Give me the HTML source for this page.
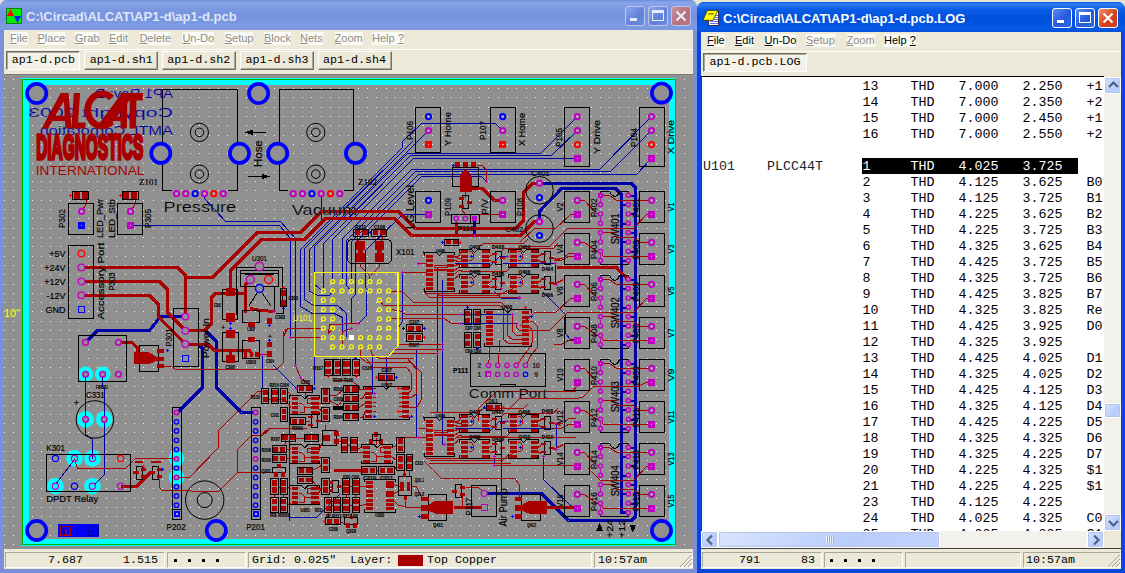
<!DOCTYPE html>
<html><head><meta charset="utf-8"><title>Circad</title><style>
*{box-sizing:border-box;margin:0;padding:0}
html,body{width:1125px;height:573px;overflow:hidden;background:#e9e3cf;font-family:"Liberation Sans",sans-serif}
.abs{position:absolute}
.win{position:absolute;overflow:hidden}
#w1{left:0;top:0;width:697px;height:573px;background:#7b8fd8;border-radius:7px 7px 0 0}
#w2{left:697px;top:2px;width:428px;height:571px;background:#0a46de;border-radius:7px 7px 0 0}
.tb{position:absolute;left:0;top:0;right:0;height:30px}
#w1 .tb{background:linear-gradient(#6f90e0 0%,#8aa6ea 10%,#7a97e0 30%,#7693de 60%,#7e9be4 85%,#7b97df 100%)}
#w2 .tb{background:linear-gradient(#0a5fe8 0%,#2f7bf2 8%,#0a5ce6 25%,#0050dc 55%,#0458e8 85%,#0651dc 100%)}
.tt{position:absolute;font-weight:bold;font-size:13px;color:#fff;white-space:nowrap}
#w1 .tt{color:#dfe6f8}
.cb{position:absolute;width:20px;height:20px;border-radius:3px;border:1px solid #fff}
#w1 .cb{border-color:#b9c6ee;background:linear-gradient(135deg,#8fa6ea,#5f7fd8 60%,#6f8ee0)}
#w1 .cb.x{background:linear-gradient(135deg,#c98f98,#b5707c 60%,#b87782)}
#w2 .cb{background:linear-gradient(135deg,#5d8ff5,#2459dc 55%,#2f66e6)}
#w2 .cb.x{background:linear-gradient(135deg,#f09070,#d6421c 55%,#c8401e)}
.menu{position:absolute;background:#ece9d8;font-size:11px;color:#000}
.menu span{position:absolute;top:2px;height:13px;line-height:13px;white-space:nowrap;background:#fbfaf5}
.menu span.d{color:#8d8d84}
.menu u{text-decoration:underline}
.tabs{position:absolute;background:#ece9d8;border-top:1px solid #fff}
.tab{position:absolute;height:19px;font-family:"Liberation Mono",monospace;font-size:11.7px;line-height:17px;text-align:center;white-space:nowrap;color:#000;background:#ece9d8;border:1px solid;border-color:#fff #716f64 #716f64 #fff;box-shadow:inset -1px -1px 0 #aca899}
.tab.sel{border-color:#716f64 #fff #fff #716f64;box-shadow:inset 1px 1px 0 #aca899;background:#f4f2e8}
.sb{position:absolute;background:#ece9d8;height:20px;font-family:"Liberation Mono",monospace;font-size:11.7px;line-height:17px;color:#000;white-space:pre}
.sb .c{position:absolute;top:3px;height:16px;border:1px solid;border-color:#aca899 #fff #fff #aca899}
.sb .t{position:absolute;top:3px}
</style></head><body>
<div class="win" id="w1">
<div class="tb"></div>
<svg class="abs" style="left:6px;top:8px" width="16" height="16"><rect width="16" height="16" fill="#0c7a10"/><rect x="1" y="1" width="14" height="14" fill="#00ee00"/><polygon points="1,8 4.5,1 8,8" fill="#ff0000"/><polygon points="8,8 11.5,15 15,8" fill="#0020ff"/></svg>
<div class="tt" style="left:26px;top:9px">C:\Circad\ALCAT\AP1-d\ap1-d.pcb</div>
<div class="cb mn" style="left:625px;top:6px"><div class="abs" style="left:4px;top:11px;width:7px;height:3px;background:#e8ecfa"></div></div>
<div class="cb mx" style="left:648px;top:6px"><div class="abs" style="left:3px;top:3px;width:12px;height:11px;border:1px solid #e8ecfa;border-top-width:3px"></div></div>
<div class="cb x" style="left:671px;top:6px"><svg class="abs" style="left:0;top:0" width="18" height="18"><path d="M4.5 4.5L13.5 13.5M13.5 4.5L4.5 13.5" stroke="#e8ecfa" stroke-width="2.2" fill="none"/></svg></div>
<div class="menu" style="left:4px;top:30px;width:689px;height:19px">
<span class="d" style="left:6px"><u>F</u>ile</span>
<span class="d" style="left:33.5px"><u>P</u>lace</span>
<span class="d" style="left:71px"><u>G</u>rab</span>
<span class="d" style="left:105px"><u>E</u>dit</span>
<span class="d" style="left:135.4px"><u>D</u>elete</span>
<span class="d" style="left:178.4px"><u>U</u>n-Do</span>
<span class="d" style="left:220.7px"><u>S</u>etup</span>
<span class="d" style="left:260px"><u>B</u>lock</span>
<span class="d" style="left:296px"><u>N</u>ets</span>
<span class="d" style="left:330.6px"><u>Z</u>oom</span>
<span class="d" style="left:368px">Help <u>?</u></span>
</div>
<div class="tabs" style="left:4px;top:49px;width:689px;height:26px">
<div class="tab sel" style="left:2.4px;top:1px;width:74px">ap1-d.pcb</div>
<div class="tab" style="left:80.3px;top:1px;width:74px">ap1-d.sh1</div>
<div class="tab" style="left:157.8px;top:1px;width:74px">ap1-d.sh2</div>
<div class="tab" style="left:236px;top:1px;width:74px">ap1-d.sh3</div>
<div class="tab" style="left:313.5px;top:1px;width:74px">ap1-d.sh4</div>
</div>
<svg class="abs" style="left:4px;top:74px" width="689" height="476" viewBox="4 74 689 476" font-family="Liberation Sans, sans-serif" shape-rendering="crispEdges">
<rect x="4" y="74" width="689" height="476" fill="#909090"/><rect x="4" y="74" width="689" height="1" fill="#7a7a7a"/>
<path d="M4 79.5m0 0h1m8 0h1m8 0h1m9 0h1m8 0h1m8 0h1m9 0h1m8 0h1m8 0h1m9 0h1m8 0h1m8 0h1m9 0h1m8 0h1m8 0h1m8 0h1m9 0h1m8 0h1m8 0h1m9 0h1m8 0h1m8 0h1m9 0h1m8 0h1m8 0h1m9 0h1m8 0h1m8 0h1m9 0h1m8 0h1m8 0h1m9 0h1m8 0h1m8 0h1m9 0h1m8 0h1m8 0h1m8 0h1m9 0h1m8 0h1m8 0h1m9 0h1m8 0h1m8 0h1m9 0h1m8 0h1m8 0h1m9 0h1m8 0h1m8 0h1m9 0h1m8 0h1m8 0h1m9 0h1m8 0h1m8 0h1m9 0h1m8 0h1m8 0h1m8 0h1m9 0h1m8 0h1m8 0h1m9 0h1m8 0h1m8 0h1m9 0h1m8 0h1m8 0h1m9 0h1m8 0h1m8 0h1m9 0h1m8 0h1M4 88.5m0 0h1m8 0h1m8 0h1m9 0h1m8 0h1m8 0h1m9 0h1m8 0h1m8 0h1m9 0h1m8 0h1m8 0h1m9 0h1m8 0h1m8 0h1m8 0h1m9 0h1m8 0h1m8 0h1m9 0h1m8 0h1m8 0h1m9 0h1m8 0h1m8 0h1m9 0h1m8 0h1m8 0h1m9 0h1m8 0h1m8 0h1m9 0h1m8 0h1m8 0h1m9 0h1m8 0h1m8 0h1m8 0h1m9 0h1m8 0h1m8 0h1m9 0h1m8 0h1m8 0h1m9 0h1m8 0h1m8 0h1m9 0h1m8 0h1m8 0h1m9 0h1m8 0h1m8 0h1m9 0h1m8 0h1m8 0h1m9 0h1m8 0h1m8 0h1m8 0h1m9 0h1m8 0h1m8 0h1m9 0h1m8 0h1m8 0h1m9 0h1m8 0h1m8 0h1m9 0h1m8 0h1m8 0h1m9 0h1m8 0h1M4 97.5m0 0h1m8 0h1m8 0h1m9 0h1m8 0h1m8 0h1m9 0h1m8 0h1m8 0h1m9 0h1m8 0h1m8 0h1m9 0h1m8 0h1m8 0h1m8 0h1m9 0h1m8 0h1m8 0h1m9 0h1m8 0h1m8 0h1m9 0h1m8 0h1m8 0h1m9 0h1m8 0h1m8 0h1m9 0h1m8 0h1m8 0h1m9 0h1m8 0h1m8 0h1m9 0h1m8 0h1m8 0h1m8 0h1m9 0h1m8 0h1m8 0h1m9 0h1m8 0h1m8 0h1m9 0h1m8 0h1m8 0h1m9 0h1m8 0h1m8 0h1m9 0h1m8 0h1m8 0h1m9 0h1m8 0h1m8 0h1m9 0h1m8 0h1m8 0h1m8 0h1m9 0h1m8 0h1m8 0h1m9 0h1m8 0h1m8 0h1m9 0h1m8 0h1m8 0h1m9 0h1m8 0h1m8 0h1m9 0h1m8 0h1M4 107.5m0 0h1m8 0h1m8 0h1m9 0h1m8 0h1m8 0h1m9 0h1m8 0h1m8 0h1m9 0h1m8 0h1m8 0h1m9 0h1m8 0h1m8 0h1m8 0h1m9 0h1m8 0h1m8 0h1m9 0h1m8 0h1m8 0h1m9 0h1m8 0h1m8 0h1m9 0h1m8 0h1m8 0h1m9 0h1m8 0h1m8 0h1m9 0h1m8 0h1m8 0h1m9 0h1m8 0h1m8 0h1m8 0h1m9 0h1m8 0h1m8 0h1m9 0h1m8 0h1m8 0h1m9 0h1m8 0h1m8 0h1m9 0h1m8 0h1m8 0h1m9 0h1m8 0h1m8 0h1m9 0h1m8 0h1m8 0h1m9 0h1m8 0h1m8 0h1m8 0h1m9 0h1m8 0h1m8 0h1m9 0h1m8 0h1m8 0h1m9 0h1m8 0h1m8 0h1m9 0h1m8 0h1m8 0h1m9 0h1m8 0h1M4 116.5m0 0h1m8 0h1m8 0h1m9 0h1m8 0h1m8 0h1m9 0h1m8 0h1m8 0h1m9 0h1m8 0h1m8 0h1m9 0h1m8 0h1m8 0h1m8 0h1m9 0h1m8 0h1m8 0h1m9 0h1m8 0h1m8 0h1m9 0h1m8 0h1m8 0h1m9 0h1m8 0h1m8 0h1m9 0h1m8 0h1m8 0h1m9 0h1m8 0h1m8 0h1m9 0h1m8 0h1m8 0h1m8 0h1m9 0h1m8 0h1m8 0h1m9 0h1m8 0h1m8 0h1m9 0h1m8 0h1m8 0h1m9 0h1m8 0h1m8 0h1m9 0h1m8 0h1m8 0h1m9 0h1m8 0h1m8 0h1m9 0h1m8 0h1m8 0h1m8 0h1m9 0h1m8 0h1m8 0h1m9 0h1m8 0h1m8 0h1m9 0h1m8 0h1m8 0h1m9 0h1m8 0h1m8 0h1m9 0h1m8 0h1M4 125.5m0 0h1m8 0h1m8 0h1m9 0h1m8 0h1m8 0h1m9 0h1m8 0h1m8 0h1m9 0h1m8 0h1m8 0h1m9 0h1m8 0h1m8 0h1m8 0h1m9 0h1m8 0h1m8 0h1m9 0h1m8 0h1m8 0h1m9 0h1m8 0h1m8 0h1m9 0h1m8 0h1m8 0h1m9 0h1m8 0h1m8 0h1m9 0h1m8 0h1m8 0h1m9 0h1m8 0h1m8 0h1m8 0h1m9 0h1m8 0h1m8 0h1m9 0h1m8 0h1m8 0h1m9 0h1m8 0h1m8 0h1m9 0h1m8 0h1m8 0h1m9 0h1m8 0h1m8 0h1m9 0h1m8 0h1m8 0h1m9 0h1m8 0h1m8 0h1m8 0h1m9 0h1m8 0h1m8 0h1m9 0h1m8 0h1m8 0h1m9 0h1m8 0h1m8 0h1m9 0h1m8 0h1m8 0h1m9 0h1m8 0h1M4 135.5m0 0h1m8 0h1m8 0h1m9 0h1m8 0h1m8 0h1m9 0h1m8 0h1m8 0h1m9 0h1m8 0h1m8 0h1m9 0h1m8 0h1m8 0h1m8 0h1m9 0h1m8 0h1m8 0h1m9 0h1m8 0h1m8 0h1m9 0h1m8 0h1m8 0h1m9 0h1m8 0h1m8 0h1m9 0h1m8 0h1m8 0h1m9 0h1m8 0h1m8 0h1m9 0h1m8 0h1m8 0h1m8 0h1m9 0h1m8 0h1m8 0h1m9 0h1m8 0h1m8 0h1m9 0h1m8 0h1m8 0h1m9 0h1m8 0h1m8 0h1m9 0h1m8 0h1m8 0h1m9 0h1m8 0h1m8 0h1m9 0h1m8 0h1m8 0h1m8 0h1m9 0h1m8 0h1m8 0h1m9 0h1m8 0h1m8 0h1m9 0h1m8 0h1m8 0h1m9 0h1m8 0h1m8 0h1m9 0h1m8 0h1M4 144.5m0 0h1m8 0h1m8 0h1m9 0h1m8 0h1m8 0h1m9 0h1m8 0h1m8 0h1m9 0h1m8 0h1m8 0h1m9 0h1m8 0h1m8 0h1m8 0h1m9 0h1m8 0h1m8 0h1m9 0h1m8 0h1m8 0h1m9 0h1m8 0h1m8 0h1m9 0h1m8 0h1m8 0h1m9 0h1m8 0h1m8 0h1m9 0h1m8 0h1m8 0h1m9 0h1m8 0h1m8 0h1m8 0h1m9 0h1m8 0h1m8 0h1m9 0h1m8 0h1m8 0h1m9 0h1m8 0h1m8 0h1m9 0h1m8 0h1m8 0h1m9 0h1m8 0h1m8 0h1m9 0h1m8 0h1m8 0h1m9 0h1m8 0h1m8 0h1m8 0h1m9 0h1m8 0h1m8 0h1m9 0h1m8 0h1m8 0h1m9 0h1m8 0h1m8 0h1m9 0h1m8 0h1m8 0h1m9 0h1m8 0h1M4 153.5m0 0h1m8 0h1m8 0h1m9 0h1m8 0h1m8 0h1m9 0h1m8 0h1m8 0h1m9 0h1m8 0h1m8 0h1m9 0h1m8 0h1m8 0h1m8 0h1m9 0h1m8 0h1m8 0h1m9 0h1m8 0h1m8 0h1m9 0h1m8 0h1m8 0h1m9 0h1m8 0h1m8 0h1m9 0h1m8 0h1m8 0h1m9 0h1m8 0h1m8 0h1m9 0h1m8 0h1m8 0h1m8 0h1m9 0h1m8 0h1m8 0h1m9 0h1m8 0h1m8 0h1m9 0h1m8 0h1m8 0h1m9 0h1m8 0h1m8 0h1m9 0h1m8 0h1m8 0h1m9 0h1m8 0h1m8 0h1m9 0h1m8 0h1m8 0h1m8 0h1m9 0h1m8 0h1m8 0h1m9 0h1m8 0h1m8 0h1m9 0h1m8 0h1m8 0h1m9 0h1m8 0h1m8 0h1m9 0h1m8 0h1M4 163.5m0 0h1m8 0h1m8 0h1m9 0h1m8 0h1m8 0h1m9 0h1m8 0h1m8 0h1m9 0h1m8 0h1m8 0h1m9 0h1m8 0h1m8 0h1m8 0h1m9 0h1m8 0h1m8 0h1m9 0h1m8 0h1m8 0h1m9 0h1m8 0h1m8 0h1m9 0h1m8 0h1m8 0h1m9 0h1m8 0h1m8 0h1m9 0h1m8 0h1m8 0h1m9 0h1m8 0h1m8 0h1m8 0h1m9 0h1m8 0h1m8 0h1m9 0h1m8 0h1m8 0h1m9 0h1m8 0h1m8 0h1m9 0h1m8 0h1m8 0h1m9 0h1m8 0h1m8 0h1m9 0h1m8 0h1m8 0h1m9 0h1m8 0h1m8 0h1m8 0h1m9 0h1m8 0h1m8 0h1m9 0h1m8 0h1m8 0h1m9 0h1m8 0h1m8 0h1m9 0h1m8 0h1m8 0h1m9 0h1m8 0h1M4 172.5m0 0h1m8 0h1m8 0h1m9 0h1m8 0h1m8 0h1m9 0h1m8 0h1m8 0h1m9 0h1m8 0h1m8 0h1m9 0h1m8 0h1m8 0h1m8 0h1m9 0h1m8 0h1m8 0h1m9 0h1m8 0h1m8 0h1m9 0h1m8 0h1m8 0h1m9 0h1m8 0h1m8 0h1m9 0h1m8 0h1m8 0h1m9 0h1m8 0h1m8 0h1m9 0h1m8 0h1m8 0h1m8 0h1m9 0h1m8 0h1m8 0h1m9 0h1m8 0h1m8 0h1m9 0h1m8 0h1m8 0h1m9 0h1m8 0h1m8 0h1m9 0h1m8 0h1m8 0h1m9 0h1m8 0h1m8 0h1m9 0h1m8 0h1m8 0h1m8 0h1m9 0h1m8 0h1m8 0h1m9 0h1m8 0h1m8 0h1m9 0h1m8 0h1m8 0h1m9 0h1m8 0h1m8 0h1m9 0h1m8 0h1M4 181.5m0 0h1m8 0h1m8 0h1m9 0h1m8 0h1m8 0h1m9 0h1m8 0h1m8 0h1m9 0h1m8 0h1m8 0h1m9 0h1m8 0h1m8 0h1m8 0h1m9 0h1m8 0h1m8 0h1m9 0h1m8 0h1m8 0h1m9 0h1m8 0h1m8 0h1m9 0h1m8 0h1m8 0h1m9 0h1m8 0h1m8 0h1m9 0h1m8 0h1m8 0h1m9 0h1m8 0h1m8 0h1m8 0h1m9 0h1m8 0h1m8 0h1m9 0h1m8 0h1m8 0h1m9 0h1m8 0h1m8 0h1m9 0h1m8 0h1m8 0h1m9 0h1m8 0h1m8 0h1m9 0h1m8 0h1m8 0h1m9 0h1m8 0h1m8 0h1m8 0h1m9 0h1m8 0h1m8 0h1m9 0h1m8 0h1m8 0h1m9 0h1m8 0h1m8 0h1m9 0h1m8 0h1m8 0h1m9 0h1m8 0h1M4 190.5m0 0h1m8 0h1m8 0h1m9 0h1m8 0h1m8 0h1m9 0h1m8 0h1m8 0h1m9 0h1m8 0h1m8 0h1m9 0h1m8 0h1m8 0h1m8 0h1m9 0h1m8 0h1m8 0h1m9 0h1m8 0h1m8 0h1m9 0h1m8 0h1m8 0h1m9 0h1m8 0h1m8 0h1m9 0h1m8 0h1m8 0h1m9 0h1m8 0h1m8 0h1m9 0h1m8 0h1m8 0h1m8 0h1m9 0h1m8 0h1m8 0h1m9 0h1m8 0h1m8 0h1m9 0h1m8 0h1m8 0h1m9 0h1m8 0h1m8 0h1m9 0h1m8 0h1m8 0h1m9 0h1m8 0h1m8 0h1m9 0h1m8 0h1m8 0h1m8 0h1m9 0h1m8 0h1m8 0h1m9 0h1m8 0h1m8 0h1m9 0h1m8 0h1m8 0h1m9 0h1m8 0h1m8 0h1m9 0h1m8 0h1M4 200.5m0 0h1m8 0h1m8 0h1m9 0h1m8 0h1m8 0h1m9 0h1m8 0h1m8 0h1m9 0h1m8 0h1m8 0h1m9 0h1m8 0h1m8 0h1m8 0h1m9 0h1m8 0h1m8 0h1m9 0h1m8 0h1m8 0h1m9 0h1m8 0h1m8 0h1m9 0h1m8 0h1m8 0h1m9 0h1m8 0h1m8 0h1m9 0h1m8 0h1m8 0h1m9 0h1m8 0h1m8 0h1m8 0h1m9 0h1m8 0h1m8 0h1m9 0h1m8 0h1m8 0h1m9 0h1m8 0h1m8 0h1m9 0h1m8 0h1m8 0h1m9 0h1m8 0h1m8 0h1m9 0h1m8 0h1m8 0h1m9 0h1m8 0h1m8 0h1m8 0h1m9 0h1m8 0h1m8 0h1m9 0h1m8 0h1m8 0h1m9 0h1m8 0h1m8 0h1m9 0h1m8 0h1m8 0h1m9 0h1m8 0h1M4 209.5m0 0h1m8 0h1m8 0h1m9 0h1m8 0h1m8 0h1m9 0h1m8 0h1m8 0h1m9 0h1m8 0h1m8 0h1m9 0h1m8 0h1m8 0h1m8 0h1m9 0h1m8 0h1m8 0h1m9 0h1m8 0h1m8 0h1m9 0h1m8 0h1m8 0h1m9 0h1m8 0h1m8 0h1m9 0h1m8 0h1m8 0h1m9 0h1m8 0h1m8 0h1m9 0h1m8 0h1m8 0h1m8 0h1m9 0h1m8 0h1m8 0h1m9 0h1m8 0h1m8 0h1m9 0h1m8 0h1m8 0h1m9 0h1m8 0h1m8 0h1m9 0h1m8 0h1m8 0h1m9 0h1m8 0h1m8 0h1m9 0h1m8 0h1m8 0h1m8 0h1m9 0h1m8 0h1m8 0h1m9 0h1m8 0h1m8 0h1m9 0h1m8 0h1m8 0h1m9 0h1m8 0h1m8 0h1m9 0h1m8 0h1M4 218.5m0 0h1m8 0h1m8 0h1m9 0h1m8 0h1m8 0h1m9 0h1m8 0h1m8 0h1m9 0h1m8 0h1m8 0h1m9 0h1m8 0h1m8 0h1m8 0h1m9 0h1m8 0h1m8 0h1m9 0h1m8 0h1m8 0h1m9 0h1m8 0h1m8 0h1m9 0h1m8 0h1m8 0h1m9 0h1m8 0h1m8 0h1m9 0h1m8 0h1m8 0h1m9 0h1m8 0h1m8 0h1m8 0h1m9 0h1m8 0h1m8 0h1m9 0h1m8 0h1m8 0h1m9 0h1m8 0h1m8 0h1m9 0h1m8 0h1m8 0h1m9 0h1m8 0h1m8 0h1m9 0h1m8 0h1m8 0h1m9 0h1m8 0h1m8 0h1m8 0h1m9 0h1m8 0h1m8 0h1m9 0h1m8 0h1m8 0h1m9 0h1m8 0h1m8 0h1m9 0h1m8 0h1m8 0h1m9 0h1m8 0h1M4 228.5m0 0h1m8 0h1m8 0h1m9 0h1m8 0h1m8 0h1m9 0h1m8 0h1m8 0h1m9 0h1m8 0h1m8 0h1m9 0h1m8 0h1m8 0h1m8 0h1m9 0h1m8 0h1m8 0h1m9 0h1m8 0h1m8 0h1m9 0h1m8 0h1m8 0h1m9 0h1m8 0h1m8 0h1m9 0h1m8 0h1m8 0h1m9 0h1m8 0h1m8 0h1m9 0h1m8 0h1m8 0h1m8 0h1m9 0h1m8 0h1m8 0h1m9 0h1m8 0h1m8 0h1m9 0h1m8 0h1m8 0h1m9 0h1m8 0h1m8 0h1m9 0h1m8 0h1m8 0h1m9 0h1m8 0h1m8 0h1m9 0h1m8 0h1m8 0h1m8 0h1m9 0h1m8 0h1m8 0h1m9 0h1m8 0h1m8 0h1m9 0h1m8 0h1m8 0h1m9 0h1m8 0h1m8 0h1m9 0h1m8 0h1M4 237.5m0 0h1m8 0h1m8 0h1m9 0h1m8 0h1m8 0h1m9 0h1m8 0h1m8 0h1m9 0h1m8 0h1m8 0h1m9 0h1m8 0h1m8 0h1m8 0h1m9 0h1m8 0h1m8 0h1m9 0h1m8 0h1m8 0h1m9 0h1m8 0h1m8 0h1m9 0h1m8 0h1m8 0h1m9 0h1m8 0h1m8 0h1m9 0h1m8 0h1m8 0h1m9 0h1m8 0h1m8 0h1m8 0h1m9 0h1m8 0h1m8 0h1m9 0h1m8 0h1m8 0h1m9 0h1m8 0h1m8 0h1m9 0h1m8 0h1m8 0h1m9 0h1m8 0h1m8 0h1m9 0h1m8 0h1m8 0h1m9 0h1m8 0h1m8 0h1m8 0h1m9 0h1m8 0h1m8 0h1m9 0h1m8 0h1m8 0h1m9 0h1m8 0h1m8 0h1m9 0h1m8 0h1m8 0h1m9 0h1m8 0h1M4 246.5m0 0h1m8 0h1m8 0h1m9 0h1m8 0h1m8 0h1m9 0h1m8 0h1m8 0h1m9 0h1m8 0h1m8 0h1m9 0h1m8 0h1m8 0h1m8 0h1m9 0h1m8 0h1m8 0h1m9 0h1m8 0h1m8 0h1m9 0h1m8 0h1m8 0h1m9 0h1m8 0h1m8 0h1m9 0h1m8 0h1m8 0h1m9 0h1m8 0h1m8 0h1m9 0h1m8 0h1m8 0h1m8 0h1m9 0h1m8 0h1m8 0h1m9 0h1m8 0h1m8 0h1m9 0h1m8 0h1m8 0h1m9 0h1m8 0h1m8 0h1m9 0h1m8 0h1m8 0h1m9 0h1m8 0h1m8 0h1m9 0h1m8 0h1m8 0h1m8 0h1m9 0h1m8 0h1m8 0h1m9 0h1m8 0h1m8 0h1m9 0h1m8 0h1m8 0h1m9 0h1m8 0h1m8 0h1m9 0h1m8 0h1M4 256.5m0 0h1m8 0h1m8 0h1m9 0h1m8 0h1m8 0h1m9 0h1m8 0h1m8 0h1m9 0h1m8 0h1m8 0h1m9 0h1m8 0h1m8 0h1m8 0h1m9 0h1m8 0h1m8 0h1m9 0h1m8 0h1m8 0h1m9 0h1m8 0h1m8 0h1m9 0h1m8 0h1m8 0h1m9 0h1m8 0h1m8 0h1m9 0h1m8 0h1m8 0h1m9 0h1m8 0h1m8 0h1m8 0h1m9 0h1m8 0h1m8 0h1m9 0h1m8 0h1m8 0h1m9 0h1m8 0h1m8 0h1m9 0h1m8 0h1m8 0h1m9 0h1m8 0h1m8 0h1m9 0h1m8 0h1m8 0h1m9 0h1m8 0h1m8 0h1m8 0h1m9 0h1m8 0h1m8 0h1m9 0h1m8 0h1m8 0h1m9 0h1m8 0h1m8 0h1m9 0h1m8 0h1m8 0h1m9 0h1m8 0h1M4 265.5m0 0h1m8 0h1m8 0h1m9 0h1m8 0h1m8 0h1m9 0h1m8 0h1m8 0h1m9 0h1m8 0h1m8 0h1m9 0h1m8 0h1m8 0h1m8 0h1m9 0h1m8 0h1m8 0h1m9 0h1m8 0h1m8 0h1m9 0h1m8 0h1m8 0h1m9 0h1m8 0h1m8 0h1m9 0h1m8 0h1m8 0h1m9 0h1m8 0h1m8 0h1m9 0h1m8 0h1m8 0h1m8 0h1m9 0h1m8 0h1m8 0h1m9 0h1m8 0h1m8 0h1m9 0h1m8 0h1m8 0h1m9 0h1m8 0h1m8 0h1m9 0h1m8 0h1m8 0h1m9 0h1m8 0h1m8 0h1m9 0h1m8 0h1m8 0h1m8 0h1m9 0h1m8 0h1m8 0h1m9 0h1m8 0h1m8 0h1m9 0h1m8 0h1m8 0h1m9 0h1m8 0h1m8 0h1m9 0h1m8 0h1M4 274.5m0 0h1m8 0h1m8 0h1m9 0h1m8 0h1m8 0h1m9 0h1m8 0h1m8 0h1m9 0h1m8 0h1m8 0h1m9 0h1m8 0h1m8 0h1m8 0h1m9 0h1m8 0h1m8 0h1m9 0h1m8 0h1m8 0h1m9 0h1m8 0h1m8 0h1m9 0h1m8 0h1m8 0h1m9 0h1m8 0h1m8 0h1m9 0h1m8 0h1m8 0h1m9 0h1m8 0h1m8 0h1m8 0h1m9 0h1m8 0h1m8 0h1m9 0h1m8 0h1m8 0h1m9 0h1m8 0h1m8 0h1m9 0h1m8 0h1m8 0h1m9 0h1m8 0h1m8 0h1m9 0h1m8 0h1m8 0h1m9 0h1m8 0h1m8 0h1m8 0h1m9 0h1m8 0h1m8 0h1m9 0h1m8 0h1m8 0h1m9 0h1m8 0h1m8 0h1m9 0h1m8 0h1m8 0h1m9 0h1m8 0h1M4 284.5m0 0h1m8 0h1m8 0h1m9 0h1m8 0h1m8 0h1m9 0h1m8 0h1m8 0h1m9 0h1m8 0h1m8 0h1m9 0h1m8 0h1m8 0h1m8 0h1m9 0h1m8 0h1m8 0h1m9 0h1m8 0h1m8 0h1m9 0h1m8 0h1m8 0h1m9 0h1m8 0h1m8 0h1m9 0h1m8 0h1m8 0h1m9 0h1m8 0h1m8 0h1m9 0h1m8 0h1m8 0h1m8 0h1m9 0h1m8 0h1m8 0h1m9 0h1m8 0h1m8 0h1m9 0h1m8 0h1m8 0h1m9 0h1m8 0h1m8 0h1m9 0h1m8 0h1m8 0h1m9 0h1m8 0h1m8 0h1m9 0h1m8 0h1m8 0h1m8 0h1m9 0h1m8 0h1m8 0h1m9 0h1m8 0h1m8 0h1m9 0h1m8 0h1m8 0h1m9 0h1m8 0h1m8 0h1m9 0h1m8 0h1M4 293.5m0 0h1m8 0h1m8 0h1m9 0h1m8 0h1m8 0h1m9 0h1m8 0h1m8 0h1m9 0h1m8 0h1m8 0h1m9 0h1m8 0h1m8 0h1m8 0h1m9 0h1m8 0h1m8 0h1m9 0h1m8 0h1m8 0h1m9 0h1m8 0h1m8 0h1m9 0h1m8 0h1m8 0h1m9 0h1m8 0h1m8 0h1m9 0h1m8 0h1m8 0h1m9 0h1m8 0h1m8 0h1m8 0h1m9 0h1m8 0h1m8 0h1m9 0h1m8 0h1m8 0h1m9 0h1m8 0h1m8 0h1m9 0h1m8 0h1m8 0h1m9 0h1m8 0h1m8 0h1m9 0h1m8 0h1m8 0h1m9 0h1m8 0h1m8 0h1m8 0h1m9 0h1m8 0h1m8 0h1m9 0h1m8 0h1m8 0h1m9 0h1m8 0h1m8 0h1m9 0h1m8 0h1m8 0h1m9 0h1m8 0h1M4 302.5m0 0h1m8 0h1m8 0h1m9 0h1m8 0h1m8 0h1m9 0h1m8 0h1m8 0h1m9 0h1m8 0h1m8 0h1m9 0h1m8 0h1m8 0h1m8 0h1m9 0h1m8 0h1m8 0h1m9 0h1m8 0h1m8 0h1m9 0h1m8 0h1m8 0h1m9 0h1m8 0h1m8 0h1m9 0h1m8 0h1m8 0h1m9 0h1m8 0h1m8 0h1m9 0h1m8 0h1m8 0h1m8 0h1m9 0h1m8 0h1m8 0h1m9 0h1m8 0h1m8 0h1m9 0h1m8 0h1m8 0h1m9 0h1m8 0h1m8 0h1m9 0h1m8 0h1m8 0h1m9 0h1m8 0h1m8 0h1m9 0h1m8 0h1m8 0h1m8 0h1m9 0h1m8 0h1m8 0h1m9 0h1m8 0h1m8 0h1m9 0h1m8 0h1m8 0h1m9 0h1m8 0h1m8 0h1m9 0h1m8 0h1M4 311.5m0 0h1m8 0h1m8 0h1m9 0h1m8 0h1m8 0h1m9 0h1m8 0h1m8 0h1m9 0h1m8 0h1m8 0h1m9 0h1m8 0h1m8 0h1m8 0h1m9 0h1m8 0h1m8 0h1m9 0h1m8 0h1m8 0h1m9 0h1m8 0h1m8 0h1m9 0h1m8 0h1m8 0h1m9 0h1m8 0h1m8 0h1m9 0h1m8 0h1m8 0h1m9 0h1m8 0h1m8 0h1m8 0h1m9 0h1m8 0h1m8 0h1m9 0h1m8 0h1m8 0h1m9 0h1m8 0h1m8 0h1m9 0h1m8 0h1m8 0h1m9 0h1m8 0h1m8 0h1m9 0h1m8 0h1m8 0h1m9 0h1m8 0h1m8 0h1m8 0h1m9 0h1m8 0h1m8 0h1m9 0h1m8 0h1m8 0h1m9 0h1m8 0h1m8 0h1m9 0h1m8 0h1m8 0h1m9 0h1m8 0h1M4 321.5m0 0h1m8 0h1m8 0h1m9 0h1m8 0h1m8 0h1m9 0h1m8 0h1m8 0h1m9 0h1m8 0h1m8 0h1m9 0h1m8 0h1m8 0h1m8 0h1m9 0h1m8 0h1m8 0h1m9 0h1m8 0h1m8 0h1m9 0h1m8 0h1m8 0h1m9 0h1m8 0h1m8 0h1m9 0h1m8 0h1m8 0h1m9 0h1m8 0h1m8 0h1m9 0h1m8 0h1m8 0h1m8 0h1m9 0h1m8 0h1m8 0h1m9 0h1m8 0h1m8 0h1m9 0h1m8 0h1m8 0h1m9 0h1m8 0h1m8 0h1m9 0h1m8 0h1m8 0h1m9 0h1m8 0h1m8 0h1m9 0h1m8 0h1m8 0h1m8 0h1m9 0h1m8 0h1m8 0h1m9 0h1m8 0h1m8 0h1m9 0h1m8 0h1m8 0h1m9 0h1m8 0h1m8 0h1m9 0h1m8 0h1M4 330.5m0 0h1m8 0h1m8 0h1m9 0h1m8 0h1m8 0h1m9 0h1m8 0h1m8 0h1m9 0h1m8 0h1m8 0h1m9 0h1m8 0h1m8 0h1m8 0h1m9 0h1m8 0h1m8 0h1m9 0h1m8 0h1m8 0h1m9 0h1m8 0h1m8 0h1m9 0h1m8 0h1m8 0h1m9 0h1m8 0h1m8 0h1m9 0h1m8 0h1m8 0h1m9 0h1m8 0h1m8 0h1m8 0h1m9 0h1m8 0h1m8 0h1m9 0h1m8 0h1m8 0h1m9 0h1m8 0h1m8 0h1m9 0h1m8 0h1m8 0h1m9 0h1m8 0h1m8 0h1m9 0h1m8 0h1m8 0h1m9 0h1m8 0h1m8 0h1m8 0h1m9 0h1m8 0h1m8 0h1m9 0h1m8 0h1m8 0h1m9 0h1m8 0h1m8 0h1m9 0h1m8 0h1m8 0h1m9 0h1m8 0h1M4 339.5m0 0h1m8 0h1m8 0h1m9 0h1m8 0h1m8 0h1m9 0h1m8 0h1m8 0h1m9 0h1m8 0h1m8 0h1m9 0h1m8 0h1m8 0h1m8 0h1m9 0h1m8 0h1m8 0h1m9 0h1m8 0h1m8 0h1m9 0h1m8 0h1m8 0h1m9 0h1m8 0h1m8 0h1m9 0h1m8 0h1m8 0h1m9 0h1m8 0h1m8 0h1m9 0h1m8 0h1m8 0h1m8 0h1m9 0h1m8 0h1m8 0h1m9 0h1m8 0h1m8 0h1m9 0h1m8 0h1m8 0h1m9 0h1m8 0h1m8 0h1m9 0h1m8 0h1m8 0h1m9 0h1m8 0h1m8 0h1m9 0h1m8 0h1m8 0h1m8 0h1m9 0h1m8 0h1m8 0h1m9 0h1m8 0h1m8 0h1m9 0h1m8 0h1m8 0h1m9 0h1m8 0h1m8 0h1m9 0h1m8 0h1M4 349.5m0 0h1m8 0h1m8 0h1m9 0h1m8 0h1m8 0h1m9 0h1m8 0h1m8 0h1m9 0h1m8 0h1m8 0h1m9 0h1m8 0h1m8 0h1m8 0h1m9 0h1m8 0h1m8 0h1m9 0h1m8 0h1m8 0h1m9 0h1m8 0h1m8 0h1m9 0h1m8 0h1m8 0h1m9 0h1m8 0h1m8 0h1m9 0h1m8 0h1m8 0h1m9 0h1m8 0h1m8 0h1m8 0h1m9 0h1m8 0h1m8 0h1m9 0h1m8 0h1m8 0h1m9 0h1m8 0h1m8 0h1m9 0h1m8 0h1m8 0h1m9 0h1m8 0h1m8 0h1m9 0h1m8 0h1m8 0h1m9 0h1m8 0h1m8 0h1m8 0h1m9 0h1m8 0h1m8 0h1m9 0h1m8 0h1m8 0h1m9 0h1m8 0h1m8 0h1m9 0h1m8 0h1m8 0h1m9 0h1m8 0h1M4 358.5m0 0h1m8 0h1m8 0h1m9 0h1m8 0h1m8 0h1m9 0h1m8 0h1m8 0h1m9 0h1m8 0h1m8 0h1m9 0h1m8 0h1m8 0h1m8 0h1m9 0h1m8 0h1m8 0h1m9 0h1m8 0h1m8 0h1m9 0h1m8 0h1m8 0h1m9 0h1m8 0h1m8 0h1m9 0h1m8 0h1m8 0h1m9 0h1m8 0h1m8 0h1m9 0h1m8 0h1m8 0h1m8 0h1m9 0h1m8 0h1m8 0h1m9 0h1m8 0h1m8 0h1m9 0h1m8 0h1m8 0h1m9 0h1m8 0h1m8 0h1m9 0h1m8 0h1m8 0h1m9 0h1m8 0h1m8 0h1m9 0h1m8 0h1m8 0h1m8 0h1m9 0h1m8 0h1m8 0h1m9 0h1m8 0h1m8 0h1m9 0h1m8 0h1m8 0h1m9 0h1m8 0h1m8 0h1m9 0h1m8 0h1M4 367.5m0 0h1m8 0h1m8 0h1m9 0h1m8 0h1m8 0h1m9 0h1m8 0h1m8 0h1m9 0h1m8 0h1m8 0h1m9 0h1m8 0h1m8 0h1m8 0h1m9 0h1m8 0h1m8 0h1m9 0h1m8 0h1m8 0h1m9 0h1m8 0h1m8 0h1m9 0h1m8 0h1m8 0h1m9 0h1m8 0h1m8 0h1m9 0h1m8 0h1m8 0h1m9 0h1m8 0h1m8 0h1m8 0h1m9 0h1m8 0h1m8 0h1m9 0h1m8 0h1m8 0h1m9 0h1m8 0h1m8 0h1m9 0h1m8 0h1m8 0h1m9 0h1m8 0h1m8 0h1m9 0h1m8 0h1m8 0h1m9 0h1m8 0h1m8 0h1m8 0h1m9 0h1m8 0h1m8 0h1m9 0h1m8 0h1m8 0h1m9 0h1m8 0h1m8 0h1m9 0h1m8 0h1m8 0h1m9 0h1m8 0h1M4 377.5m0 0h1m8 0h1m8 0h1m9 0h1m8 0h1m8 0h1m9 0h1m8 0h1m8 0h1m9 0h1m8 0h1m8 0h1m9 0h1m8 0h1m8 0h1m8 0h1m9 0h1m8 0h1m8 0h1m9 0h1m8 0h1m8 0h1m9 0h1m8 0h1m8 0h1m9 0h1m8 0h1m8 0h1m9 0h1m8 0h1m8 0h1m9 0h1m8 0h1m8 0h1m9 0h1m8 0h1m8 0h1m8 0h1m9 0h1m8 0h1m8 0h1m9 0h1m8 0h1m8 0h1m9 0h1m8 0h1m8 0h1m9 0h1m8 0h1m8 0h1m9 0h1m8 0h1m8 0h1m9 0h1m8 0h1m8 0h1m9 0h1m8 0h1m8 0h1m8 0h1m9 0h1m8 0h1m8 0h1m9 0h1m8 0h1m8 0h1m9 0h1m8 0h1m8 0h1m9 0h1m8 0h1m8 0h1m9 0h1m8 0h1M4 386.5m0 0h1m8 0h1m8 0h1m9 0h1m8 0h1m8 0h1m9 0h1m8 0h1m8 0h1m9 0h1m8 0h1m8 0h1m9 0h1m8 0h1m8 0h1m8 0h1m9 0h1m8 0h1m8 0h1m9 0h1m8 0h1m8 0h1m9 0h1m8 0h1m8 0h1m9 0h1m8 0h1m8 0h1m9 0h1m8 0h1m8 0h1m9 0h1m8 0h1m8 0h1m9 0h1m8 0h1m8 0h1m8 0h1m9 0h1m8 0h1m8 0h1m9 0h1m8 0h1m8 0h1m9 0h1m8 0h1m8 0h1m9 0h1m8 0h1m8 0h1m9 0h1m8 0h1m8 0h1m9 0h1m8 0h1m8 0h1m9 0h1m8 0h1m8 0h1m8 0h1m9 0h1m8 0h1m8 0h1m9 0h1m8 0h1m8 0h1m9 0h1m8 0h1m8 0h1m9 0h1m8 0h1m8 0h1m9 0h1m8 0h1M4 395.5m0 0h1m8 0h1m8 0h1m9 0h1m8 0h1m8 0h1m9 0h1m8 0h1m8 0h1m9 0h1m8 0h1m8 0h1m9 0h1m8 0h1m8 0h1m8 0h1m9 0h1m8 0h1m8 0h1m9 0h1m8 0h1m8 0h1m9 0h1m8 0h1m8 0h1m9 0h1m8 0h1m8 0h1m9 0h1m8 0h1m8 0h1m9 0h1m8 0h1m8 0h1m9 0h1m8 0h1m8 0h1m8 0h1m9 0h1m8 0h1m8 0h1m9 0h1m8 0h1m8 0h1m9 0h1m8 0h1m8 0h1m9 0h1m8 0h1m8 0h1m9 0h1m8 0h1m8 0h1m9 0h1m8 0h1m8 0h1m9 0h1m8 0h1m8 0h1m8 0h1m9 0h1m8 0h1m8 0h1m9 0h1m8 0h1m8 0h1m9 0h1m8 0h1m8 0h1m9 0h1m8 0h1m8 0h1m9 0h1m8 0h1M4 405.5m0 0h1m8 0h1m8 0h1m9 0h1m8 0h1m8 0h1m9 0h1m8 0h1m8 0h1m9 0h1m8 0h1m8 0h1m9 0h1m8 0h1m8 0h1m8 0h1m9 0h1m8 0h1m8 0h1m9 0h1m8 0h1m8 0h1m9 0h1m8 0h1m8 0h1m9 0h1m8 0h1m8 0h1m9 0h1m8 0h1m8 0h1m9 0h1m8 0h1m8 0h1m9 0h1m8 0h1m8 0h1m8 0h1m9 0h1m8 0h1m8 0h1m9 0h1m8 0h1m8 0h1m9 0h1m8 0h1m8 0h1m9 0h1m8 0h1m8 0h1m9 0h1m8 0h1m8 0h1m9 0h1m8 0h1m8 0h1m9 0h1m8 0h1m8 0h1m8 0h1m9 0h1m8 0h1m8 0h1m9 0h1m8 0h1m8 0h1m9 0h1m8 0h1m8 0h1m9 0h1m8 0h1m8 0h1m9 0h1m8 0h1M4 414.5m0 0h1m8 0h1m8 0h1m9 0h1m8 0h1m8 0h1m9 0h1m8 0h1m8 0h1m9 0h1m8 0h1m8 0h1m9 0h1m8 0h1m8 0h1m8 0h1m9 0h1m8 0h1m8 0h1m9 0h1m8 0h1m8 0h1m9 0h1m8 0h1m8 0h1m9 0h1m8 0h1m8 0h1m9 0h1m8 0h1m8 0h1m9 0h1m8 0h1m8 0h1m9 0h1m8 0h1m8 0h1m8 0h1m9 0h1m8 0h1m8 0h1m9 0h1m8 0h1m8 0h1m9 0h1m8 0h1m8 0h1m9 0h1m8 0h1m8 0h1m9 0h1m8 0h1m8 0h1m9 0h1m8 0h1m8 0h1m9 0h1m8 0h1m8 0h1m8 0h1m9 0h1m8 0h1m8 0h1m9 0h1m8 0h1m8 0h1m9 0h1m8 0h1m8 0h1m9 0h1m8 0h1m8 0h1m9 0h1m8 0h1M4 423.5m0 0h1m8 0h1m8 0h1m9 0h1m8 0h1m8 0h1m9 0h1m8 0h1m8 0h1m9 0h1m8 0h1m8 0h1m9 0h1m8 0h1m8 0h1m8 0h1m9 0h1m8 0h1m8 0h1m9 0h1m8 0h1m8 0h1m9 0h1m8 0h1m8 0h1m9 0h1m8 0h1m8 0h1m9 0h1m8 0h1m8 0h1m9 0h1m8 0h1m8 0h1m9 0h1m8 0h1m8 0h1m8 0h1m9 0h1m8 0h1m8 0h1m9 0h1m8 0h1m8 0h1m9 0h1m8 0h1m8 0h1m9 0h1m8 0h1m8 0h1m9 0h1m8 0h1m8 0h1m9 0h1m8 0h1m8 0h1m9 0h1m8 0h1m8 0h1m8 0h1m9 0h1m8 0h1m8 0h1m9 0h1m8 0h1m8 0h1m9 0h1m8 0h1m8 0h1m9 0h1m8 0h1m8 0h1m9 0h1m8 0h1M4 432.5m0 0h1m8 0h1m8 0h1m9 0h1m8 0h1m8 0h1m9 0h1m8 0h1m8 0h1m9 0h1m8 0h1m8 0h1m9 0h1m8 0h1m8 0h1m8 0h1m9 0h1m8 0h1m8 0h1m9 0h1m8 0h1m8 0h1m9 0h1m8 0h1m8 0h1m9 0h1m8 0h1m8 0h1m9 0h1m8 0h1m8 0h1m9 0h1m8 0h1m8 0h1m9 0h1m8 0h1m8 0h1m8 0h1m9 0h1m8 0h1m8 0h1m9 0h1m8 0h1m8 0h1m9 0h1m8 0h1m8 0h1m9 0h1m8 0h1m8 0h1m9 0h1m8 0h1m8 0h1m9 0h1m8 0h1m8 0h1m9 0h1m8 0h1m8 0h1m8 0h1m9 0h1m8 0h1m8 0h1m9 0h1m8 0h1m8 0h1m9 0h1m8 0h1m8 0h1m9 0h1m8 0h1m8 0h1m9 0h1m8 0h1M4 442.5m0 0h1m8 0h1m8 0h1m9 0h1m8 0h1m8 0h1m9 0h1m8 0h1m8 0h1m9 0h1m8 0h1m8 0h1m9 0h1m8 0h1m8 0h1m8 0h1m9 0h1m8 0h1m8 0h1m9 0h1m8 0h1m8 0h1m9 0h1m8 0h1m8 0h1m9 0h1m8 0h1m8 0h1m9 0h1m8 0h1m8 0h1m9 0h1m8 0h1m8 0h1m9 0h1m8 0h1m8 0h1m8 0h1m9 0h1m8 0h1m8 0h1m9 0h1m8 0h1m8 0h1m9 0h1m8 0h1m8 0h1m9 0h1m8 0h1m8 0h1m9 0h1m8 0h1m8 0h1m9 0h1m8 0h1m8 0h1m9 0h1m8 0h1m8 0h1m8 0h1m9 0h1m8 0h1m8 0h1m9 0h1m8 0h1m8 0h1m9 0h1m8 0h1m8 0h1m9 0h1m8 0h1m8 0h1m9 0h1m8 0h1M4 451.5m0 0h1m8 0h1m8 0h1m9 0h1m8 0h1m8 0h1m9 0h1m8 0h1m8 0h1m9 0h1m8 0h1m8 0h1m9 0h1m8 0h1m8 0h1m8 0h1m9 0h1m8 0h1m8 0h1m9 0h1m8 0h1m8 0h1m9 0h1m8 0h1m8 0h1m9 0h1m8 0h1m8 0h1m9 0h1m8 0h1m8 0h1m9 0h1m8 0h1m8 0h1m9 0h1m8 0h1m8 0h1m8 0h1m9 0h1m8 0h1m8 0h1m9 0h1m8 0h1m8 0h1m9 0h1m8 0h1m8 0h1m9 0h1m8 0h1m8 0h1m9 0h1m8 0h1m8 0h1m9 0h1m8 0h1m8 0h1m9 0h1m8 0h1m8 0h1m8 0h1m9 0h1m8 0h1m8 0h1m9 0h1m8 0h1m8 0h1m9 0h1m8 0h1m8 0h1m9 0h1m8 0h1m8 0h1m9 0h1m8 0h1M4 460.5m0 0h1m8 0h1m8 0h1m9 0h1m8 0h1m8 0h1m9 0h1m8 0h1m8 0h1m9 0h1m8 0h1m8 0h1m9 0h1m8 0h1m8 0h1m8 0h1m9 0h1m8 0h1m8 0h1m9 0h1m8 0h1m8 0h1m9 0h1m8 0h1m8 0h1m9 0h1m8 0h1m8 0h1m9 0h1m8 0h1m8 0h1m9 0h1m8 0h1m8 0h1m9 0h1m8 0h1m8 0h1m8 0h1m9 0h1m8 0h1m8 0h1m9 0h1m8 0h1m8 0h1m9 0h1m8 0h1m8 0h1m9 0h1m8 0h1m8 0h1m9 0h1m8 0h1m8 0h1m9 0h1m8 0h1m8 0h1m9 0h1m8 0h1m8 0h1m8 0h1m9 0h1m8 0h1m8 0h1m9 0h1m8 0h1m8 0h1m9 0h1m8 0h1m8 0h1m9 0h1m8 0h1m8 0h1m9 0h1m8 0h1M4 470.5m0 0h1m8 0h1m8 0h1m9 0h1m8 0h1m8 0h1m9 0h1m8 0h1m8 0h1m9 0h1m8 0h1m8 0h1m9 0h1m8 0h1m8 0h1m8 0h1m9 0h1m8 0h1m8 0h1m9 0h1m8 0h1m8 0h1m9 0h1m8 0h1m8 0h1m9 0h1m8 0h1m8 0h1m9 0h1m8 0h1m8 0h1m9 0h1m8 0h1m8 0h1m9 0h1m8 0h1m8 0h1m8 0h1m9 0h1m8 0h1m8 0h1m9 0h1m8 0h1m8 0h1m9 0h1m8 0h1m8 0h1m9 0h1m8 0h1m8 0h1m9 0h1m8 0h1m8 0h1m9 0h1m8 0h1m8 0h1m9 0h1m8 0h1m8 0h1m8 0h1m9 0h1m8 0h1m8 0h1m9 0h1m8 0h1m8 0h1m9 0h1m8 0h1m8 0h1m9 0h1m8 0h1m8 0h1m9 0h1m8 0h1M4 479.5m0 0h1m8 0h1m8 0h1m9 0h1m8 0h1m8 0h1m9 0h1m8 0h1m8 0h1m9 0h1m8 0h1m8 0h1m9 0h1m8 0h1m8 0h1m8 0h1m9 0h1m8 0h1m8 0h1m9 0h1m8 0h1m8 0h1m9 0h1m8 0h1m8 0h1m9 0h1m8 0h1m8 0h1m9 0h1m8 0h1m8 0h1m9 0h1m8 0h1m8 0h1m9 0h1m8 0h1m8 0h1m8 0h1m9 0h1m8 0h1m8 0h1m9 0h1m8 0h1m8 0h1m9 0h1m8 0h1m8 0h1m9 0h1m8 0h1m8 0h1m9 0h1m8 0h1m8 0h1m9 0h1m8 0h1m8 0h1m9 0h1m8 0h1m8 0h1m8 0h1m9 0h1m8 0h1m8 0h1m9 0h1m8 0h1m8 0h1m9 0h1m8 0h1m8 0h1m9 0h1m8 0h1m8 0h1m9 0h1m8 0h1M4 488.5m0 0h1m8 0h1m8 0h1m9 0h1m8 0h1m8 0h1m9 0h1m8 0h1m8 0h1m9 0h1m8 0h1m8 0h1m9 0h1m8 0h1m8 0h1m8 0h1m9 0h1m8 0h1m8 0h1m9 0h1m8 0h1m8 0h1m9 0h1m8 0h1m8 0h1m9 0h1m8 0h1m8 0h1m9 0h1m8 0h1m8 0h1m9 0h1m8 0h1m8 0h1m9 0h1m8 0h1m8 0h1m8 0h1m9 0h1m8 0h1m8 0h1m9 0h1m8 0h1m8 0h1m9 0h1m8 0h1m8 0h1m9 0h1m8 0h1m8 0h1m9 0h1m8 0h1m8 0h1m9 0h1m8 0h1m8 0h1m9 0h1m8 0h1m8 0h1m8 0h1m9 0h1m8 0h1m8 0h1m9 0h1m8 0h1m8 0h1m9 0h1m8 0h1m8 0h1m9 0h1m8 0h1m8 0h1m9 0h1m8 0h1M4 498.5m0 0h1m8 0h1m8 0h1m9 0h1m8 0h1m8 0h1m9 0h1m8 0h1m8 0h1m9 0h1m8 0h1m8 0h1m9 0h1m8 0h1m8 0h1m8 0h1m9 0h1m8 0h1m8 0h1m9 0h1m8 0h1m8 0h1m9 0h1m8 0h1m8 0h1m9 0h1m8 0h1m8 0h1m9 0h1m8 0h1m8 0h1m9 0h1m8 0h1m8 0h1m9 0h1m8 0h1m8 0h1m8 0h1m9 0h1m8 0h1m8 0h1m9 0h1m8 0h1m8 0h1m9 0h1m8 0h1m8 0h1m9 0h1m8 0h1m8 0h1m9 0h1m8 0h1m8 0h1m9 0h1m8 0h1m8 0h1m9 0h1m8 0h1m8 0h1m8 0h1m9 0h1m8 0h1m8 0h1m9 0h1m8 0h1m8 0h1m9 0h1m8 0h1m8 0h1m9 0h1m8 0h1m8 0h1m9 0h1m8 0h1M4 507.5m0 0h1m8 0h1m8 0h1m9 0h1m8 0h1m8 0h1m9 0h1m8 0h1m8 0h1m9 0h1m8 0h1m8 0h1m9 0h1m8 0h1m8 0h1m8 0h1m9 0h1m8 0h1m8 0h1m9 0h1m8 0h1m8 0h1m9 0h1m8 0h1m8 0h1m9 0h1m8 0h1m8 0h1m9 0h1m8 0h1m8 0h1m9 0h1m8 0h1m8 0h1m9 0h1m8 0h1m8 0h1m8 0h1m9 0h1m8 0h1m8 0h1m9 0h1m8 0h1m8 0h1m9 0h1m8 0h1m8 0h1m9 0h1m8 0h1m8 0h1m9 0h1m8 0h1m8 0h1m9 0h1m8 0h1m8 0h1m9 0h1m8 0h1m8 0h1m8 0h1m9 0h1m8 0h1m8 0h1m9 0h1m8 0h1m8 0h1m9 0h1m8 0h1m8 0h1m9 0h1m8 0h1m8 0h1m9 0h1m8 0h1M4 516.5m0 0h1m8 0h1m8 0h1m9 0h1m8 0h1m8 0h1m9 0h1m8 0h1m8 0h1m9 0h1m8 0h1m8 0h1m9 0h1m8 0h1m8 0h1m8 0h1m9 0h1m8 0h1m8 0h1m9 0h1m8 0h1m8 0h1m9 0h1m8 0h1m8 0h1m9 0h1m8 0h1m8 0h1m9 0h1m8 0h1m8 0h1m9 0h1m8 0h1m8 0h1m9 0h1m8 0h1m8 0h1m8 0h1m9 0h1m8 0h1m8 0h1m9 0h1m8 0h1m8 0h1m9 0h1m8 0h1m8 0h1m9 0h1m8 0h1m8 0h1m9 0h1m8 0h1m8 0h1m9 0h1m8 0h1m8 0h1m9 0h1m8 0h1m8 0h1m8 0h1m9 0h1m8 0h1m8 0h1m9 0h1m8 0h1m8 0h1m9 0h1m8 0h1m8 0h1m9 0h1m8 0h1m8 0h1m9 0h1m8 0h1M4 525.5m0 0h1m8 0h1m8 0h1m9 0h1m8 0h1m8 0h1m9 0h1m8 0h1m8 0h1m9 0h1m8 0h1m8 0h1m9 0h1m8 0h1m8 0h1m8 0h1m9 0h1m8 0h1m8 0h1m9 0h1m8 0h1m8 0h1m9 0h1m8 0h1m8 0h1m9 0h1m8 0h1m8 0h1m9 0h1m8 0h1m8 0h1m9 0h1m8 0h1m8 0h1m9 0h1m8 0h1m8 0h1m8 0h1m9 0h1m8 0h1m8 0h1m9 0h1m8 0h1m8 0h1m9 0h1m8 0h1m8 0h1m9 0h1m8 0h1m8 0h1m9 0h1m8 0h1m8 0h1m9 0h1m8 0h1m8 0h1m9 0h1m8 0h1m8 0h1m8 0h1m9 0h1m8 0h1m8 0h1m9 0h1m8 0h1m8 0h1m9 0h1m8 0h1m8 0h1m9 0h1m8 0h1m8 0h1m9 0h1m8 0h1M4 535.5m0 0h1m8 0h1m8 0h1m9 0h1m8 0h1m8 0h1m9 0h1m8 0h1m8 0h1m9 0h1m8 0h1m8 0h1m9 0h1m8 0h1m8 0h1m8 0h1m9 0h1m8 0h1m8 0h1m9 0h1m8 0h1m8 0h1m9 0h1m8 0h1m8 0h1m9 0h1m8 0h1m8 0h1m9 0h1m8 0h1m8 0h1m9 0h1m8 0h1m8 0h1m9 0h1m8 0h1m8 0h1m8 0h1m9 0h1m8 0h1m8 0h1m9 0h1m8 0h1m8 0h1m9 0h1m8 0h1m8 0h1m9 0h1m8 0h1m8 0h1m9 0h1m8 0h1m8 0h1m9 0h1m8 0h1m8 0h1m9 0h1m8 0h1m8 0h1m8 0h1m9 0h1m8 0h1m8 0h1m9 0h1m8 0h1m8 0h1m9 0h1m8 0h1m8 0h1m9 0h1m8 0h1m8 0h1m9 0h1m8 0h1M4 544.5m0 0h1m8 0h1m8 0h1m9 0h1m8 0h1m8 0h1m9 0h1m8 0h1m8 0h1m9 0h1m8 0h1m8 0h1m9 0h1m8 0h1m8 0h1m8 0h1m9 0h1m8 0h1m8 0h1m9 0h1m8 0h1m8 0h1m9 0h1m8 0h1m8 0h1m9 0h1m8 0h1m8 0h1m9 0h1m8 0h1m8 0h1m9 0h1m8 0h1m8 0h1m9 0h1m8 0h1m8 0h1m8 0h1m9 0h1m8 0h1m8 0h1m9 0h1m8 0h1m8 0h1m9 0h1m8 0h1m8 0h1m9 0h1m8 0h1m8 0h1m9 0h1m8 0h1m8 0h1m9 0h1m8 0h1m8 0h1m9 0h1m8 0h1m8 0h1m8 0h1m9 0h1m8 0h1m8 0h1m9 0h1m8 0h1m8 0h1m9 0h1m8 0h1m8 0h1m9 0h1m8 0h1m8 0h1m9 0h1m8 0h1" stroke="#f6f6f6" stroke-width="1" fill="none"/>
<rect x="25.6" y="81.6" width="647" height="460.8" fill="none" stroke="#00ffff" stroke-width="6.8"/>
<rect x="22.5" y="79.5" width="653" height="465" fill="none" stroke="#00b000" stroke-width="1"/>
<circle cx="85.6" cy="374.2" r="7.8" fill="#00ffff" stroke="none" stroke-width="0" shape-rendering="geometricPrecision"/>
<circle cx="102.7" cy="374.2" r="7.8" fill="#00ffff" stroke="none" stroke-width="0" shape-rendering="geometricPrecision"/>
<circle cx="85.6" cy="419.4" r="8.3" fill="#00ffff" stroke="none" stroke-width="0" shape-rendering="geometricPrecision"/>
<circle cx="104.3" cy="419.4" r="8.3" fill="#00ffff" stroke="none" stroke-width="0" shape-rendering="geometricPrecision"/>
<circle cx="74.5" cy="458.4" r="8.3" fill="#00ffff" stroke="none" stroke-width="0" shape-rendering="geometricPrecision"/>
<circle cx="92.4" cy="458.4" r="8.3" fill="#00ffff" stroke="none" stroke-width="0" shape-rendering="geometricPrecision"/>
<circle cx="55.4" cy="486.2" r="8.3" fill="#00ffff" stroke="none" stroke-width="0" shape-rendering="geometricPrecision"/>
<circle cx="92.4" cy="486.2" r="8.3" fill="#00ffff" stroke="none" stroke-width="0" shape-rendering="geometricPrecision"/>
<circle cx="176.5" cy="458.4" r="7.8" fill="#00ffff" stroke="none" stroke-width="0" shape-rendering="geometricPrecision"/>
<circle cx="176.5" cy="477.5" r="7.8" fill="#00ffff" stroke="none" stroke-width="0" shape-rendering="geometricPrecision"/>
<text x="0" y="0" font-size="13" fill="#0000a8" stroke="#909090" stroke-width="0.15" textLength="78.5" lengthAdjust="spacingAndGlyphs" transform="translate(173 98) scale(-1 1)" shape-rendering="geometricPrecision">AP1 Rev: D</text>
<text x="0" y="0" font-size="13" fill="#0000a8" stroke="#909090" stroke-width="0.15" textLength="145" lengthAdjust="spacingAndGlyphs" transform="translate(173 116.8) scale(-1 1)" shape-rendering="geometricPrecision">Copyright 2003</text>
<text x="0" y="0" font-size="13" fill="#0000a8" stroke="#909090" stroke-width="0.15" textLength="133.4" lengthAdjust="spacingAndGlyphs" transform="translate(173 134.6) scale(-1 1)" shape-rendering="geometricPrecision">AMTL Corporation</text>
<polyline points="539.5,183.5 631.5,183.5 635.5,187.5 635.5,516.5 631.5,520.5 568.5,520.5 541.5,493.5 486.5,493.5" fill="none" stroke="#0000a8" stroke-width="3" stroke-linecap="butt" stroke-linejoin="round" />
<polyline points="539.5,221.5 539.5,211.5 561.5,188.5 615.5,188.5 621.5,194.5 621.5,512.5 628.5,512.5" fill="none" stroke="#0000a8" stroke-width="3" stroke-linecap="butt" stroke-linejoin="round" />
<polyline points="628.3,195.5 636,195.5" fill="none" stroke="#0000a8" stroke-width="2" stroke-linecap="butt" stroke-linejoin="miter" />
<polyline points="621,204.5 628.3,204.5" fill="none" stroke="#0000a8" stroke-width="2" stroke-linecap="butt" stroke-linejoin="miter" />
<polyline points="628.3,213.5 636,213.5" fill="none" stroke="#0000a8" stroke-width="2" stroke-linecap="butt" stroke-linejoin="miter" />
<polyline points="621,223.5 628.3,223.5" fill="none" stroke="#0000a8" stroke-width="2" stroke-linecap="butt" stroke-linejoin="miter" />
<polyline points="628.3,232.5 636,232.5" fill="none" stroke="#0000a8" stroke-width="2" stroke-linecap="butt" stroke-linejoin="miter" />
<polyline points="621,241.5 628.3,241.5" fill="none" stroke="#0000a8" stroke-width="2" stroke-linecap="butt" stroke-linejoin="miter" />
<polyline points="628.3,251.5 636,251.5" fill="none" stroke="#0000a8" stroke-width="2" stroke-linecap="butt" stroke-linejoin="miter" />
<polyline points="621,260.5 628.3,260.5" fill="none" stroke="#0000a8" stroke-width="2" stroke-linecap="butt" stroke-linejoin="miter" />
<polyline points="628.3,279.5 636,279.5" fill="none" stroke="#0000a8" stroke-width="2" stroke-linecap="butt" stroke-linejoin="miter" />
<polyline points="621,288.5 628.3,288.5" fill="none" stroke="#0000a8" stroke-width="2" stroke-linecap="butt" stroke-linejoin="miter" />
<polyline points="628.3,297.5 636,297.5" fill="none" stroke="#0000a8" stroke-width="2" stroke-linecap="butt" stroke-linejoin="miter" />
<polyline points="621,307.5 628.3,307.5" fill="none" stroke="#0000a8" stroke-width="2" stroke-linecap="butt" stroke-linejoin="miter" />
<polyline points="628.3,316.5 636,316.5" fill="none" stroke="#0000a8" stroke-width="2" stroke-linecap="butt" stroke-linejoin="miter" />
<polyline points="621,325.5 628.3,325.5" fill="none" stroke="#0000a8" stroke-width="2" stroke-linecap="butt" stroke-linejoin="miter" />
<polyline points="628.3,335.5 636,335.5" fill="none" stroke="#0000a8" stroke-width="2" stroke-linecap="butt" stroke-linejoin="miter" />
<polyline points="621,344.5 628.3,344.5" fill="none" stroke="#0000a8" stroke-width="2" stroke-linecap="butt" stroke-linejoin="miter" />
<polyline points="628.3,363.5 636,363.5" fill="none" stroke="#0000a8" stroke-width="2" stroke-linecap="butt" stroke-linejoin="miter" />
<polyline points="621,372.5 628.3,372.5" fill="none" stroke="#0000a8" stroke-width="2" stroke-linecap="butt" stroke-linejoin="miter" />
<polyline points="628.3,381.5 636,381.5" fill="none" stroke="#0000a8" stroke-width="2" stroke-linecap="butt" stroke-linejoin="miter" />
<polyline points="621,391.5 628.3,391.5" fill="none" stroke="#0000a8" stroke-width="2" stroke-linecap="butt" stroke-linejoin="miter" />
<polyline points="628.3,400.5 636,400.5" fill="none" stroke="#0000a8" stroke-width="2" stroke-linecap="butt" stroke-linejoin="miter" />
<polyline points="621,409.5 628.3,409.5" fill="none" stroke="#0000a8" stroke-width="2" stroke-linecap="butt" stroke-linejoin="miter" />
<polyline points="628.3,419.5 636,419.5" fill="none" stroke="#0000a8" stroke-width="2" stroke-linecap="butt" stroke-linejoin="miter" />
<polyline points="621,428.5 628.3,428.5" fill="none" stroke="#0000a8" stroke-width="2" stroke-linecap="butt" stroke-linejoin="miter" />
<polyline points="628.3,447.5 636,447.5" fill="none" stroke="#0000a8" stroke-width="2" stroke-linecap="butt" stroke-linejoin="miter" />
<polyline points="621,456.5 628.3,456.5" fill="none" stroke="#0000a8" stroke-width="2" stroke-linecap="butt" stroke-linejoin="miter" />
<polyline points="628.3,465.5 636,465.5" fill="none" stroke="#0000a8" stroke-width="2" stroke-linecap="butt" stroke-linejoin="miter" />
<polyline points="621,475.5 628.3,475.5" fill="none" stroke="#0000a8" stroke-width="2" stroke-linecap="butt" stroke-linejoin="miter" />
<polyline points="628.3,484.5 636,484.5" fill="none" stroke="#0000a8" stroke-width="2" stroke-linecap="butt" stroke-linejoin="miter" />
<polyline points="621,493.5 628.3,493.5" fill="none" stroke="#0000a8" stroke-width="2" stroke-linecap="butt" stroke-linejoin="miter" />
<polyline points="628.3,503.5 636,503.5" fill="none" stroke="#0000a8" stroke-width="2" stroke-linecap="butt" stroke-linejoin="miter" />
<polyline points="621,512.5 628.3,512.5" fill="none" stroke="#0000a8" stroke-width="2" stroke-linecap="butt" stroke-linejoin="miter" />
<polyline points="85.5,342.5 97.5,330.5 149.5,330.5 160.5,316.5 182.5,316.5" fill="none" stroke="#0000a8" stroke-width="3" stroke-linecap="butt" stroke-linejoin="round" />
<polyline points="205.5,330.5 216.5,341.5 216.5,387.5 241.5,412.5 255.5,412.5" fill="none" stroke="#0000a8" stroke-width="3" stroke-linecap="butt" stroke-linejoin="round" />
<polyline points="199.5,345.5 202.5,348.5 202.5,387.5 177.5,412.5" fill="none" stroke="#0000a8" stroke-width="3" stroke-linecap="butt" stroke-linejoin="round" />
<polyline points="474.5,221 474.5,234" fill="none" stroke="#0000a8" stroke-width="3" stroke-linecap="butt" stroke-linejoin="miter" />
<polyline points="130.5,225.5 279.5,225.5 290.5,238.5 290.5,337.5" fill="none" stroke="#0000a8" stroke-width="1" stroke-linecap="butt" stroke-linejoin="miter" />
<polyline points="204.5,193.5 204.5,198.5 225.5,221.5 280.5,221.5 295.5,238.5 295.5,365.5" fill="none" stroke="#0000a8" stroke-width="1" stroke-linecap="butt" stroke-linejoin="miter" />
<polyline points="321.5,193.5 321.5,220.5" fill="none" stroke="#0000a8" stroke-width="1" stroke-linecap="butt" stroke-linejoin="miter" />
<polyline points="130.5,240.5 130.5,240.5" fill="none" stroke="#0000a8" stroke-width="1" stroke-linecap="butt" stroke-linejoin="miter" />
<polyline points="502.5,130.5 495.5,123.5 421.5,123.5 402.5,141.5 402.5,147.5 300.5,249.5 300.5,306.5 312.5,313.5 334.5,313.5 342.5,317.5 342.5,337.5" fill="none" stroke="#0000a8" stroke-width="1" stroke-linecap="butt" stroke-linejoin="miter" />
<polyline points="412.5,141.5 304.5,248.5 304.5,299.5 313.5,305.5 337.5,305.5 346.5,313.5 346.5,336.5" fill="none" stroke="#0000a8" stroke-width="1" stroke-linecap="butt" stroke-linejoin="miter" />
<polyline points="428.5,130.5 309.5,249.5 309.5,291.5 318.5,295.5 329.5,295.5 332.5,291.5" fill="none" stroke="#0000a8" stroke-width="1" stroke-linecap="butt" stroke-linejoin="miter" />
<polyline points="577.5,116.5 540.5,153.5 407.5,153.5 314.5,246.5 314.5,284.5 323.5,291.5" fill="none" stroke="#0000a8" stroke-width="1" stroke-linecap="butt" stroke-linejoin="miter" />
<polyline points="577.5,130.5 551.5,155.5 410.5,155.5 323.5,243.5 323.5,291.5" fill="none" stroke="#0000a8" stroke-width="1" stroke-linecap="butt" stroke-linejoin="miter" />
<polyline points="577.5,158.5 413.5,158.5 332.5,239.5 332.5,281.5" fill="none" stroke="#0000a8" stroke-width="1" stroke-linecap="butt" stroke-linejoin="miter" />
<polyline points="651.5,116.5 599.5,169.5 411.5,169.5 342.5,238.5 342.5,281.5" fill="none" stroke="#0000a8" stroke-width="1" stroke-linecap="butt" stroke-linejoin="miter" />
<polyline points="651.5,130.5 610.5,171.5 415.5,171.5 346.5,240.5 346.5,285.5 351.5,291.5" fill="none" stroke="#0000a8" stroke-width="1" stroke-linecap="butt" stroke-linejoin="miter" />
<polyline points="651.5,158.5 636.5,174.5 418.5,174.5 351.5,241.5 351.5,281.5" fill="none" stroke="#0000a8" stroke-width="1" stroke-linecap="butt" stroke-linejoin="miter" />
<polyline points="486.5,181.5 481.5,176.5 421.5,176.5 355.5,242.5 355.5,294.5 351.5,298.5 351.5,323.5" fill="none" stroke="#0000a8" stroke-width="1" stroke-linecap="butt" stroke-linejoin="miter" />
<polyline points="428.5,214.5 402.5,214.5 365.5,250.5 365.5,287.5 369.5,291.5" fill="none" stroke="#0000a8" stroke-width="1" stroke-linecap="butt" stroke-linejoin="miter" />
<polyline points="366.5,291.5 366.5,315.5 358.5,323.5" fill="none" stroke="#0000a8" stroke-width="1" stroke-linecap="butt" stroke-linejoin="miter" />
<polyline points="454.5,263.5 489.5,263.5" fill="none" stroke="#0000a8" stroke-width="1" stroke-linecap="butt" stroke-linejoin="miter" />
<polyline points="489.5,266.5 499.5,256.5 507.5,256.5" fill="none" stroke="#0000a8" stroke-width="1" stroke-linecap="butt" stroke-linejoin="miter" />
<polyline points="502.5,263.5 555.5,263.5 555.5,284.5" fill="none" stroke="#0000a8" stroke-width="1" stroke-linecap="butt" stroke-linejoin="miter" />
<polyline points="501.5,263.5 501.5,288.5" fill="none" stroke="#0000a8" stroke-width="1" stroke-linecap="butt" stroke-linejoin="miter" />
<polyline points="494.5,291.5 501.5,298.5 519.5,298.5" fill="none" stroke="#0000a8" stroke-width="1" stroke-linecap="butt" stroke-linejoin="miter" />
<polyline points="543.5,292.5 565.5,314.5 565.5,333.5 570.5,339.5 577.5,339.5" fill="none" stroke="#0000a8" stroke-width="1" stroke-linecap="butt" stroke-linejoin="miter" />
<polyline points="437.5,266.5 437.5,412.5" fill="none" stroke="#0000a8" stroke-width="1" stroke-linecap="butt" stroke-linejoin="miter" />
<polyline points="442.5,279.5 442.5,444.5" fill="none" stroke="#0000a8" stroke-width="1" stroke-linecap="butt" stroke-linejoin="miter" />
<polyline points="402.5,272.5 402.5,321.5 398.5,327.5" fill="none" stroke="#0000a8" stroke-width="1" stroke-linecap="butt" stroke-linejoin="miter" />
<polyline points="416.5,349.5 416.5,437.5" fill="none" stroke="#0000a8" stroke-width="1" stroke-linecap="butt" stroke-linejoin="miter" />
<polyline points="460.5,314.5 512.5,314.5" fill="none" stroke="#0000a8" stroke-width="1" stroke-linecap="butt" stroke-linejoin="miter" />
<polyline points="460.5,323.5 516.5,323.5" fill="none" stroke="#0000a8" stroke-width="1" stroke-linecap="butt" stroke-linejoin="miter" />
<polyline points="510.5,297.5 519.5,297.5" fill="none" stroke="#0000a8" stroke-width="1" stroke-linecap="butt" stroke-linejoin="miter" />
<polyline points="454.5,428.5 489.5,428.5" fill="none" stroke="#0000a8" stroke-width="1" stroke-linecap="butt" stroke-linejoin="miter" />
<polyline points="489.5,431.5 499.5,421.5 507.5,421.5" fill="none" stroke="#0000a8" stroke-width="1" stroke-linecap="butt" stroke-linejoin="miter" />
<polyline points="502.5,428.5 555.5,428.5" fill="none" stroke="#0000a8" stroke-width="1" stroke-linecap="butt" stroke-linejoin="miter" />
<polyline points="556.5,423.5 556.5,449.5" fill="none" stroke="#0000a8" stroke-width="1" stroke-linecap="butt" stroke-linejoin="miter" />
<polyline points="501.5,428.5 501.5,490.5" fill="none" stroke="#0000a8" stroke-width="1" stroke-linecap="butt" stroke-linejoin="miter" />
<polyline points="494.5,456.5 494.5,465.5" fill="none" stroke="#0000a8" stroke-width="1" stroke-linecap="butt" stroke-linejoin="miter" />
<polyline points="543.5,456.5 543.5,479.5 570.5,505.5 577.5,507.5" fill="none" stroke="#0000a8" stroke-width="1" stroke-linecap="butt" stroke-linejoin="miter" />
<polyline points="85.5,374.5 85.5,434.5 92.5,439.5 92.5,458.5" fill="none" stroke="#0000a8" stroke-width="1" stroke-linecap="butt" stroke-linejoin="miter" />
<polyline points="102.5,374.5 102.5,386.5 104.5,388.5 104.5,474.5 93.5,485.5" fill="none" stroke="#0000a8" stroke-width="1" stroke-linecap="butt" stroke-linejoin="miter" />
<polyline points="74.5,459.5 55.5,484.5" fill="none" stroke="#0000a8" stroke-width="1" stroke-linecap="butt" stroke-linejoin="miter" />
<polyline points="262.5,354.5 262.5,388.5" fill="none" stroke="#0000a8" stroke-width="1" stroke-linecap="butt" stroke-linejoin="miter" />
<polyline points="273.5,365.5 296.5,388.5" fill="none" stroke="#0000a8" stroke-width="1" stroke-linecap="butt" stroke-linejoin="miter" />
<polyline points="314.5,356.5 314.5,384.5" fill="none" stroke="#0000a8" stroke-width="1" stroke-linecap="butt" stroke-linejoin="miter" />
<polyline points="372.5,356.5 372.5,393.5" fill="none" stroke="#0000a8" stroke-width="1" stroke-linecap="butt" stroke-linejoin="miter" />
<polyline points="386.5,356.5 386.5,386.5" fill="none" stroke="#0000a8" stroke-width="1" stroke-linecap="butt" stroke-linejoin="miter" />
<polyline points="289.5,517.5 316.5,517.5 339.5,494.5" fill="none" stroke="#0000a8" stroke-width="1" stroke-linecap="butt" stroke-linejoin="miter" />
<polyline points="289.5,400.5 289.5,520.5" fill="none" stroke="#0000a8" stroke-width="1" stroke-linecap="butt" stroke-linejoin="miter" />
<polyline points="81.5,267.5 177.5,267.5 185.5,275.5 185.5,316.5" fill="none" stroke="#a80000" stroke-width="3" stroke-linecap="butt" stroke-linejoin="round" />
<polyline points="185.5,277.5 212.5,277.5 257.5,232.5 300.5,232.5 321.5,211.5 398.5,211.5 415.5,228.5 515.5,228.5 523.5,220.5 523.5,192.5 532.5,183.5 539.5,183.5" fill="none" stroke="#a80000" stroke-width="3" stroke-linecap="butt" stroke-linejoin="round" />
<polyline points="230.5,292.5 230.5,270.5 261.5,239.5 304.5,239.5 325.5,218.5 394.5,218.5 411.5,235.5 520.5,235.5 534.5,221.5 539.5,221.5" fill="none" stroke="#a80000" stroke-width="3" stroke-linecap="butt" stroke-linejoin="round" />
<polyline points="456.5,221.5 456.5,235.5" fill="none" stroke="#a80000" stroke-width="3" stroke-linecap="butt" stroke-linejoin="round" />
<polyline points="81.5,281.5 159.5,281.5 167.5,289.5 167.5,312.5 185.5,330.5 204.5,330.5 211.5,323.5 211.5,297.5 215.5,293.5 245.5,293.5 245.5,311.5 245.5,284.5 250.5,279.5" fill="none" stroke="#a80000" stroke-width="3" stroke-linecap="butt" stroke-linejoin="round" />
<polyline points="81.5,295.5 149.5,295.5 158.5,304.5 158.5,316.5 185.5,344.5 208.5,344.5 214.5,350.5 249.5,350.5 252.5,355.5" fill="none" stroke="#a80000" stroke-width="3" stroke-linecap="butt" stroke-linejoin="round" />
<polyline points="230.5,350.5 230.5,358.5" fill="none" stroke="#a80000" stroke-width="3" stroke-linecap="butt" stroke-linejoin="round" />
<polyline points="470.5,188.5 482.5,188.5 494.5,200.5 502.5,200.5" fill="none" stroke="#a80000" stroke-width="3" stroke-linecap="butt" stroke-linejoin="round" />
<polyline points="556.5,267.5 616.5,267.5 627.5,279.5" fill="none" stroke="#a80000" stroke-width="3" stroke-linecap="butt" stroke-linejoin="round" />
<polyline points="118.5,342.5 131.5,342.5 137.5,347.5 137.5,353.5" fill="none" stroke="#a80000" stroke-width="3" stroke-linecap="butt" stroke-linejoin="round" />
<polyline points="120.5,486.5 136.5,486.5 150.5,472.5 154.5,472.5" fill="none" stroke="#a80000" stroke-width="3" stroke-linecap="butt" stroke-linejoin="round" />
<polyline points="333.5,470.5 366.5,470.5" fill="none" stroke="#a80000" stroke-width="3" stroke-linecap="butt" stroke-linejoin="round" />
<polyline points="453.5,507.5 484.5,507.5" fill="none" stroke="#a80000" stroke-width="3" stroke-linecap="butt" stroke-linejoin="round" />
<polyline points="546.5,507.5 577.5,507.5" fill="none" stroke="#a80000" stroke-width="3" stroke-linecap="butt" stroke-linejoin="round" />
<polyline points="252.5,309.5 262.5,310.5 273.5,311.5" fill="none" stroke="#a80000" stroke-width="3" stroke-linecap="butt" stroke-linejoin="round" />
<polyline points="86.5,198.5 86.5,203.5 81.5,211.5" fill="none" stroke="#a80000" stroke-width="1" stroke-linecap="butt" stroke-linejoin="miter" />
<polyline points="135.5,198.5 135.5,203.5 130.5,211.5" fill="none" stroke="#a80000" stroke-width="1" stroke-linecap="butt" stroke-linejoin="miter" />
<polyline points="476.5,165.5 482.5,165.5 486.5,170.5 486.5,181.5" fill="none" stroke="#a80000" stroke-width="1" stroke-linecap="butt" stroke-linejoin="miter" />
<polyline points="465.5,191.5 465.5,197.5" fill="none" stroke="#a80000" stroke-width="1" stroke-linecap="butt" stroke-linejoin="miter" />
<polyline points="461.5,209.5 465.5,214.5 502.5,214.5" fill="none" stroke="#a80000" stroke-width="1" stroke-linecap="butt" stroke-linejoin="miter" />
<polyline points="600.5,195.5 609.5,195.5 616.5,200.5 651.5,200.5" fill="none" stroke="#a80000" stroke-width="1" stroke-linecap="butt" stroke-linejoin="miter" />
<polyline points="577.5,200.5 584.5,200.5 596.5,213.5 600.5,213.5" fill="none" stroke="#a80000" stroke-width="1" stroke-linecap="butt" stroke-linejoin="miter" />
<polyline points="651.5,214.5 646.5,214.5 633.5,228.5 567.5,228.5 549.5,246.5 520.5,246.5" fill="none" stroke="#a80000" stroke-width="1" stroke-linecap="butt" stroke-linejoin="miter" />
<polyline points="577.5,214.5 570.5,214.5 555.5,228.5 534.5,228.5 520.5,241.5" fill="none" stroke="#a80000" stroke-width="1" stroke-linecap="butt" stroke-linejoin="miter" />
<polyline points="600.5,232.5 613.5,232.5 616.5,237.5 633.5,237.5 640.5,242.5 651.5,242.5" fill="none" stroke="#a80000" stroke-width="1" stroke-linecap="butt" stroke-linejoin="miter" />
<polyline points="577.5,242.5 584.5,242.5 596.5,251.5 600.5,251.5" fill="none" stroke="#a80000" stroke-width="1" stroke-linecap="butt" stroke-linejoin="miter" />
<polyline points="600.5,251.5 603.5,256.5 651.5,256.5" fill="none" stroke="#a80000" stroke-width="1" stroke-linecap="butt" stroke-linejoin="miter" />
<polyline points="577.5,256.5 568.5,256.5 561.5,260.5 553.5,260.5" fill="none" stroke="#a80000" stroke-width="1" stroke-linecap="butt" stroke-linejoin="miter" />
<polyline points="600.5,197.5 600.5,202.5" fill="none" stroke="#c000c0" stroke-width="1" stroke-linecap="butt" stroke-linejoin="miter" />
<polyline points="600.5,216.5 600.5,220.5" fill="none" stroke="#c000c0" stroke-width="1" stroke-linecap="butt" stroke-linejoin="miter" />
<polyline points="600.5,235.5 600.5,239.5" fill="none" stroke="#c000c0" stroke-width="1" stroke-linecap="butt" stroke-linejoin="miter" />
<polyline points="600.5,253.5 600.5,258.5" fill="none" stroke="#c000c0" stroke-width="1" stroke-linecap="butt" stroke-linejoin="miter" />
<polyline points="600.5,279.5 609.5,279.5 616.5,284.5 651.5,284.5" fill="none" stroke="#a80000" stroke-width="1" stroke-linecap="butt" stroke-linejoin="miter" />
<polyline points="577.5,284.5 584.5,284.5 596.5,297.5 600.5,297.5" fill="none" stroke="#a80000" stroke-width="1" stroke-linecap="butt" stroke-linejoin="miter" />
<polyline points="651.5,298.5 646.5,298.5 633.5,312.5 567.5,312.5 549.5,330.5 520.5,330.5" fill="none" stroke="#a80000" stroke-width="1" stroke-linecap="butt" stroke-linejoin="miter" />
<polyline points="577.5,298.5 570.5,298.5 555.5,312.5 534.5,312.5 520.5,325.5" fill="none" stroke="#a80000" stroke-width="1" stroke-linecap="butt" stroke-linejoin="miter" />
<polyline points="600.5,316.5 613.5,316.5 616.5,321.5 633.5,321.5 640.5,326.5 651.5,326.5" fill="none" stroke="#a80000" stroke-width="1" stroke-linecap="butt" stroke-linejoin="miter" />
<polyline points="577.5,326.5 584.5,326.5 596.5,335.5 600.5,335.5" fill="none" stroke="#a80000" stroke-width="1" stroke-linecap="butt" stroke-linejoin="miter" />
<polyline points="600.5,335.5 603.5,340.5 651.5,340.5" fill="none" stroke="#a80000" stroke-width="1" stroke-linecap="butt" stroke-linejoin="miter" />
<polyline points="577.5,340.5 568.5,340.5 561.5,344.5 553.5,344.5" fill="none" stroke="#a80000" stroke-width="1" stroke-linecap="butt" stroke-linejoin="miter" />
<polyline points="600.5,281.5 600.5,286.5" fill="none" stroke="#c000c0" stroke-width="1" stroke-linecap="butt" stroke-linejoin="miter" />
<polyline points="600.5,300.5 600.5,304.5" fill="none" stroke="#c000c0" stroke-width="1" stroke-linecap="butt" stroke-linejoin="miter" />
<polyline points="600.5,319.5 600.5,323.5" fill="none" stroke="#c000c0" stroke-width="1" stroke-linecap="butt" stroke-linejoin="miter" />
<polyline points="600.5,337.5 600.5,342.5" fill="none" stroke="#c000c0" stroke-width="1" stroke-linecap="butt" stroke-linejoin="miter" />
<polyline points="600.5,363.5 609.5,363.5 616.5,368.5 651.5,368.5" fill="none" stroke="#a80000" stroke-width="1" stroke-linecap="butt" stroke-linejoin="miter" />
<polyline points="577.5,368.5 584.5,368.5 596.5,381.5 600.5,381.5" fill="none" stroke="#a80000" stroke-width="1" stroke-linecap="butt" stroke-linejoin="miter" />
<polyline points="651.5,382.5 646.5,382.5 637.5,386.5 593.5,386.5 582.5,397.5 575.5,398.5" fill="none" stroke="#a80000" stroke-width="1" stroke-linecap="butt" stroke-linejoin="miter" />
<polyline points="577.5,382.5 577.5,385.5 572.5,391.5 575.5,391.5" fill="none" stroke="#a80000" stroke-width="1" stroke-linecap="butt" stroke-linejoin="miter" />
<polyline points="600.5,400.5 613.5,400.5 616.5,405.5 633.5,405.5 640.5,410.5 651.5,410.5" fill="none" stroke="#a80000" stroke-width="1" stroke-linecap="butt" stroke-linejoin="miter" />
<polyline points="577.5,410.5 584.5,410.5 596.5,419.5 600.5,419.5" fill="none" stroke="#a80000" stroke-width="1" stroke-linecap="butt" stroke-linejoin="miter" />
<polyline points="600.5,419.5 603.5,424.5 651.5,424.5" fill="none" stroke="#a80000" stroke-width="1" stroke-linecap="butt" stroke-linejoin="miter" />
<polyline points="577.5,424.5 568.5,424.5 561.5,428.5 553.5,428.5" fill="none" stroke="#a80000" stroke-width="1" stroke-linecap="butt" stroke-linejoin="miter" />
<polyline points="600.5,365.5 600.5,370.5" fill="none" stroke="#c000c0" stroke-width="1" stroke-linecap="butt" stroke-linejoin="miter" />
<polyline points="600.5,384.5 600.5,388.5" fill="none" stroke="#c000c0" stroke-width="1" stroke-linecap="butt" stroke-linejoin="miter" />
<polyline points="600.5,403.5 600.5,407.5" fill="none" stroke="#c000c0" stroke-width="1" stroke-linecap="butt" stroke-linejoin="miter" />
<polyline points="600.5,421.5 600.5,426.5" fill="none" stroke="#c000c0" stroke-width="1" stroke-linecap="butt" stroke-linejoin="miter" />
<polyline points="600.5,447.5 609.5,447.5 616.5,452.5 651.5,452.5" fill="none" stroke="#a80000" stroke-width="1" stroke-linecap="butt" stroke-linejoin="miter" />
<polyline points="577.5,452.5 584.5,452.5 596.5,465.5 600.5,465.5" fill="none" stroke="#a80000" stroke-width="1" stroke-linecap="butt" stroke-linejoin="miter" />
<polyline points="651.5,466.5 646.5,466.5 633.5,480.5 600.5,480.5 592.5,472.5 588.5,468.5" fill="none" stroke="#a80000" stroke-width="1" stroke-linecap="butt" stroke-linejoin="miter" />
<polyline points="600.5,484.5 613.5,484.5 616.5,489.5 633.5,489.5 640.5,494.5 651.5,494.5" fill="none" stroke="#a80000" stroke-width="1" stroke-linecap="butt" stroke-linejoin="miter" />
<polyline points="577.5,494.5 584.5,494.5 596.5,503.5 600.5,503.5" fill="none" stroke="#a80000" stroke-width="1" stroke-linecap="butt" stroke-linejoin="miter" />
<polyline points="600.5,503.5 603.5,508.5 651.5,508.5" fill="none" stroke="#a80000" stroke-width="1" stroke-linecap="butt" stroke-linejoin="miter" />
<polyline points="600.5,449.5 600.5,454.5" fill="none" stroke="#c000c0" stroke-width="1" stroke-linecap="butt" stroke-linejoin="miter" />
<polyline points="600.5,468.5 600.5,472.5" fill="none" stroke="#c000c0" stroke-width="1" stroke-linecap="butt" stroke-linejoin="miter" />
<polyline points="600.5,487.5 600.5,491.5" fill="none" stroke="#c000c0" stroke-width="1" stroke-linecap="butt" stroke-linejoin="miter" />
<polyline points="600.5,505.5 600.5,510.5" fill="none" stroke="#c000c0" stroke-width="1" stroke-linecap="butt" stroke-linejoin="miter" />
<polyline points="388.5,291.5 402.5,291.5 413.5,302.5 501.5,302.5 507.5,308.5 507.5,335.5 512.5,339.5 522.5,339.5" fill="none" stroke="#a80000" stroke-width="1" stroke-linecap="butt" stroke-linejoin="miter" />
<polyline points="379.5,300.5 383.5,305.5 499.5,305.5 503.5,308.5 503.5,339.5 508.5,343.5 522.5,343.5" fill="none" stroke="#a80000" stroke-width="1" stroke-linecap="butt" stroke-linejoin="miter" />
<polyline points="388.5,309.5 399.5,310.5 405.5,314.5 460.5,314.5" fill="none" stroke="#a80000" stroke-width="1" stroke-linecap="butt" stroke-linejoin="miter" />
<polyline points="388.5,318.5 444.5,318.5 451.5,323.5 460.5,323.5" fill="none" stroke="#a80000" stroke-width="1" stroke-linecap="butt" stroke-linejoin="miter" />
<polyline points="516.5,323.5 516.5,327.5 519.5,330.5 522.5,330.5" fill="none" stroke="#a80000" stroke-width="1" stroke-linecap="butt" stroke-linejoin="miter" />
<polyline points="512.5,314.5 512.5,331.5 516.5,335.5 522.5,335.5" fill="none" stroke="#a80000" stroke-width="1" stroke-linecap="butt" stroke-linejoin="miter" />
<polyline points="424.5,292.5 429.5,297.5 519.5,297.5" fill="none" stroke="#a80000" stroke-width="1" stroke-linecap="butt" stroke-linejoin="miter" />
<polyline points="436.5,291.5 439.5,295.5 498.5,295.5 507.5,290.5" fill="none" stroke="#a80000" stroke-width="1" stroke-linecap="butt" stroke-linejoin="miter" />
<polyline points="529.5,321.5 532.5,321.5 537.5,326.5 537.5,347.5 531.5,354.5 525.5,365.5" fill="none" stroke="#a80000" stroke-width="1" stroke-linecap="butt" stroke-linejoin="miter" />
<polyline points="529.5,326.5 532.5,330.5 532.5,342.5 527.5,350.5 516.5,365.5" fill="none" stroke="#a80000" stroke-width="1" stroke-linecap="butt" stroke-linejoin="miter" />
<polyline points="395.5,358.5 413.5,358.5" fill="none" stroke="#a80000" stroke-width="1" stroke-linecap="butt" stroke-linejoin="miter" />
<polyline points="402.5,272.5 426.5,272.5" fill="none" stroke="#a80000" stroke-width="1" stroke-linecap="butt" stroke-linejoin="miter" />
<polyline points="418.5,263.5 426.5,263.5" fill="none" stroke="#a80000" stroke-width="1" stroke-linecap="butt" stroke-linejoin="miter" />
<polyline points="396.5,344.5 442.5,344.5" fill="none" stroke="#a80000" stroke-width="1" stroke-linecap="butt" stroke-linejoin="miter" />
<polyline points="394.5,349.5 442.5,349.5" fill="none" stroke="#a80000" stroke-width="1" stroke-linecap="butt" stroke-linejoin="miter" />
<polyline points="388.5,353.5 437.5,353.5" fill="none" stroke="#a80000" stroke-width="1" stroke-linecap="butt" stroke-linejoin="miter" />
<polyline points="360.5,262.5 360.5,266.5 369.5,275.5 369.5,281.5" fill="none" stroke="#a80000" stroke-width="1" stroke-linecap="butt" stroke-linejoin="miter" />
<polyline points="379.5,262.5 379.5,266.5 370.5,275.5" fill="none" stroke="#a80000" stroke-width="1" stroke-linecap="butt" stroke-linejoin="miter" />
<polyline points="357.5,236.5 358.5,241.5" fill="none" stroke="#a80000" stroke-width="1" stroke-linecap="butt" stroke-linejoin="miter" />
<polyline points="382.5,236.5 381.5,241.5" fill="none" stroke="#a80000" stroke-width="1" stroke-linecap="butt" stroke-linejoin="miter" />
<polyline points="360.5,346.5 360.5,357.5 366.5,362.5 411.5,362.5 421.5,372.5 421.5,399.5 416.5,407.5 408.5,407.5" fill="none" stroke="#a80000" stroke-width="1" stroke-linecap="butt" stroke-linejoin="miter" />
<polyline points="369.5,346.5 372.5,355.5 380.5,358.5 407.5,358.5 416.5,369.5 416.5,393.5 411.5,397.5 408.5,397.5" fill="none" stroke="#a80000" stroke-width="1" stroke-linecap="butt" stroke-linejoin="miter" />
<polyline points="366.5,358.5 372.5,367.5 406.5,367.5 411.5,373.5 411.5,389.5 408.5,393.5" fill="none" stroke="#a80000" stroke-width="1" stroke-linecap="butt" stroke-linejoin="miter" />
<polyline points="283.5,336.5 287.5,328.5 320.5,328.5" fill="none" stroke="#a80000" stroke-width="1" stroke-linecap="butt" stroke-linejoin="miter" />
<polyline points="290.5,337.5 323.5,337.5" fill="none" stroke="#a80000" stroke-width="1" stroke-linecap="butt" stroke-linejoin="miter" />
<polyline points="163.5,366.5 171.5,366.5 175.5,369.5 276.5,369.5 283.5,362.5 283.5,331.5 287.5,328.5" fill="none" stroke="#a80000" stroke-width="1" stroke-linecap="butt" stroke-linejoin="miter" />
<polyline points="295.5,365.5 300.5,377.5 313.5,388.5" fill="none" stroke="#a80000" stroke-width="1" stroke-linecap="butt" stroke-linejoin="miter" />
<polyline points="332.5,328.5 328.5,333.5 329.5,324.5 358.5,323.5" fill="none" stroke="#a80000" stroke-width="1" stroke-linecap="butt" stroke-linejoin="miter" />
<polyline points="351.5,328.5 342.5,331.5 342.5,346.5" fill="none" stroke="#a80000" stroke-width="1" stroke-linecap="butt" stroke-linejoin="miter" />
<polyline points="418.5,263.5 426.5,263.5" fill="none" stroke="#a80000" stroke-width="1" stroke-linecap="butt" stroke-linejoin="miter" />
<polyline points="402.5,272.5 426.5,272.5" fill="none" stroke="#a80000" stroke-width="1" stroke-linecap="butt" stroke-linejoin="miter" />
<polyline points="433.5,265.5 447.5,265.5" fill="none" stroke="#a80000" stroke-width="1" stroke-linecap="butt" stroke-linejoin="miter" />
<polyline points="433.5,267.5 447.5,267.5" fill="none" stroke="#a80000" stroke-width="1" stroke-linecap="butt" stroke-linejoin="miter" />
<polyline points="433.5,269.5 447.5,269.5" fill="none" stroke="#a80000" stroke-width="1" stroke-linecap="butt" stroke-linejoin="miter" />
<polyline points="433.5,270.5 447.5,270.5" fill="none" stroke="#a80000" stroke-width="1" stroke-linecap="butt" stroke-linejoin="miter" />
<polyline points="468.5,251.5 471.5,251.5 473.5,254.5 473.5,258.5 471.5,260.5 468.5,260.5" fill="none" stroke="#a80000" stroke-width="1" stroke-linecap="butt" stroke-linejoin="miter" />
<polyline points="468.5,277.5 471.5,277.5 473.5,280.5 473.5,284.5 471.5,286.5 468.5,286.5" fill="none" stroke="#a80000" stroke-width="1" stroke-linecap="butt" stroke-linejoin="miter" />
<polyline points="517.5,251.5 520.5,251.5 522.5,254.5 522.5,258.5 520.5,260.5 517.5,260.5" fill="none" stroke="#a80000" stroke-width="1" stroke-linecap="butt" stroke-linejoin="miter" />
<polyline points="517.5,277.5 520.5,277.5 522.5,280.5 522.5,284.5 520.5,286.5 517.5,286.5" fill="none" stroke="#a80000" stroke-width="1" stroke-linecap="butt" stroke-linejoin="miter" />
<polyline points="479.5,249.5 479.5,246.5 483.5,243.5 523.5,243.5 527.5,239.5" fill="none" stroke="#a80000" stroke-width="1" stroke-linecap="butt" stroke-linejoin="miter" />
<polyline points="500.5,252.5 504.5,248.5 553.5,248.5 557.5,243.5" fill="none" stroke="#a80000" stroke-width="1" stroke-linecap="butt" stroke-linejoin="miter" />
<polyline points="556.5,258.5 562.5,258.5 568.5,253.5 575.5,253.5" fill="none" stroke="#a80000" stroke-width="1" stroke-linecap="butt" stroke-linejoin="miter" />
<polyline points="460.5,271.5 506.5,271.5 509.5,268.5" fill="none" stroke="#a80000" stroke-width="1" stroke-linecap="butt" stroke-linejoin="miter" />
<polyline points="423.5,289.5 426.5,293.5 506.5,293.5 513.5,287.5" fill="none" stroke="#a80000" stroke-width="1" stroke-linecap="butt" stroke-linejoin="miter" />
<polyline points="436.5,295.5 499.5,295.5" fill="none" stroke="#a80000" stroke-width="1" stroke-linecap="butt" stroke-linejoin="miter" />
<polyline points="423.5,251.5 424.5,256.5" fill="none" stroke="#a80000" stroke-width="1" stroke-linecap="butt" stroke-linejoin="miter" />
<polyline points="454.5,256.5 458.5,256.5 461.5,251.5" fill="none" stroke="#a80000" stroke-width="1" stroke-linecap="butt" stroke-linejoin="miter" />
<polyline points="454.5,256.5 458.5,258.5 461.5,258.5" fill="none" stroke="#a80000" stroke-width="1" stroke-linecap="butt" stroke-linejoin="miter" />
<polyline points="454.5,260.5 458.5,261.5 461.5,261.5" fill="none" stroke="#a80000" stroke-width="1" stroke-linecap="butt" stroke-linejoin="miter" />
<polyline points="454.5,265.5 458.5,264.5 461.5,264.5" fill="none" stroke="#a80000" stroke-width="1" stroke-linecap="butt" stroke-linejoin="miter" />
<polyline points="454.5,270.5 458.5,267.5 461.5,267.5" fill="none" stroke="#a80000" stroke-width="1" stroke-linecap="butt" stroke-linejoin="miter" />
<polyline points="454.5,274.5 458.5,270.5 461.5,270.5" fill="none" stroke="#a80000" stroke-width="1" stroke-linecap="butt" stroke-linejoin="miter" />
<polyline points="454.5,279.5 458.5,274.5 461.5,274.5" fill="none" stroke="#a80000" stroke-width="1" stroke-linecap="butt" stroke-linejoin="miter" />
<polyline points="489.5,256.5 492.5,254.5" fill="none" stroke="#a80000" stroke-width="1" stroke-linecap="butt" stroke-linejoin="miter" />
<polyline points="489.5,260.5 492.5,261.5" fill="none" stroke="#a80000" stroke-width="1" stroke-linecap="butt" stroke-linejoin="miter" />
<polyline points="537.5,256.5 541.5,254.5" fill="none" stroke="#a80000" stroke-width="1" stroke-linecap="butt" stroke-linejoin="miter" />
<polyline points="537.5,260.5 541.5,261.5" fill="none" stroke="#a80000" stroke-width="1" stroke-linecap="butt" stroke-linejoin="miter" />
<polyline points="489.5,282.5 492.5,280.5" fill="none" stroke="#a80000" stroke-width="1" stroke-linecap="butt" stroke-linejoin="miter" />
<polyline points="489.5,286.5 492.5,288.5" fill="none" stroke="#a80000" stroke-width="1" stroke-linecap="butt" stroke-linejoin="miter" />
<polyline points="537.5,282.5 541.5,280.5" fill="none" stroke="#a80000" stroke-width="1" stroke-linecap="butt" stroke-linejoin="miter" />
<polyline points="537.5,286.5 541.5,288.5" fill="none" stroke="#a80000" stroke-width="1" stroke-linecap="butt" stroke-linejoin="miter" />
<polyline points="553.5,258.5 561.5,260.5" fill="none" stroke="#a80000" stroke-width="1" stroke-linecap="butt" stroke-linejoin="miter" />
<polyline points="553.5,284.5 563.5,279.5" fill="none" stroke="#a80000" stroke-width="1" stroke-linecap="butt" stroke-linejoin="miter" />
<polyline points="418.5,428.5 426.5,428.5" fill="none" stroke="#a80000" stroke-width="1" stroke-linecap="butt" stroke-linejoin="miter" />
<polyline points="402.5,437.5 426.5,437.5" fill="none" stroke="#a80000" stroke-width="1" stroke-linecap="butt" stroke-linejoin="miter" />
<polyline points="433.5,430.5 447.5,430.5" fill="none" stroke="#a80000" stroke-width="1" stroke-linecap="butt" stroke-linejoin="miter" />
<polyline points="433.5,432.5 447.5,432.5" fill="none" stroke="#a80000" stroke-width="1" stroke-linecap="butt" stroke-linejoin="miter" />
<polyline points="433.5,434.5 447.5,434.5" fill="none" stroke="#a80000" stroke-width="1" stroke-linecap="butt" stroke-linejoin="miter" />
<polyline points="433.5,435.5 447.5,435.5" fill="none" stroke="#a80000" stroke-width="1" stroke-linecap="butt" stroke-linejoin="miter" />
<polyline points="468.5,416.5 471.5,416.5 473.5,419.5 473.5,423.5 471.5,425.5 468.5,425.5" fill="none" stroke="#a80000" stroke-width="1" stroke-linecap="butt" stroke-linejoin="miter" />
<polyline points="468.5,442.5 471.5,442.5 473.5,445.5 473.5,449.5 471.5,451.5 468.5,451.5" fill="none" stroke="#a80000" stroke-width="1" stroke-linecap="butt" stroke-linejoin="miter" />
<polyline points="517.5,416.5 520.5,416.5 522.5,419.5 522.5,423.5 520.5,425.5 517.5,425.5" fill="none" stroke="#a80000" stroke-width="1" stroke-linecap="butt" stroke-linejoin="miter" />
<polyline points="517.5,442.5 520.5,442.5 522.5,445.5 522.5,449.5 520.5,451.5 517.5,451.5" fill="none" stroke="#a80000" stroke-width="1" stroke-linecap="butt" stroke-linejoin="miter" />
<polyline points="479.5,414.5 479.5,411.5 483.5,408.5 523.5,408.5 527.5,404.5" fill="none" stroke="#a80000" stroke-width="1" stroke-linecap="butt" stroke-linejoin="miter" />
<polyline points="500.5,417.5 504.5,413.5 553.5,413.5 557.5,408.5" fill="none" stroke="#a80000" stroke-width="1" stroke-linecap="butt" stroke-linejoin="miter" />
<polyline points="556.5,423.5 562.5,423.5 568.5,418.5 575.5,418.5" fill="none" stroke="#a80000" stroke-width="1" stroke-linecap="butt" stroke-linejoin="miter" />
<polyline points="460.5,436.5 506.5,436.5 509.5,433.5" fill="none" stroke="#a80000" stroke-width="1" stroke-linecap="butt" stroke-linejoin="miter" />
<polyline points="423.5,454.5 426.5,458.5 506.5,458.5 513.5,452.5" fill="none" stroke="#a80000" stroke-width="1" stroke-linecap="butt" stroke-linejoin="miter" />
<polyline points="436.5,460.5 499.5,460.5" fill="none" stroke="#a80000" stroke-width="1" stroke-linecap="butt" stroke-linejoin="miter" />
<polyline points="423.5,416.5 424.5,421.5" fill="none" stroke="#a80000" stroke-width="1" stroke-linecap="butt" stroke-linejoin="miter" />
<polyline points="454.5,421.5 458.5,421.5 461.5,416.5" fill="none" stroke="#a80000" stroke-width="1" stroke-linecap="butt" stroke-linejoin="miter" />
<polyline points="454.5,421.5 458.5,423.5 461.5,423.5" fill="none" stroke="#a80000" stroke-width="1" stroke-linecap="butt" stroke-linejoin="miter" />
<polyline points="454.5,425.5 458.5,426.5 461.5,426.5" fill="none" stroke="#a80000" stroke-width="1" stroke-linecap="butt" stroke-linejoin="miter" />
<polyline points="454.5,430.5 458.5,429.5 461.5,429.5" fill="none" stroke="#a80000" stroke-width="1" stroke-linecap="butt" stroke-linejoin="miter" />
<polyline points="454.5,435.5 458.5,432.5 461.5,432.5" fill="none" stroke="#a80000" stroke-width="1" stroke-linecap="butt" stroke-linejoin="miter" />
<polyline points="454.5,439.5 458.5,435.5 461.5,435.5" fill="none" stroke="#a80000" stroke-width="1" stroke-linecap="butt" stroke-linejoin="miter" />
<polyline points="454.5,444.5 458.5,439.5 461.5,439.5" fill="none" stroke="#a80000" stroke-width="1" stroke-linecap="butt" stroke-linejoin="miter" />
<polyline points="489.5,421.5 492.5,419.5" fill="none" stroke="#a80000" stroke-width="1" stroke-linecap="butt" stroke-linejoin="miter" />
<polyline points="489.5,425.5 492.5,426.5" fill="none" stroke="#a80000" stroke-width="1" stroke-linecap="butt" stroke-linejoin="miter" />
<polyline points="537.5,421.5 541.5,419.5" fill="none" stroke="#a80000" stroke-width="1" stroke-linecap="butt" stroke-linejoin="miter" />
<polyline points="537.5,425.5 541.5,426.5" fill="none" stroke="#a80000" stroke-width="1" stroke-linecap="butt" stroke-linejoin="miter" />
<polyline points="489.5,447.5 492.5,445.5" fill="none" stroke="#a80000" stroke-width="1" stroke-linecap="butt" stroke-linejoin="miter" />
<polyline points="489.5,451.5 492.5,453.5" fill="none" stroke="#a80000" stroke-width="1" stroke-linecap="butt" stroke-linejoin="miter" />
<polyline points="537.5,447.5 541.5,445.5" fill="none" stroke="#a80000" stroke-width="1" stroke-linecap="butt" stroke-linejoin="miter" />
<polyline points="537.5,451.5 541.5,453.5" fill="none" stroke="#a80000" stroke-width="1" stroke-linecap="butt" stroke-linejoin="miter" />
<polyline points="553.5,423.5 561.5,425.5" fill="none" stroke="#a80000" stroke-width="1" stroke-linecap="butt" stroke-linejoin="miter" />
<polyline points="553.5,449.5 563.5,444.5" fill="none" stroke="#a80000" stroke-width="1" stroke-linecap="butt" stroke-linejoin="miter" />
<polyline points="429.5,460.5 502.5,460.5 508.5,454.5" fill="none" stroke="#a80000" stroke-width="1" stroke-linecap="butt" stroke-linejoin="miter" />
<polyline points="428.5,463.5 510.5,463.5" fill="none" stroke="#a80000" stroke-width="1" stroke-linecap="butt" stroke-linejoin="miter" />
<polyline points="489.5,346.5 489.5,355.5 488.5,365.5" fill="none" stroke="#a80000" stroke-width="1" stroke-linecap="butt" stroke-linejoin="miter" />
<polyline points="499.5,340.5 498.5,365.5" fill="none" stroke="#a80000" stroke-width="1" stroke-linecap="butt" stroke-linejoin="miter" />
<polyline points="575.5,391.5 496.5,391.5 478.5,408.5 478.5,420.5" fill="none" stroke="#a80000" stroke-width="1" stroke-linecap="butt" stroke-linejoin="miter" />
<polyline points="575.5,398.5 519.5,398.5 507.5,410.5" fill="none" stroke="#a80000" stroke-width="1" stroke-linecap="butt" stroke-linejoin="miter" />
<polyline points="494.5,465.5 575.5,465.5" fill="none" stroke="#a80000" stroke-width="1" stroke-linecap="butt" stroke-linejoin="miter" />
<polyline points="575.5,437.5 455.5,437.5" fill="none" stroke="#a80000" stroke-width="1" stroke-linecap="butt" stroke-linejoin="miter" />
<polyline points="424.5,461.5 441.5,478.5 514.5,478.5 519.5,484.5 519.5,497.5" fill="none" stroke="#a80000" stroke-width="1" stroke-linecap="butt" stroke-linejoin="miter" />
<polyline points="465.5,487.5 478.5,487.5 484.5,493.5" fill="none" stroke="#a80000" stroke-width="1" stroke-linecap="butt" stroke-linejoin="miter" />
<polyline points="462.5,494.5 462.5,507.5" fill="none" stroke="#a80000" stroke-width="1" stroke-linecap="butt" stroke-linejoin="miter" />
<polyline points="429.5,412.5 479.5,412.5" fill="none" stroke="#a80000" stroke-width="1" stroke-linecap="butt" stroke-linejoin="miter" />
<polyline points="74.5,458.5 77.5,468.5 125.5,468.5 135.5,458.5 176.5,458.5" fill="none" stroke="#a80000" stroke-width="1" stroke-linecap="butt" stroke-linejoin="miter" />
<polyline points="159.5,478.5 159.5,487.5 162.5,490.5 218.5,491.5 237.5,472.5 237.5,449.5 251.5,435.5 262.5,435.5 270.5,428.5 294.5,428.5" fill="none" stroke="#a80000" stroke-width="1" stroke-linecap="butt" stroke-linejoin="miter" />
<polyline points="176.5,477.5 189.5,477.5 218.5,447.5 218.5,430.5 257.5,391.5 262.5,391.5" fill="none" stroke="#a80000" stroke-width="1" stroke-linecap="butt" stroke-linejoin="miter" />
<polyline points="237.5,472.5 273.5,472.5" fill="none" stroke="#a80000" stroke-width="1" stroke-linecap="butt" stroke-linejoin="miter" />
<polyline points="298.5,403.5 301.5,403.5 304.5,406.5 304.5,412.5 298.5,412.5" fill="none" stroke="#a80000" stroke-width="1" stroke-linecap="butt" stroke-linejoin="miter" />
<polyline points="311.5,407.5 304.5,407.5" fill="none" stroke="#a80000" stroke-width="1" stroke-linecap="butt" stroke-linejoin="miter" />
<polyline points="311.5,398.5 307.5,398.5 307.5,403.5 311.5,403.5" fill="none" stroke="#a80000" stroke-width="1" stroke-linecap="butt" stroke-linejoin="miter" />
<polyline points="298.5,452.5 301.5,452.5 304.5,455.5 304.5,461.5 298.5,461.5" fill="none" stroke="#a80000" stroke-width="1" stroke-linecap="butt" stroke-linejoin="miter" />
<polyline points="311.5,457.5 304.5,457.5" fill="none" stroke="#a80000" stroke-width="1" stroke-linecap="butt" stroke-linejoin="miter" />
<polyline points="311.5,448.5 307.5,448.5 307.5,452.5 311.5,452.5" fill="none" stroke="#a80000" stroke-width="1" stroke-linecap="butt" stroke-linejoin="miter" />
<polyline points="298.5,493.5 301.5,493.5 304.5,496.5 304.5,502.5 298.5,502.5" fill="none" stroke="#a80000" stroke-width="1" stroke-linecap="butt" stroke-linejoin="miter" />
<polyline points="311.5,497.5 304.5,497.5" fill="none" stroke="#a80000" stroke-width="1" stroke-linecap="butt" stroke-linejoin="miter" />
<polyline points="311.5,488.5 307.5,488.5 307.5,493.5 311.5,493.5" fill="none" stroke="#a80000" stroke-width="1" stroke-linecap="butt" stroke-linejoin="miter" />
<polyline points="370.5,452.5 373.5,452.5 376.5,455.5 376.5,461.5 370.5,461.5" fill="none" stroke="#a80000" stroke-width="1" stroke-linecap="butt" stroke-linejoin="miter" />
<polyline points="384.5,456.5 376.5,456.5" fill="none" stroke="#a80000" stroke-width="1" stroke-linecap="butt" stroke-linejoin="miter" />
<polyline points="384.5,447.5 380.5,447.5 380.5,452.5 384.5,452.5" fill="none" stroke="#a80000" stroke-width="1" stroke-linecap="butt" stroke-linejoin="miter" />
<polyline points="258.5,393.5 265.5,393.5" fill="none" stroke="#a80000" stroke-width="1" stroke-linecap="butt" stroke-linejoin="miter" />
<polyline points="265.5,399.5 284.5,399.5" fill="none" stroke="#a80000" stroke-width="1" stroke-linecap="butt" stroke-linejoin="miter" />
<polyline points="284.5,399.5 291.5,408.5" fill="none" stroke="#a80000" stroke-width="1" stroke-linecap="butt" stroke-linejoin="miter" />
<polyline points="260.5,435.5 268.5,428.5 306.5,428.5" fill="none" stroke="#a80000" stroke-width="1" stroke-linecap="butt" stroke-linejoin="miter" />
<polyline points="287.5,391.5 291.5,395.5 298.5,395.5" fill="none" stroke="#a80000" stroke-width="1" stroke-linecap="butt" stroke-linejoin="miter" />
<polyline points="305.5,392.5 305.5,396.5" fill="none" stroke="#a80000" stroke-width="1" stroke-linecap="butt" stroke-linejoin="miter" />
<polyline points="318.5,403.5 325.5,403.5 325.5,398.5" fill="none" stroke="#a80000" stroke-width="1" stroke-linecap="butt" stroke-linejoin="miter" />
<polyline points="318.5,408.5 322.5,411.5 325.5,411.5" fill="none" stroke="#a80000" stroke-width="1" stroke-linecap="butt" stroke-linejoin="miter" />
<polyline points="329.5,395.5 336.5,395.5 343.5,389.5" fill="none" stroke="#a80000" stroke-width="1" stroke-linecap="butt" stroke-linejoin="miter" />
<polyline points="329.5,400.5 338.5,405.5 343.5,398.5" fill="none" stroke="#a80000" stroke-width="1" stroke-linecap="butt" stroke-linejoin="miter" />
<polyline points="359.5,389.5 365.5,389.5" fill="none" stroke="#a80000" stroke-width="1" stroke-linecap="butt" stroke-linejoin="miter" />
<polyline points="359.5,398.5 362.5,398.5 365.5,393.5" fill="none" stroke="#a80000" stroke-width="1" stroke-linecap="butt" stroke-linejoin="miter" />
<polyline points="359.5,407.5 365.5,402.5" fill="none" stroke="#a80000" stroke-width="1" stroke-linecap="butt" stroke-linejoin="miter" />
<polyline points="359.5,417.5 362.5,417.5 365.5,411.5" fill="none" stroke="#a80000" stroke-width="1" stroke-linecap="butt" stroke-linejoin="miter" />
<polyline points="333.5,380.5 350.5,380.5 359.5,386.5 359.5,389.5" fill="none" stroke="#a80000" stroke-width="1" stroke-linecap="butt" stroke-linejoin="miter" />
<polyline points="325.5,424.5 325.5,430.5" fill="none" stroke="#a80000" stroke-width="1" stroke-linecap="butt" stroke-linejoin="miter" />
<polyline points="305.5,421.5 309.5,421.5" fill="none" stroke="#a80000" stroke-width="1" stroke-linecap="butt" stroke-linejoin="miter" />
<polyline points="295.5,438.5 304.5,438.5" fill="none" stroke="#a80000" stroke-width="1" stroke-linecap="butt" stroke-linejoin="miter" />
<polyline points="286.5,449.5 291.5,448.5" fill="none" stroke="#a80000" stroke-width="1" stroke-linecap="butt" stroke-linejoin="miter" />
<polyline points="286.5,458.5 291.5,457.5" fill="none" stroke="#a80000" stroke-width="1" stroke-linecap="butt" stroke-linejoin="miter" />
<polyline points="286.5,438.5 284.5,445.5" fill="none" stroke="#a80000" stroke-width="1" stroke-linecap="butt" stroke-linejoin="miter" />
<polyline points="318.5,452.5 322.5,441.5" fill="none" stroke="#a80000" stroke-width="1" stroke-linecap="butt" stroke-linejoin="miter" />
<polyline points="318.5,457.5 325.5,457.5" fill="none" stroke="#a80000" stroke-width="1" stroke-linecap="butt" stroke-linejoin="miter" />
<polyline points="338.5,441.5 341.5,441.5" fill="none" stroke="#a80000" stroke-width="1" stroke-linecap="butt" stroke-linejoin="miter" />
<polyline points="347.5,445.5 350.5,445.5" fill="none" stroke="#a80000" stroke-width="1" stroke-linecap="butt" stroke-linejoin="miter" />
<polyline points="357.5,448.5 363.5,447.5" fill="none" stroke="#a80000" stroke-width="1" stroke-linecap="butt" stroke-linejoin="miter" />
<polyline points="357.5,452.5 363.5,452.5" fill="none" stroke="#a80000" stroke-width="1" stroke-linecap="butt" stroke-linejoin="miter" />
<polyline points="391.5,447.5 396.5,445.5" fill="none" stroke="#a80000" stroke-width="1" stroke-linecap="butt" stroke-linejoin="miter" />
<polyline points="391.5,456.5 396.5,460.5" fill="none" stroke="#a80000" stroke-width="1" stroke-linecap="butt" stroke-linejoin="miter" />
<polyline points="404.5,462.5 406.5,462.5" fill="none" stroke="#a80000" stroke-width="1" stroke-linecap="butt" stroke-linejoin="miter" />
<polyline points="376.5,437.5 376.5,444.5" fill="none" stroke="#a80000" stroke-width="1" stroke-linecap="butt" stroke-linejoin="miter" />
<polyline points="381.5,444.5 384.5,447.5" fill="none" stroke="#a80000" stroke-width="1" stroke-linecap="butt" stroke-linejoin="miter" />
<polyline points="278.5,487.5 280.5,487.5" fill="none" stroke="#a80000" stroke-width="1" stroke-linecap="butt" stroke-linejoin="miter" />
<polyline points="287.5,487.5 291.5,488.5" fill="none" stroke="#a80000" stroke-width="1" stroke-linecap="butt" stroke-linejoin="miter" />
<polyline points="287.5,505.5 291.5,502.5" fill="none" stroke="#a80000" stroke-width="1" stroke-linecap="butt" stroke-linejoin="miter" />
<polyline points="274.5,494.5 274.5,497.5" fill="none" stroke="#a80000" stroke-width="1" stroke-linecap="butt" stroke-linejoin="miter" />
<polyline points="283.5,494.5 283.5,497.5" fill="none" stroke="#a80000" stroke-width="1" stroke-linecap="butt" stroke-linejoin="miter" />
<polyline points="312.5,470.5 321.5,465.5" fill="none" stroke="#a80000" stroke-width="1" stroke-linecap="butt" stroke-linejoin="miter" />
<polyline points="312.5,480.5 318.5,488.5" fill="none" stroke="#a80000" stroke-width="1" stroke-linecap="butt" stroke-linejoin="miter" />
<polyline points="318.5,493.5 321.5,487.5" fill="none" stroke="#a80000" stroke-width="1" stroke-linecap="butt" stroke-linejoin="miter" />
<polyline points="329.5,487.5 333.5,486.5" fill="none" stroke="#a80000" stroke-width="1" stroke-linecap="butt" stroke-linejoin="miter" />
<polyline points="340.5,486.5 342.5,486.5" fill="none" stroke="#a80000" stroke-width="1" stroke-linecap="butt" stroke-linejoin="miter" />
<polyline points="349.5,486.5 352.5,486.5" fill="none" stroke="#a80000" stroke-width="1" stroke-linecap="butt" stroke-linejoin="miter" />
<polyline points="359.5,486.5 366.5,486.5" fill="none" stroke="#a80000" stroke-width="1" stroke-linecap="butt" stroke-linejoin="miter" />
<polyline points="331.5,505.5 333.5,505.5" fill="none" stroke="#a80000" stroke-width="1" stroke-linecap="butt" stroke-linejoin="miter" />
<polyline points="340.5,505.5 342.5,505.5" fill="none" stroke="#a80000" stroke-width="1" stroke-linecap="butt" stroke-linejoin="miter" />
<polyline points="349.5,505.5 352.5,505.5" fill="none" stroke="#a80000" stroke-width="1" stroke-linecap="butt" stroke-linejoin="miter" />
<polyline points="359.5,505.5 366.5,504.5" fill="none" stroke="#a80000" stroke-width="1" stroke-linecap="butt" stroke-linejoin="miter" />
<polyline points="346.5,494.5 346.5,497.5" fill="none" stroke="#a80000" stroke-width="1" stroke-linecap="butt" stroke-linejoin="miter" />
<polyline points="355.5,494.5 355.5,497.5" fill="none" stroke="#a80000" stroke-width="1" stroke-linecap="butt" stroke-linejoin="miter" />
<polyline points="328.5,512.5 328.5,517.5" fill="none" stroke="#a80000" stroke-width="1" stroke-linecap="butt" stroke-linejoin="miter" />
<polyline points="340.5,521.5 346.5,525.5" fill="none" stroke="#a80000" stroke-width="1" stroke-linecap="butt" stroke-linejoin="miter" />
<polyline points="351.5,512.5 351.5,515.5" fill="none" stroke="#a80000" stroke-width="1" stroke-linecap="butt" stroke-linejoin="miter" />
<polyline points="393.5,484.5 400.5,486.5" fill="none" stroke="#a80000" stroke-width="1" stroke-linecap="butt" stroke-linejoin="miter" />
<polyline points="393.5,493.5 400.5,490.5" fill="none" stroke="#a80000" stroke-width="1" stroke-linecap="butt" stroke-linejoin="miter" />
<polyline points="376.5,470.5 378.5,470.5" fill="none" stroke="#a80000" stroke-width="1" stroke-linecap="butt" stroke-linejoin="miter" />
<polyline points="394.5,470.5 396.5,465.5" fill="none" stroke="#a80000" stroke-width="1" stroke-linecap="butt" stroke-linejoin="miter" />
<polyline points="410.5,486.5 416.5,486.5 422.5,499.5" fill="none" stroke="#a80000" stroke-width="1" stroke-linecap="butt" stroke-linejoin="miter" />
<polyline points="405.5,500.5 405.5,507.5 421.5,507.5" fill="none" stroke="#a80000" stroke-width="1" stroke-linecap="butt" stroke-linejoin="miter" />
<polyline points="393.5,500.5 398.5,505.5 405.5,506.5" fill="none" stroke="#a80000" stroke-width="1" stroke-linecap="butt" stroke-linejoin="miter" />
<polyline points="404.5,473.5 404.5,470.5" fill="none" stroke="#a80000" stroke-width="1" stroke-linecap="butt" stroke-linejoin="miter" />
<polyline points="409.5,470.5 409.5,476.5" fill="none" stroke="#a80000" stroke-width="1" stroke-linecap="butt" stroke-linejoin="miter" />
<polyline points="372.5,388.5 375.5,388.5" fill="none" stroke="#a80000" stroke-width="1" stroke-linecap="butt" stroke-linejoin="miter" />
<polyline points="398.5,388.5 401.5,388.5" fill="none" stroke="#a80000" stroke-width="1" stroke-linecap="butt" stroke-linejoin="miter" />
<polyline points="372.5,393.5 375.5,393.5" fill="none" stroke="#a80000" stroke-width="1" stroke-linecap="butt" stroke-linejoin="miter" />
<polyline points="398.5,393.5 401.5,393.5" fill="none" stroke="#a80000" stroke-width="1" stroke-linecap="butt" stroke-linejoin="miter" />
<polyline points="372.5,397.5 375.5,397.5" fill="none" stroke="#a80000" stroke-width="1" stroke-linecap="butt" stroke-linejoin="miter" />
<polyline points="398.5,397.5 401.5,397.5" fill="none" stroke="#a80000" stroke-width="1" stroke-linecap="butt" stroke-linejoin="miter" />
<polyline points="372.5,402.5 375.5,402.5" fill="none" stroke="#a80000" stroke-width="1" stroke-linecap="butt" stroke-linejoin="miter" />
<polyline points="398.5,402.5 401.5,402.5" fill="none" stroke="#a80000" stroke-width="1" stroke-linecap="butt" stroke-linejoin="miter" />
<polyline points="372.5,406.5 375.5,406.5" fill="none" stroke="#a80000" stroke-width="1" stroke-linecap="butt" stroke-linejoin="miter" />
<polyline points="398.5,406.5 401.5,406.5" fill="none" stroke="#a80000" stroke-width="1" stroke-linecap="butt" stroke-linejoin="miter" />
<polyline points="372.5,411.5 375.5,411.5" fill="none" stroke="#a80000" stroke-width="1" stroke-linecap="butt" stroke-linejoin="miter" />
<polyline points="398.5,411.5 401.5,411.5" fill="none" stroke="#a80000" stroke-width="1" stroke-linecap="butt" stroke-linejoin="miter" />
<polyline points="372.5,416.5 375.5,416.5" fill="none" stroke="#a80000" stroke-width="1" stroke-linecap="butt" stroke-linejoin="miter" />
<polyline points="398.5,416.5 401.5,416.5" fill="none" stroke="#a80000" stroke-width="1" stroke-linecap="butt" stroke-linejoin="miter" />
<polyline points="386.5,380.5 386.5,386.5" fill="none" stroke="#a80000" stroke-width="1" stroke-linecap="butt" stroke-linejoin="miter" />
<g fill="#a80000" stroke="none" shape-rendering="geometricPrecision">
<path fill-rule="evenodd" d="M41.6 128.4 L60.7 93 L68.5 93 L71.8 128.4 L65.3 128.4 L65 121.1 L52.4 121.1 L48.2 128.4Z M55.2 115.8 L64.6 115.8 L64 101.2Z"/>
<polygon points="73.8,93 80.1,93 78.1,122.5 85.7,122.5 85.2,128.4 71.4,128.4"/>
<path d="M111.6 97.9A14.3 16.1 0 1 0 111.6 121.8" fill="none" stroke="#a80000" stroke-width="6.6"/>
<polygon points="95.5,128.4 122,93 129.1,93 129.1,100.7 107.9,128.4"/>
<polygon points="107.9,116.5 122.8,116.5 122.8,121.1 104.6,121.1"/>
<polygon points="120.8,93 127.5,93 126.8,128.4 120.5,128.4"/>
<polygon points="120.8,93 143,93 142.7,100.4 120.8,100.4"/>
<polygon points="129.8,93 136.4,93 136.1,128.4 129.5,128.4"/>
</g>
<g fill="#a80000" stroke="#a80000" shape-rendering="geometricPrecision">
<text x="0" y="0" font-size="30" font-weight="bold" stroke-width="2.9" textLength="107" lengthAdjust="spacingAndGlyphs" transform="translate(36.2 158.5) scale(1 1.14)">DIAGNOSTICS</text>
</g>
<text x="35.8" y="175" font-size="13" fill="#a80000" textLength="108.6" lengthAdjust="spacingAndGlyphs">INTERNATIONAL</text>
<polyline points="171.5,190.3 162.5,190.3 162.5,89.5 237.5,89.5 237.5,190.3 227.7,190.3" fill="none" stroke="#000000" stroke-width="1" stroke-linecap="butt" stroke-linejoin="miter" />
<circle cx="199.4" cy="132.4" r="9.1" fill="none" stroke="#000000" stroke-width="1" shape-rendering="geometricPrecision"/>
<circle cx="199.4" cy="132.4" r="4.3" fill="none" stroke="#000000" stroke-width="1" shape-rendering="geometricPrecision"/>
<circle cx="199.4" cy="174.1" r="9.1" fill="none" stroke="#000000" stroke-width="1" shape-rendering="geometricPrecision"/>
<circle cx="199.4" cy="174.1" r="4.3" fill="none" stroke="#000000" stroke-width="1" shape-rendering="geometricPrecision"/>
<polyline points="288.2,190.3 279.3,190.3 279.3,89.5 353.4,89.5 353.4,190.3 344.3,190.3" fill="none" stroke="#000000" stroke-width="1" stroke-linecap="butt" stroke-linejoin="miter" />
<circle cx="315.8" cy="132.4" r="9.1" fill="none" stroke="#000000" stroke-width="1" shape-rendering="geometricPrecision"/>
<circle cx="315.8" cy="132.4" r="4.3" fill="none" stroke="#000000" stroke-width="1" shape-rendering="geometricPrecision"/>
<circle cx="315.8" cy="174.1" r="9.1" fill="none" stroke="#000000" stroke-width="1" shape-rendering="geometricPrecision"/>
<circle cx="315.8" cy="174.1" r="4.3" fill="none" stroke="#000000" stroke-width="1" shape-rendering="geometricPrecision"/>
<polyline points="244.5,132.4 266,132.4" fill="none" stroke="#000000" stroke-width="1" stroke-linecap="butt" stroke-linejoin="miter" />
<polygon points="244.5,132.4 252.5,129.6 252.5,135.2" fill="#000"/>
<polyline points="248.3,176.6 269.7,176.6" fill="none" stroke="#000000" stroke-width="1" stroke-linecap="butt" stroke-linejoin="miter" />
<polygon points="269.7,176.6 261.7,173.8 261.7,179.4" fill="#000"/>
<rect x="415.5" y="107.5" width="25" height="45" fill="none" stroke="#000000" stroke-width="1"/>
<rect x="490.5" y="107.5" width="25" height="45" fill="none" stroke="#000000" stroke-width="1"/>
<rect x="564.5" y="107.5" width="25" height="59" fill="none" stroke="#000000" stroke-width="1"/>
<rect x="639.5" y="107.5" width="25" height="59" fill="none" stroke="#000000" stroke-width="1"/>
<rect x="415.5" y="191.5" width="25" height="31" fill="none" stroke="#000000" stroke-width="1"/>
<rect x="490.5" y="191.5" width="25" height="31" fill="none" stroke="#000000" stroke-width="1"/>
<rect x="68.5" y="203.5" width="25" height="31" fill="none" stroke="#000000" stroke-width="1"/>
<rect x="117.5" y="203.5" width="25" height="31" fill="none" stroke="#000000" stroke-width="1"/>
<rect x="72.5" y="191.5" width="16" height="8" fill="none" stroke="#000000" stroke-width="1"/>
<rect x="74" y="192.2" width="5.8" height="6.6" fill="#a80000"/>
<rect x="81.9" y="192.2" width="5.8" height="6.6" fill="#a80000"/>
<rect x="122.5" y="191.5" width="16" height="8" fill="none" stroke="#000000" stroke-width="1"/>
<rect x="123.4" y="192.2" width="5.7" height="6.6" fill="#a80000"/>
<rect x="131.1" y="192.2" width="5.7" height="6.6" fill="#a80000"/>
<path d="M69 195.5H72M70.5 194V197" stroke="#ff0000" stroke-width="1" fill="none"/>
<path d="M119 195.5H122M120.5 194V197" stroke="#ff0000" stroke-width="1" fill="none"/>
<rect x="68.5" y="245.5" width="25" height="73" fill="none" stroke="#000000" stroke-width="1"/>
<rect x="173.5" y="308.5" width="25" height="58" fill="none" stroke="#000000" stroke-width="1"/>
<rect x="78.5" y="335.5" width="48" height="46" fill="none" stroke="#000000" stroke-width="1"/>
<circle cx="94.9" cy="419.4" r="18.7" fill="none" stroke="#000000" stroke-width="1" shape-rendering="geometricPrecision"/>
<rect x="46.5" y="454.5" width="84" height="37" fill="none" stroke="#000000" stroke-width="1"/>
<rect x="172.5" y="407.5" width="9" height="112" fill="none" stroke="#000000" stroke-width="1"/>
<polyline points="172.4,509.7 181.5,509.7" fill="none" stroke="#000000" stroke-width="1" stroke-linecap="butt" stroke-linejoin="miter" />
<rect x="251.5" y="407.5" width="9" height="112" fill="none" stroke="#000000" stroke-width="1"/>
<polyline points="251.5,509.7 260.3,509.7" fill="none" stroke="#000000" stroke-width="1" stroke-linecap="butt" stroke-linejoin="miter" />
<circle cx="204.7" cy="500.1" r="19.2" fill="none" stroke="#000000" stroke-width="1" shape-rendering="geometricPrecision"/>
<circle cx="204.7" cy="500.1" r="7.5" fill="none" stroke="#000000" stroke-width="1" shape-rendering="geometricPrecision"/>
<circle cx="539.5" cy="190.3" r="13.8" fill="none" stroke="#000000" stroke-width="1" shape-rendering="geometricPrecision"/>
<circle cx="539.5" cy="228.5" r="13.8" fill="none" stroke="#000000" stroke-width="1" shape-rendering="geometricPrecision"/>
<rect x="564.5" y="191.5" width="25" height="31" fill="none" stroke="#000000" stroke-width="1"/>
<rect x="639.5" y="191.5" width="25" height="31" fill="none" stroke="#000000" stroke-width="1"/>
<rect x="564.5" y="233.5" width="25" height="31" fill="none" stroke="#000000" stroke-width="1"/>
<rect x="639.5" y="233.5" width="25" height="31" fill="none" stroke="#000000" stroke-width="1"/>
<rect x="564.5" y="275.5" width="25" height="31" fill="none" stroke="#000000" stroke-width="1"/>
<rect x="639.5" y="275.5" width="25" height="31" fill="none" stroke="#000000" stroke-width="1"/>
<rect x="564.5" y="317.5" width="25" height="31" fill="none" stroke="#000000" stroke-width="1"/>
<rect x="639.5" y="317.5" width="25" height="31" fill="none" stroke="#000000" stroke-width="1"/>
<rect x="564.5" y="359.5" width="25" height="31" fill="none" stroke="#000000" stroke-width="1"/>
<rect x="639.5" y="359.5" width="25" height="31" fill="none" stroke="#000000" stroke-width="1"/>
<rect x="564.5" y="401.5" width="25" height="31" fill="none" stroke="#000000" stroke-width="1"/>
<rect x="639.5" y="401.5" width="25" height="31" fill="none" stroke="#000000" stroke-width="1"/>
<rect x="564.5" y="443.5" width="25" height="31" fill="none" stroke="#000000" stroke-width="1"/>
<rect x="639.5" y="443.5" width="25" height="31" fill="none" stroke="#000000" stroke-width="1"/>
<rect x="564.5" y="485.5" width="25" height="31" fill="none" stroke="#000000" stroke-width="1"/>
<rect x="639.5" y="485.5" width="25" height="31" fill="none" stroke="#000000" stroke-width="1"/>
<polyline points="600.5,192.8 600.5,191.5 609.6,191.5 611.5,194.5 613.5,196.1 616,196.1 618,194.5 619.6,191.5 628.3,191.5 628.3,192.8" fill="none" stroke="#000000" stroke-width="1" stroke-linecap="butt" stroke-linejoin="miter" />
<polyline points="600.5,262.9 600.5,264.4 628.3,264.4 628.3,262.9" fill="none" stroke="#000000" stroke-width="1" stroke-linecap="butt" stroke-linejoin="miter" />
<polyline points="600.5,276.8 600.5,275.5 609.6,275.5 611.5,278.5 613.5,280.1 616,280.1 618,278.5 619.6,275.5 628.3,275.5 628.3,276.8" fill="none" stroke="#000000" stroke-width="1" stroke-linecap="butt" stroke-linejoin="miter" />
<polyline points="600.5,346.9 600.5,348.4 628.3,348.4 628.3,346.9" fill="none" stroke="#000000" stroke-width="1" stroke-linecap="butt" stroke-linejoin="miter" />
<polyline points="600.5,360.8 600.5,359.5 609.6,359.5 611.5,362.5 613.5,364.1 616,364.1 618,362.5 619.6,359.5 628.3,359.5 628.3,360.8" fill="none" stroke="#000000" stroke-width="1" stroke-linecap="butt" stroke-linejoin="miter" />
<polyline points="600.5,430.9 600.5,432.4 628.3,432.4 628.3,430.9" fill="none" stroke="#000000" stroke-width="1" stroke-linecap="butt" stroke-linejoin="miter" />
<polyline points="600.5,444.8 600.5,443.5 609.6,443.5 611.5,446.5 613.5,448.1 616,448.1 618,446.5 619.6,443.5 628.3,443.5 628.3,444.8" fill="none" stroke="#000000" stroke-width="1" stroke-linecap="butt" stroke-linejoin="miter" />
<polyline points="600.5,514.9 600.5,516.4 628.3,516.4 628.3,514.9" fill="none" stroke="#000000" stroke-width="1" stroke-linecap="butt" stroke-linejoin="miter" />
<rect x="451.5" y="214.5" width="28" height="9" fill="none" stroke="#000000" stroke-width="1"/>
<polyline points="470.7,214.7 470.7,223.5" fill="none" stroke="#000000" stroke-width="1" stroke-linecap="butt" stroke-linejoin="miter" />
<rect x="470.5" y="353.5" width="75" height="33" fill="none" stroke="#000000" stroke-width="1"/>
<rect x="500.5" y="384.5" width="15" height="2" fill="none" stroke="#000000" stroke-width="1"/>
<rect x="471.5" y="485.5" width="25" height="31" fill="none" stroke="#000000" stroke-width="1"/>
<rect x="347.3" y="239.4" width="44.4" height="24" rx="5" ry="5" fill="none" stroke="#000" stroke-width="1"/>
<polyline points="236.6,314.6 236.6,267.4 282.7,267.4 282.7,300" fill="none" stroke="#000000" stroke-width="1" stroke-linecap="butt" stroke-linejoin="miter" />
<rect x="240.5" y="270.5" width="38" height="16" fill="none" stroke="#000000" stroke-width="1"/>
<polyline points="240.4,273.2 279,273.2" fill="none" stroke="#000000" stroke-width="1" stroke-linecap="butt" stroke-linejoin="miter" />
<polyline points="245.4,286 245.4,311.3" fill="none" stroke="#000000" stroke-width="1" stroke-linecap="butt" stroke-linejoin="miter" />
<polyline points="274,286 274,311.3" fill="none" stroke="#000000" stroke-width="1" stroke-linecap="butt" stroke-linejoin="miter" />
<polyline points="245.4,274.3 274,274.3" fill="none" stroke="#000000" stroke-width="1" stroke-linecap="butt" stroke-linejoin="miter" />
<polyline points="248.7,306.3 259.5,289 271,306.3" fill="none" stroke="#000000" stroke-width="1" stroke-linecap="butt" stroke-linejoin="miter" />
<rect x="58.2" y="524.2" width="40.8" height="12.4" fill="#0000ff"/>
<rect x="60.4" y="526.3" width="9.6" height="9.5" fill="none" stroke="#a80000" stroke-width="1.2"/>
<rect x="88.6" y="526.3" width="9.4" height="9.5" fill="none" stroke="#0000a0" stroke-width="1.2"/>
<text x="65.2" y="534.6" font-size="9" fill="#a80000" text-anchor="middle" font-weight="bold" >1</text>
<path d="M90 531.5H97M93.5 528V535" stroke="#0000a0" stroke-width="1" fill="none"/>
<polygon points="599.6,522.5 596.3,531 602.9,531" fill="#000"/><polygon points="632.8,533 629.5,524.5 636.1,524.5" fill="#000"/>
<rect x="455.3" y="162" width="4.8" height="6.3" fill="#a80000"/>
<rect x="463.2" y="162" width="4.8" height="6.3" fill="#a80000"/>
<rect x="470.7" y="162" width="4.8" height="6.3" fill="#a80000"/>
<rect x="452.5" y="167.5" width="26" height="19" fill="none" stroke="#000000" stroke-width="1"/>
<polygon points="459.6,175.8 465.7,168.3 471.5,175.8 471.5,191.5 459.6,191.5" fill="#a80000"/>
<path d="M452 165.5H455M453.5 164V167" stroke="#0000ff" stroke-width="1" fill="none"/>
<rect x="462.5" y="195.5" width="6" height="13" fill="none" stroke="#000000" stroke-width="1"/>
<rect x="459" y="197.3" width="4.6" height="2.4" fill="#a80000"/>
<rect x="459" y="205.2" width="4.6" height="2.3" fill="#a80000"/>
<rect x="467.2" y="200.9" width="4.3" height="2.7" fill="#a80000"/>
<rect x="353.5" y="229.5" width="15" height="7" fill="none" stroke="#000000" stroke-width="1"/>
<rect x="354.5" y="230.3" width="5.5" height="4.9" fill="#a80000"/>
<rect x="362" y="230.3" width="5.5" height="4.9" fill="#a80000"/>
<rect x="371.5" y="229.5" width="15" height="7" fill="none" stroke="#000000" stroke-width="1"/>
<rect x="372.8" y="230.3" width="5.5" height="4.9" fill="#a80000"/>
<rect x="380.1" y="230.3" width="5.5" height="4.9" fill="#a80000"/>
<path d="M369 232.5H372M370.5 231V234" stroke="#0000ff" stroke-width="1" fill="none"/>
<rect x="356.3" y="241" width="8.8" height="9.2" fill="#a80000"/>
<rect x="356.3" y="253.2" width="8.8" height="8.4" fill="#a80000"/>
<rect x="358.3" y="250" width="4.8" height="3.4" fill="#a80000"/>
<rect x="375.1" y="241" width="8.8" height="9.2" fill="#a80000"/>
<rect x="375.1" y="253.2" width="8.8" height="8.4" fill="#a80000"/>
<rect x="377.1" y="250" width="4.8" height="3.4" fill="#a80000"/>
<rect x="444.5" y="239.5" width="14" height="6" fill="none" stroke="#000000" stroke-width="1"/>
<rect x="445.6" y="240.1" width="5.2" height="4.3" fill="#a80000"/>
<rect x="452.5" y="240.1" width="5.2" height="4.3" fill="#a80000"/>
<path d="M441 242.5H444M442.5 241V244" stroke="#0000ff" stroke-width="1" fill="none"/>
<path d="M459 242.5H462M460.5 241V244" stroke="#ff0000" stroke-width="1" fill="none"/>
<polyline points="226,289.8 222.5,289.8 222.5,319.6 226,319.6" fill="none" stroke="#000000" stroke-width="1" stroke-linecap="butt" stroke-linejoin="miter" />
<polyline points="235,289.8 237.9,289.8 237.9,319.6 235,319.6" fill="none" stroke="#000000" stroke-width="1" stroke-linecap="butt" stroke-linejoin="miter" />
<rect x="226.3" y="288" width="8.7" height="8.4" fill="#a80000"/>
<rect x="226.3" y="313" width="8.7" height="8.6" fill="#a80000"/>
<rect x="280.5" y="288.5" width="6" height="18" fill="none" stroke="#000000" stroke-width="1"/>
<rect x="281" y="289.8" width="5" height="5.8" fill="#a80000"/>
<rect x="281" y="299.7" width="5" height="5.8" fill="#a80000"/>
<path d="M282 287.5H285M283.5 286V289" stroke="#ff0000" stroke-width="1" fill="none"/>
<path d="M282 308.5H285M283.5 307V310" stroke="#0000ff" stroke-width="1" fill="none"/>
<polyline points="283.5,307 283.5,313 276,313" fill="none" stroke="#000000" stroke-width="1" stroke-linecap="butt" stroke-linejoin="miter" />
<rect x="242.5" y="310.5" width="17" height="12" fill="none" stroke="#000000" stroke-width="1"/>
<rect x="250.3" y="307.2" width="2.5" height="4.1" fill="#a80000"/>
<rect x="267" y="318" width="5.4" height="5.7" fill="#a80000"/>
<rect x="248.2" y="322" width="6.6" height="5" fill="#a80000"/>
<path d="M268 325.5H271M269.5 324V327" stroke="#0000ff" stroke-width="1" fill="none"/>
<path d="M229 323.5H232M230.5 322V325" stroke="#0000ff" stroke-width="1" fill="none"/>
<path d="M229 328.5H232M230.5 327V330" stroke="#0000ff" stroke-width="1" fill="none"/>
<text x="223" y="330" font-size="8" fill="#000000" text-anchor="middle" font-weight="normal"  stroke="#000" stroke-width="0.18">+</text>
<polyline points="226,332.4 222.5,332.4 222.5,361.5 226,361.5" fill="none" stroke="#000000" stroke-width="1" stroke-linecap="butt" stroke-linejoin="miter" />
<polyline points="235,332.4 238.7,332.4 238.7,361.5 235,361.5" fill="none" stroke="#000000" stroke-width="1" stroke-linecap="butt" stroke-linejoin="miter" />
<rect x="226.3" y="330" width="8.7" height="8.2" fill="#a80000"/>
<rect x="226.3" y="354.8" width="8.7" height="8.6" fill="#a80000"/>
<rect x="242.5" y="340.5" width="17" height="18" fill="none" stroke="#000000" stroke-width="1"/>
<rect x="248.2" y="336.6" width="6.6" height="5" fill="#a80000"/>
<rect x="244.2" y="352.3" width="2.3" height="5.7" fill="#a80000"/>
<rect x="249.5" y="352.3" width="3" height="4.7" fill="#a80000"/>
<rect x="255.3" y="352.3" width="3.2" height="4.7" fill="#a80000"/>
<rect x="267" y="320" width="5.4" height="4" fill="#a80000"/>
<rect x="267" y="342.4" width="5.4" height="5" fill="#a80000"/>
<rect x="267" y="350.7" width="5.4" height="6.6" fill="#a80000"/>
<text x="269.7" y="338.5" font-size="7" fill="#000000" text-anchor="middle" font-weight="normal"  stroke="#000" stroke-width="0.18">+</text>
<path d="M268 340.5H271M269.5 339V342" stroke="#0000ff" stroke-width="1" fill="none"/>
<polyline points="258.5,354.5 267.5,354.5" fill="none" stroke="#a80000" stroke-width="1" stroke-linecap="butt" stroke-linejoin="miter" />
<rect x="139.5" y="345.5" width="19" height="26" fill="none" stroke="#000000" stroke-width="1"/>
<polygon points="134.2,352.3 148.3,352.3 157,356.8 163.7,356.8 163.7,360.6 157,360.6 148.3,364.4 134.2,364.4" fill="#a80000"/>
<rect x="157.4" y="348.8" width="6.3" height="3.9" fill="#a80000"/>
<rect x="157.4" y="364.4" width="6.3" height="4" fill="#a80000"/>
<path d="M166 350.5H169M167.5 349V352" stroke="#0000ff" stroke-width="1" fill="none"/>
<rect x="136.5" y="466.5" width="6" height="13" fill="none" stroke="#000000" stroke-width="1"/>
<rect x="133.4" y="471.3" width="5.1" height="2.7" fill="#a80000"/>
<rect x="140.8" y="468" width="5.2" height="2.5" fill="#a80000"/>
<rect x="140.8" y="475.4" width="5.2" height="2.6" fill="#a80000"/>
<rect x="152.5" y="466.5" width="6" height="13" fill="none" stroke="#000000" stroke-width="1"/>
<rect x="156.6" y="468" width="5.4" height="2.5" fill="#a80000"/>
<rect x="156.6" y="475.4" width="5.4" height="2.6" fill="#a80000"/>
<rect x="150" y="471.3" width="5" height="2.7" fill="#a80000"/>
<rect x="135" y="461.3" width="8.3" height="1.7" fill="#a80000"/>
<rect x="151.3" y="461.3" width="9.4" height="1.7" fill="#a80000"/>
<path d="M142 466.5H145M143.5 465V468" stroke="#ff0000" stroke-width="1" fill="none"/>
<path d="M161 469.5H164M162.5 468V471" stroke="#0000ff" stroke-width="1" fill="none"/>
<rect x="426.2" y="254.6" width="7" height="3.2" fill="#a80000"/>
<rect x="447.3" y="254.6" width="6.6" height="3.2" fill="#a80000"/>
<rect x="426.2" y="259.2" width="7" height="3.2" fill="#a80000"/>
<rect x="447.3" y="259.2" width="6.6" height="3.2" fill="#a80000"/>
<rect x="426.2" y="263.8" width="7" height="3.2" fill="#a80000"/>
<rect x="447.3" y="263.8" width="6.6" height="3.2" fill="#a80000"/>
<rect x="426.2" y="268.5" width="7" height="3.2" fill="#a80000"/>
<rect x="447.3" y="268.5" width="6.6" height="3.2" fill="#a80000"/>
<rect x="426.2" y="273.1" width="7" height="3.2" fill="#a80000"/>
<rect x="447.3" y="273.1" width="6.6" height="3.2" fill="#a80000"/>
<rect x="426.2" y="277.7" width="7" height="3.2" fill="#a80000"/>
<rect x="447.3" y="277.7" width="6.6" height="3.2" fill="#a80000"/>
<rect x="426.2" y="282.3" width="7" height="3.2" fill="#a80000"/>
<rect x="447.3" y="282.3" width="6.6" height="3.2" fill="#a80000"/>
<rect x="426.2" y="286.9" width="7" height="3.2" fill="#a80000"/>
<rect x="447.3" y="286.9" width="6.6" height="3.2" fill="#a80000"/>
<polyline points="424.5,255.4 424.5,252.4 436.4,252.4 439.4,255.4 442.4,252.4 454.4,252.4 454.4,255.4" fill="none" stroke="#000000" stroke-width="1" stroke-linecap="butt" stroke-linejoin="miter" />
<polyline points="424.5,288.4 424.5,291.4 454.4,291.4 454.4,288.4" fill="none" stroke="#000000" stroke-width="1" stroke-linecap="butt" stroke-linejoin="miter" />
<rect x="461.4" y="250.1" width="6.6" height="3" fill="#a80000"/>
<rect x="482.4" y="250.1" width="6.6" height="3" fill="#a80000"/>
<rect x="461.4" y="254.6" width="6.6" height="3" fill="#a80000"/>
<rect x="482.4" y="254.6" width="6.6" height="3" fill="#a80000"/>
<rect x="461.4" y="259.2" width="6.6" height="3" fill="#a80000"/>
<rect x="482.4" y="259.2" width="6.6" height="3" fill="#a80000"/>
<rect x="461.4" y="263.8" width="6.6" height="3" fill="#a80000"/>
<rect x="482.4" y="263.8" width="6.6" height="3" fill="#a80000"/>
<polyline points="459.4,252.6 459.4,249.6 471.5,249.6 474.5,252.6 477.5,249.6 489.6,249.6 489.6,252.6" fill="none" stroke="#000000" stroke-width="1" stroke-linecap="butt" stroke-linejoin="miter" />
<polyline points="459.4,264.3 459.4,267.3 489.6,267.3 489.6,264.3" fill="none" stroke="#000000" stroke-width="1" stroke-linecap="butt" stroke-linejoin="miter" />
<rect x="510.3" y="250.1" width="6.7" height="3" fill="#a80000"/>
<rect x="531" y="250.1" width="6.7" height="3" fill="#a80000"/>
<rect x="510.3" y="254.6" width="6.7" height="3" fill="#a80000"/>
<rect x="531" y="254.6" width="6.7" height="3" fill="#a80000"/>
<rect x="510.3" y="259.2" width="6.7" height="3" fill="#a80000"/>
<rect x="531" y="259.2" width="6.7" height="3" fill="#a80000"/>
<rect x="510.3" y="263.8" width="6.7" height="3" fill="#a80000"/>
<rect x="531" y="263.8" width="6.7" height="3" fill="#a80000"/>
<polyline points="508.6,252.6 508.6,249.6 520.5,249.6 523.5,252.6 526.5,249.6 538.5,249.6 538.5,252.6" fill="none" stroke="#000000" stroke-width="1" stroke-linecap="butt" stroke-linejoin="miter" />
<polyline points="508.6,264.3 508.6,267.3 538.5,267.3 538.5,264.3" fill="none" stroke="#000000" stroke-width="1" stroke-linecap="butt" stroke-linejoin="miter" />
<rect x="495.5" y="251.5" width="6" height="13" fill="none" stroke="#000000" stroke-width="1"/>
<rect x="492" y="253" width="4.6" height="2.4" fill="#a80000"/>
<rect x="492" y="260.9" width="4.6" height="2.3" fill="#a80000"/>
<rect x="500.2" y="256.6" width="4.3" height="2.7" fill="#a80000"/>
<rect x="544.5" y="251.5" width="6" height="13" fill="none" stroke="#000000" stroke-width="1"/>
<rect x="541" y="253" width="4.6" height="2.4" fill="#a80000"/>
<rect x="541" y="260.9" width="4.6" height="2.3" fill="#a80000"/>
<rect x="549.2" y="256.6" width="4.3" height="2.7" fill="#a80000"/>
<path d="M470 256.5H473M471.5 255V258" stroke="#0000ff" stroke-width="1" fill="none"/>
<path d="M519 256.5H522M520.5 255V258" stroke="#0000ff" stroke-width="1" fill="none"/>
<rect x="461.4" y="276.3" width="6.6" height="3" fill="#a80000"/>
<rect x="482.4" y="276.3" width="6.6" height="3" fill="#a80000"/>
<rect x="461.4" y="280.9" width="6.6" height="3" fill="#a80000"/>
<rect x="482.4" y="280.9" width="6.6" height="3" fill="#a80000"/>
<rect x="461.4" y="285.4" width="6.6" height="3" fill="#a80000"/>
<rect x="482.4" y="285.4" width="6.6" height="3" fill="#a80000"/>
<rect x="461.4" y="289.9" width="6.6" height="3" fill="#a80000"/>
<rect x="482.4" y="289.9" width="6.6" height="3" fill="#a80000"/>
<polyline points="459.4,277.5 459.4,274.5 471.5,274.5 474.5,277.5 477.5,274.5 489.6,274.5 489.6,277.5" fill="none" stroke="#000000" stroke-width="1" stroke-linecap="butt" stroke-linejoin="miter" />
<polyline points="459.4,290 459.4,293 489.6,293 489.6,290" fill="none" stroke="#000000" stroke-width="1" stroke-linecap="butt" stroke-linejoin="miter" />
<rect x="510.3" y="276.3" width="6.7" height="3" fill="#a80000"/>
<rect x="531" y="276.3" width="6.7" height="3" fill="#a80000"/>
<rect x="510.3" y="280.9" width="6.7" height="3" fill="#a80000"/>
<rect x="531" y="280.9" width="6.7" height="3" fill="#a80000"/>
<rect x="510.3" y="285.4" width="6.7" height="3" fill="#a80000"/>
<rect x="531" y="285.4" width="6.7" height="3" fill="#a80000"/>
<rect x="510.3" y="289.9" width="6.7" height="3" fill="#a80000"/>
<rect x="531" y="289.9" width="6.7" height="3" fill="#a80000"/>
<polyline points="508.6,277.5 508.6,274.5 520.5,274.5 523.5,277.5 526.5,274.5 538.5,274.5 538.5,277.5" fill="none" stroke="#000000" stroke-width="1" stroke-linecap="butt" stroke-linejoin="miter" />
<polyline points="508.6,290 508.6,293 538.5,293 538.5,290" fill="none" stroke="#000000" stroke-width="1" stroke-linecap="butt" stroke-linejoin="miter" />
<rect x="495.5" y="276.5" width="6" height="13" fill="none" stroke="#000000" stroke-width="1"/>
<rect x="492" y="277.9" width="4.6" height="2.4" fill="#a80000"/>
<rect x="492" y="285.8" width="4.6" height="2.3" fill="#a80000"/>
<rect x="500.2" y="281.5" width="4.3" height="2.7" fill="#a80000"/>
<rect x="544.5" y="276.5" width="6" height="13" fill="none" stroke="#000000" stroke-width="1"/>
<rect x="541" y="277.9" width="4.6" height="2.4" fill="#a80000"/>
<rect x="541" y="285.8" width="4.6" height="2.3" fill="#a80000"/>
<rect x="549.2" y="281.5" width="4.3" height="2.7" fill="#a80000"/>
<path d="M470 282.5H473M471.5 281V284" stroke="#0000ff" stroke-width="1" fill="none"/>
<path d="M519 282.5H522M520.5 281V284" stroke="#0000ff" stroke-width="1" fill="none"/>
<rect x="426.2" y="419.6" width="7" height="3.2" fill="#a80000"/>
<rect x="447.3" y="419.6" width="6.6" height="3.2" fill="#a80000"/>
<rect x="426.2" y="424.2" width="7" height="3.2" fill="#a80000"/>
<rect x="447.3" y="424.2" width="6.6" height="3.2" fill="#a80000"/>
<rect x="426.2" y="428.8" width="7" height="3.2" fill="#a80000"/>
<rect x="447.3" y="428.8" width="6.6" height="3.2" fill="#a80000"/>
<rect x="426.2" y="433.5" width="7" height="3.2" fill="#a80000"/>
<rect x="447.3" y="433.5" width="6.6" height="3.2" fill="#a80000"/>
<rect x="426.2" y="438.1" width="7" height="3.2" fill="#a80000"/>
<rect x="447.3" y="438.1" width="6.6" height="3.2" fill="#a80000"/>
<rect x="426.2" y="442.7" width="7" height="3.2" fill="#a80000"/>
<rect x="447.3" y="442.7" width="6.6" height="3.2" fill="#a80000"/>
<rect x="426.2" y="447.3" width="7" height="3.2" fill="#a80000"/>
<rect x="447.3" y="447.3" width="6.6" height="3.2" fill="#a80000"/>
<rect x="426.2" y="451.9" width="7" height="3.2" fill="#a80000"/>
<rect x="447.3" y="451.9" width="6.6" height="3.2" fill="#a80000"/>
<polyline points="424.5,420.4 424.5,417.4 436.4,417.4 439.4,420.4 442.4,417.4 454.4,417.4 454.4,420.4" fill="none" stroke="#000000" stroke-width="1" stroke-linecap="butt" stroke-linejoin="miter" />
<polyline points="424.5,453.4 424.5,456.4 454.4,456.4 454.4,453.4" fill="none" stroke="#000000" stroke-width="1" stroke-linecap="butt" stroke-linejoin="miter" />
<rect x="461.4" y="415.1" width="6.6" height="3" fill="#a80000"/>
<rect x="482.4" y="415.1" width="6.6" height="3" fill="#a80000"/>
<rect x="461.4" y="419.6" width="6.6" height="3" fill="#a80000"/>
<rect x="482.4" y="419.6" width="6.6" height="3" fill="#a80000"/>
<rect x="461.4" y="424.2" width="6.6" height="3" fill="#a80000"/>
<rect x="482.4" y="424.2" width="6.6" height="3" fill="#a80000"/>
<rect x="461.4" y="428.8" width="6.6" height="3" fill="#a80000"/>
<rect x="482.4" y="428.8" width="6.6" height="3" fill="#a80000"/>
<polyline points="459.4,417.6 459.4,414.6 471.5,414.6 474.5,417.6 477.5,414.6 489.6,414.6 489.6,417.6" fill="none" stroke="#000000" stroke-width="1" stroke-linecap="butt" stroke-linejoin="miter" />
<polyline points="459.4,429.3 459.4,432.3 489.6,432.3 489.6,429.3" fill="none" stroke="#000000" stroke-width="1" stroke-linecap="butt" stroke-linejoin="miter" />
<rect x="510.3" y="415.1" width="6.7" height="3" fill="#a80000"/>
<rect x="531" y="415.1" width="6.7" height="3" fill="#a80000"/>
<rect x="510.3" y="419.6" width="6.7" height="3" fill="#a80000"/>
<rect x="531" y="419.6" width="6.7" height="3" fill="#a80000"/>
<rect x="510.3" y="424.2" width="6.7" height="3" fill="#a80000"/>
<rect x="531" y="424.2" width="6.7" height="3" fill="#a80000"/>
<rect x="510.3" y="428.8" width="6.7" height="3" fill="#a80000"/>
<rect x="531" y="428.8" width="6.7" height="3" fill="#a80000"/>
<polyline points="508.6,417.6 508.6,414.6 520.5,414.6 523.5,417.6 526.5,414.6 538.5,414.6 538.5,417.6" fill="none" stroke="#000000" stroke-width="1" stroke-linecap="butt" stroke-linejoin="miter" />
<polyline points="508.6,429.3 508.6,432.3 538.5,432.3 538.5,429.3" fill="none" stroke="#000000" stroke-width="1" stroke-linecap="butt" stroke-linejoin="miter" />
<rect x="495.5" y="416.5" width="6" height="13" fill="none" stroke="#000000" stroke-width="1"/>
<rect x="492" y="418" width="4.6" height="2.4" fill="#a80000"/>
<rect x="492" y="425.9" width="4.6" height="2.3" fill="#a80000"/>
<rect x="500.2" y="421.6" width="4.3" height="2.7" fill="#a80000"/>
<rect x="544.5" y="416.5" width="6" height="13" fill="none" stroke="#000000" stroke-width="1"/>
<rect x="541" y="418" width="4.6" height="2.4" fill="#a80000"/>
<rect x="541" y="425.9" width="4.6" height="2.3" fill="#a80000"/>
<rect x="549.2" y="421.6" width="4.3" height="2.7" fill="#a80000"/>
<path d="M470 421.5H473M471.5 420V423" stroke="#0000ff" stroke-width="1" fill="none"/>
<path d="M519 421.5H522M520.5 420V423" stroke="#0000ff" stroke-width="1" fill="none"/>
<rect x="461.4" y="441.3" width="6.6" height="3" fill="#a80000"/>
<rect x="482.4" y="441.3" width="6.6" height="3" fill="#a80000"/>
<rect x="461.4" y="445.9" width="6.6" height="3" fill="#a80000"/>
<rect x="482.4" y="445.9" width="6.6" height="3" fill="#a80000"/>
<rect x="461.4" y="450.4" width="6.6" height="3" fill="#a80000"/>
<rect x="482.4" y="450.4" width="6.6" height="3" fill="#a80000"/>
<rect x="461.4" y="454.9" width="6.6" height="3" fill="#a80000"/>
<rect x="482.4" y="454.9" width="6.6" height="3" fill="#a80000"/>
<polyline points="459.4,442.5 459.4,439.5 471.5,439.5 474.5,442.5 477.5,439.5 489.6,439.5 489.6,442.5" fill="none" stroke="#000000" stroke-width="1" stroke-linecap="butt" stroke-linejoin="miter" />
<polyline points="459.4,455 459.4,458 489.6,458 489.6,455" fill="none" stroke="#000000" stroke-width="1" stroke-linecap="butt" stroke-linejoin="miter" />
<rect x="510.3" y="441.3" width="6.7" height="3" fill="#a80000"/>
<rect x="531" y="441.3" width="6.7" height="3" fill="#a80000"/>
<rect x="510.3" y="445.9" width="6.7" height="3" fill="#a80000"/>
<rect x="531" y="445.9" width="6.7" height="3" fill="#a80000"/>
<rect x="510.3" y="450.4" width="6.7" height="3" fill="#a80000"/>
<rect x="531" y="450.4" width="6.7" height="3" fill="#a80000"/>
<rect x="510.3" y="454.9" width="6.7" height="3" fill="#a80000"/>
<rect x="531" y="454.9" width="6.7" height="3" fill="#a80000"/>
<polyline points="508.6,442.5 508.6,439.5 520.5,439.5 523.5,442.5 526.5,439.5 538.5,439.5 538.5,442.5" fill="none" stroke="#000000" stroke-width="1" stroke-linecap="butt" stroke-linejoin="miter" />
<polyline points="508.6,455 508.6,458 538.5,458 538.5,455" fill="none" stroke="#000000" stroke-width="1" stroke-linecap="butt" stroke-linejoin="miter" />
<rect x="495.5" y="441.5" width="6" height="13" fill="none" stroke="#000000" stroke-width="1"/>
<rect x="492" y="442.9" width="4.6" height="2.4" fill="#a80000"/>
<rect x="492" y="450.8" width="4.6" height="2.3" fill="#a80000"/>
<rect x="500.2" y="446.5" width="4.3" height="2.7" fill="#a80000"/>
<rect x="544.5" y="441.5" width="6" height="13" fill="none" stroke="#000000" stroke-width="1"/>
<rect x="541" y="442.9" width="4.6" height="2.4" fill="#a80000"/>
<rect x="541" y="450.8" width="4.6" height="2.3" fill="#a80000"/>
<rect x="549.2" y="446.5" width="4.3" height="2.7" fill="#a80000"/>
<path d="M470 447.5H473M471.5 446V449" stroke="#0000ff" stroke-width="1" fill="none"/>
<path d="M519 447.5H522M520.5 446V449" stroke="#0000ff" stroke-width="1" fill="none"/>
<rect x="486" y="311.1" width="6.9" height="3" fill="#a80000"/>
<rect x="522.4" y="311.1" width="7" height="3" fill="#a80000"/>
<rect x="486" y="315.6" width="6.9" height="3" fill="#a80000"/>
<rect x="522.4" y="315.6" width="7" height="3" fill="#a80000"/>
<rect x="486" y="320" width="6.9" height="3" fill="#a80000"/>
<rect x="522.4" y="320" width="7" height="3" fill="#a80000"/>
<rect x="486" y="324.5" width="6.9" height="3" fill="#a80000"/>
<rect x="522.4" y="324.5" width="7" height="3" fill="#a80000"/>
<rect x="486" y="328.9" width="6.9" height="3" fill="#a80000"/>
<rect x="522.4" y="328.9" width="7" height="3" fill="#a80000"/>
<rect x="486" y="333.4" width="6.9" height="3" fill="#a80000"/>
<rect x="522.4" y="333.4" width="7" height="3" fill="#a80000"/>
<rect x="486" y="337.8" width="6.9" height="3" fill="#a80000"/>
<rect x="522.4" y="337.8" width="7" height="3" fill="#a80000"/>
<rect x="486" y="342.2" width="6.9" height="3" fill="#a80000"/>
<rect x="522.4" y="342.2" width="7" height="3" fill="#a80000"/>
<polyline points="484.6,312.6 484.6,309.6 504.8,309.6 507.8,312.6 510.8,309.6 531,309.6 531,312.6" fill="none" stroke="#000000" stroke-width="1" stroke-linecap="butt" stroke-linejoin="miter" />
<polyline points="484.6,343.2 484.6,346.2 531,346.2 531,343.2" fill="none" stroke="#000000" stroke-width="1" stroke-linecap="butt" stroke-linejoin="miter" />
<path d="M466 307.5H469M467.5 306V309" stroke="#0000ff" stroke-width="1" fill="none"/>
<path d="M524 307.5H527M525.5 306V309" stroke="#ff0000" stroke-width="1" fill="none"/>
<path d="M530 316.5H533M531.5 315V318" stroke="#0000ff" stroke-width="1" fill="none"/>
<rect x="464.5" y="309.5" width="7" height="15" fill="none" stroke="#000000" stroke-width="1"/>
<rect x="465.3" y="310.5" width="5" height="5.5" fill="#a80000"/>
<rect x="465.3" y="317.8" width="5" height="5.5" fill="#a80000"/>
<rect x="464.5" y="332.5" width="7" height="15" fill="none" stroke="#000000" stroke-width="1"/>
<rect x="465.3" y="333.6" width="5" height="5.4" fill="#a80000"/>
<rect x="465.3" y="340.8" width="5" height="5.4" fill="#a80000"/>
<rect x="473.5" y="309.5" width="7" height="15" fill="none" stroke="#000000" stroke-width="1"/>
<rect x="474.8" y="310.5" width="5" height="5.5" fill="#a80000"/>
<rect x="474.8" y="317.8" width="5" height="5.5" fill="#a80000"/>
<rect x="473.5" y="332.5" width="7" height="15" fill="none" stroke="#000000" stroke-width="1"/>
<rect x="474.8" y="333.6" width="5" height="5.4" fill="#a80000"/>
<rect x="474.8" y="340.8" width="5" height="5.4" fill="#a80000"/>
<path d="M476 348.5H479M477.5 347V350" stroke="#0000ff" stroke-width="1" fill="none"/>
<rect x="406.5" y="324.5" width="16" height="7" fill="none" stroke="#000000" stroke-width="1"/>
<rect x="408.1" y="325.6" width="5.5" height="5" fill="#a80000"/>
<rect x="415.6" y="325.6" width="5.5" height="5" fill="#a80000"/>
<rect x="406.5" y="333.5" width="16" height="8" fill="none" stroke="#000000" stroke-width="1"/>
<rect x="408.1" y="334.6" width="5.5" height="5.6" fill="#a80000"/>
<rect x="415.6" y="334.6" width="5.5" height="5.6" fill="#a80000"/>
<path d="M402 328.5H405M403.5 327V330" stroke="#000000" stroke-width="1" fill="none"/>
<path d="M423 328.5H426M424.5 327V330" stroke="#0000ff" stroke-width="1" fill="none"/>
<path d="M423 337.5H426M424.5 336V339" stroke="#ff0000" stroke-width="1" fill="none"/>
<rect x="486.5" y="403.5" width="15" height="7" fill="none" stroke="#000000" stroke-width="1"/>
<rect x="487.4" y="404.7" width="5.4" height="5.2" fill="#a80000"/>
<rect x="494.6" y="404.7" width="5.4" height="5.2" fill="#a80000"/>
<path d="M483 407.5H486M484.5 406V409" stroke="#0000ff" stroke-width="1" fill="none"/>
<path d="M502 407.5H505M503.5 406V409" stroke="#ff0000" stroke-width="1" fill="none"/>
<rect x="324.5" y="359.5" width="8" height="16" fill="none" stroke="#000000" stroke-width="1"/>
<rect x="325.4" y="361" width="5.8" height="5.7" fill="#a80000"/>
<rect x="325.4" y="368.7" width="5.8" height="5.7" fill="#a80000"/>
<rect x="333.5" y="359.5" width="7" height="16" fill="none" stroke="#000000" stroke-width="1"/>
<rect x="334.6" y="361" width="5.4" height="5.7" fill="#a80000"/>
<rect x="334.6" y="368.7" width="5.4" height="5.7" fill="#a80000"/>
<rect x="342.5" y="359.5" width="8" height="16" fill="none" stroke="#000000" stroke-width="1"/>
<rect x="343.2" y="361" width="6.3" height="5.7" fill="#a80000"/>
<rect x="343.2" y="368.7" width="6.3" height="5.7" fill="#a80000"/>
<rect x="352.5" y="359.5" width="7" height="16" fill="none" stroke="#000000" stroke-width="1"/>
<rect x="353.5" y="361" width="5.1" height="5.7" fill="#a80000"/>
<rect x="353.5" y="368.7" width="5.1" height="5.7" fill="#a80000"/>
<path d="M354 358.5H357M355.5 357V360" stroke="#0000ff" stroke-width="1" fill="none"/>
<path d="M327 376.5H330M328.5 375V378" stroke="#ff0000" stroke-width="1" fill="none"/>
<path d="M355 376.5H358M356.5 375V378" stroke="#ff0000" stroke-width="1" fill="none"/>
<rect x="378.5" y="373.5" width="16" height="7" fill="none" stroke="#000000" stroke-width="1"/>
<rect x="379.4" y="374.6" width="5.7" height="4.9" fill="#a80000"/>
<rect x="387.1" y="374.6" width="5.7" height="4.9" fill="#a80000"/>
<path d="M375 377.5H378M376.5 376V379" stroke="#ff0000" stroke-width="1" fill="none"/>
<path d="M395 377.5H398M396.5 376V379" stroke="#0000ff" stroke-width="1" fill="none"/>
<rect x="365" y="387.1" width="7" height="3" fill="#a80000"/>
<rect x="401.6" y="387.1" width="6.9" height="3" fill="#a80000"/>
<rect x="365" y="391.7" width="7" height="3" fill="#a80000"/>
<rect x="401.6" y="391.7" width="6.9" height="3" fill="#a80000"/>
<rect x="365" y="396.3" width="7" height="3" fill="#a80000"/>
<rect x="401.6" y="396.3" width="6.9" height="3" fill="#a80000"/>
<rect x="365" y="400.8" width="7" height="3" fill="#a80000"/>
<rect x="401.6" y="400.8" width="6.9" height="3" fill="#a80000"/>
<rect x="365" y="405.4" width="7" height="3" fill="#a80000"/>
<rect x="401.6" y="405.4" width="6.9" height="3" fill="#a80000"/>
<rect x="365" y="410" width="7" height="3" fill="#a80000"/>
<rect x="401.6" y="410" width="6.9" height="3" fill="#a80000"/>
<rect x="365" y="414.6" width="7" height="3" fill="#a80000"/>
<rect x="401.6" y="414.6" width="6.9" height="3" fill="#a80000"/>
<polyline points="363.3,389.3 363.3,386.3 383.4,386.3 386.4,389.3 389.4,386.3 409.4,386.3 409.4,389.3" fill="none" stroke="#000000" stroke-width="1" stroke-linecap="butt" stroke-linejoin="miter" />
<polyline points="363.3,416.8 363.3,419.8 409.4,419.8 409.4,416.8" fill="none" stroke="#000000" stroke-width="1" stroke-linecap="butt" stroke-linejoin="miter" />
<path d="M397 388.5H400M398.5 387V390" stroke="#ff0000" stroke-width="1" fill="none"/>
<path d="M397 411.5H400M398.5 410V413" stroke="#ff0000" stroke-width="1" fill="none"/>
<path d="M373 416.5H376M374.5 415V418" stroke="#0000ff" stroke-width="1" fill="none"/>
<path d="M410 416.5H413M411.5 415V418" stroke="#0000ff" stroke-width="1" fill="none"/>
<rect x="261.5" y="388.5" width="7" height="15" fill="none" stroke="#000000" stroke-width="1"/>
<rect x="262.7" y="389.5" width="4.9" height="5.4" fill="#a80000"/>
<rect x="262.7" y="396.6" width="4.9" height="5.4" fill="#a80000"/>
<rect x="271.5" y="388.5" width="7" height="15" fill="none" stroke="#000000" stroke-width="1"/>
<rect x="272.3" y="389.5" width="5.2" height="5.4" fill="#a80000"/>
<rect x="272.3" y="396.6" width="5.2" height="5.4" fill="#a80000"/>
<rect x="280.5" y="388.5" width="7" height="15" fill="none" stroke="#000000" stroke-width="1"/>
<rect x="281.7" y="389.5" width="4.7" height="5.4" fill="#a80000"/>
<rect x="281.7" y="396.6" width="4.7" height="5.4" fill="#a80000"/>
<rect x="297.5" y="385.5" width="15" height="7" fill="none" stroke="#000000" stroke-width="1"/>
<rect x="298.5" y="386.3" width="5.7" height="4.7" fill="#a80000"/>
<rect x="306.1" y="386.3" width="5.7" height="4.7" fill="#a80000"/>
<path d="M313 388.5H316M314.5 387V390" stroke="#0000ff" stroke-width="1" fill="none"/>
<rect x="291.5" y="397.2" width="6.5" height="3" fill="#a80000"/>
<rect x="311.4" y="397.2" width="7.1" height="3" fill="#a80000"/>
<rect x="291.5" y="401.8" width="6.5" height="3" fill="#a80000"/>
<rect x="311.4" y="401.8" width="7.1" height="3" fill="#a80000"/>
<rect x="291.5" y="406.4" width="6.5" height="3" fill="#a80000"/>
<rect x="311.4" y="406.4" width="7.1" height="3" fill="#a80000"/>
<rect x="291.5" y="411" width="6.5" height="3" fill="#a80000"/>
<rect x="311.4" y="411" width="7.1" height="3" fill="#a80000"/>
<polyline points="289.9,398.7 289.9,395.7 301.8,395.7 304.8,398.7 307.8,395.7 319.7,395.7 319.7,398.7" fill="none" stroke="#000000" stroke-width="1" stroke-linecap="butt" stroke-linejoin="miter" />
<polyline points="289.9,411.7 289.9,414.7 319.7,414.7 319.7,411.7" fill="none" stroke="#000000" stroke-width="1" stroke-linecap="butt" stroke-linejoin="miter" />
<rect x="291.5" y="446.5" width="6.5" height="3" fill="#a80000"/>
<rect x="311.4" y="446.5" width="7.1" height="3" fill="#a80000"/>
<rect x="291.5" y="451.1" width="6.5" height="3" fill="#a80000"/>
<rect x="311.4" y="451.1" width="7.1" height="3" fill="#a80000"/>
<rect x="291.5" y="455.7" width="6.5" height="3" fill="#a80000"/>
<rect x="311.4" y="455.7" width="7.1" height="3" fill="#a80000"/>
<rect x="291.5" y="460.3" width="6.5" height="3" fill="#a80000"/>
<rect x="311.4" y="460.3" width="7.1" height="3" fill="#a80000"/>
<polyline points="289.9,447.7 289.9,444.7 301.8,444.7 304.8,447.7 307.8,444.7 319.7,444.7 319.7,447.7" fill="none" stroke="#000000" stroke-width="1" stroke-linecap="butt" stroke-linejoin="miter" />
<polyline points="289.9,460.7 289.9,463.7 319.7,463.7 319.7,460.7" fill="none" stroke="#000000" stroke-width="1" stroke-linecap="butt" stroke-linejoin="miter" />
<rect x="291.5" y="486.9" width="6.5" height="3" fill="#a80000"/>
<rect x="311.4" y="486.9" width="7.1" height="3" fill="#a80000"/>
<rect x="291.5" y="491.5" width="6.5" height="3" fill="#a80000"/>
<rect x="311.4" y="491.5" width="7.1" height="3" fill="#a80000"/>
<rect x="291.5" y="496.1" width="6.5" height="3" fill="#a80000"/>
<rect x="311.4" y="496.1" width="7.1" height="3" fill="#a80000"/>
<rect x="291.5" y="500.7" width="6.5" height="3" fill="#a80000"/>
<rect x="311.4" y="500.7" width="7.1" height="3" fill="#a80000"/>
<polyline points="289.9,488.7 289.9,485.7 301.8,485.7 304.8,488.7 307.8,485.7 319.7,485.7 319.7,488.7" fill="none" stroke="#000000" stroke-width="1" stroke-linecap="butt" stroke-linejoin="miter" />
<polyline points="289.9,501.7 289.9,504.7 319.7,504.7 319.7,501.7" fill="none" stroke="#000000" stroke-width="1" stroke-linecap="butt" stroke-linejoin="miter" />
<rect x="321.5" y="388.5" width="8" height="15" fill="none" stroke="#000000" stroke-width="1"/>
<rect x="322.7" y="389.2" width="5.6" height="5.5" fill="#a80000"/>
<rect x="322.7" y="396.5" width="5.6" height="5.5" fill="#a80000"/>
<rect x="321.5" y="407.5" width="8" height="14" fill="none" stroke="#000000" stroke-width="1"/>
<rect x="322.7" y="408.5" width="5.6" height="5.1" fill="#a80000"/>
<rect x="322.7" y="415.1" width="5.6" height="5.1" fill="#a80000"/>
<rect x="280.5" y="407.5" width="7" height="14" fill="none" stroke="#000000" stroke-width="1"/>
<rect x="281.7" y="408.5" width="4.7" height="5.1" fill="#a80000"/>
<rect x="281.7" y="415.1" width="4.7" height="5.1" fill="#a80000"/>
<rect x="343.5" y="385.5" width="15" height="7" fill="none" stroke="#000000" stroke-width="1"/>
<rect x="344.6" y="386.3" width="5.6" height="5.2" fill="#a80000"/>
<rect x="352.2" y="386.3" width="5.6" height="5.2" fill="#a80000"/>
<rect x="343.5" y="394.5" width="15" height="7" fill="none" stroke="#000000" stroke-width="1"/>
<rect x="344.6" y="395.6" width="5.6" height="5.2" fill="#a80000"/>
<rect x="352.2" y="395.6" width="5.6" height="5.2" fill="#a80000"/>
<rect x="343.5" y="403.5" width="15" height="7" fill="none" stroke="#000000" stroke-width="1"/>
<rect x="344.6" y="404.5" width="5.6" height="5.2" fill="#a80000"/>
<rect x="352.2" y="404.5" width="5.6" height="5.2" fill="#a80000"/>
<rect x="343.5" y="413.5" width="15" height="7" fill="none" stroke="#000000" stroke-width="1"/>
<rect x="344.6" y="414.1" width="5.6" height="5.2" fill="#a80000"/>
<rect x="352.2" y="414.1" width="5.6" height="5.2" fill="#a80000"/>
<rect x="290.5" y="417.5" width="15" height="7" fill="none" stroke="#000000" stroke-width="1"/>
<rect x="291.9" y="418.8" width="5.4" height="5" fill="#a80000"/>
<rect x="299" y="418.8" width="5.4" height="5" fill="#a80000"/>
<rect x="311.5" y="414.5" width="6" height="13" fill="none" stroke="#000000" stroke-width="1"/>
<rect x="308" y="415.9" width="4.6" height="2.4" fill="#a80000"/>
<rect x="308" y="423.8" width="4.6" height="2.3" fill="#a80000"/>
<rect x="316.2" y="419.5" width="4.3" height="2.7" fill="#a80000"/>
<rect x="281.5" y="434.5" width="14" height="7" fill="none" stroke="#000000" stroke-width="1"/>
<rect x="282.4" y="435.4" width="5.2" height="4.9" fill="#a80000"/>
<rect x="289.3" y="435.4" width="5.2" height="4.9" fill="#a80000"/>
<rect x="304.5" y="434.5" width="14" height="7" fill="none" stroke="#000000" stroke-width="1"/>
<rect x="305.2" y="435.4" width="5.4" height="4.9" fill="#a80000"/>
<rect x="312.3" y="435.4" width="5.4" height="4.9" fill="#a80000"/>
<rect x="322.5" y="430.5" width="14" height="15" fill="none" stroke="#000000" stroke-width="1"/>
<rect x="322.7" y="434.7" width="7" height="6.6" fill="#a80000"/>
<rect x="333.8" y="430.6" width="5" height="4.9" fill="#a80000"/>
<rect x="333.8" y="438.8" width="5" height="5" fill="#a80000"/>
<rect x="341.5" y="437.5" width="6" height="15" fill="none" stroke="#000000" stroke-width="1"/>
<rect x="342.3" y="438.9" width="4.6" height="5.2" fill="#a80000"/>
<rect x="342.3" y="445.7" width="4.6" height="5.2" fill="#a80000"/>
<rect x="350.5" y="437.5" width="7" height="15" fill="none" stroke="#000000" stroke-width="1"/>
<rect x="351.4" y="438.9" width="5.1" height="5.2" fill="#a80000"/>
<rect x="351.4" y="445.7" width="5.1" height="5.2" fill="#a80000"/>
<rect x="272.5" y="445.5" width="14" height="7" fill="none" stroke="#000000" stroke-width="1"/>
<rect x="273.2" y="446.5" width="5.2" height="5.3" fill="#a80000"/>
<rect x="280.1" y="446.5" width="5.2" height="5.3" fill="#a80000"/>
<rect x="272.5" y="454.5" width="14" height="8" fill="none" stroke="#000000" stroke-width="1"/>
<rect x="273.2" y="455.6" width="5.2" height="5.4" fill="#a80000"/>
<rect x="280.1" y="455.6" width="5.2" height="5.4" fill="#a80000"/>
<rect x="363.2" y="446" width="7.1" height="3" fill="#a80000"/>
<rect x="384.4" y="446" width="6.9" height="3" fill="#a80000"/>
<rect x="363.2" y="450.6" width="7.1" height="3" fill="#a80000"/>
<rect x="384.4" y="450.6" width="6.9" height="3" fill="#a80000"/>
<rect x="363.2" y="455.1" width="7.1" height="3" fill="#a80000"/>
<rect x="384.4" y="455.1" width="6.9" height="3" fill="#a80000"/>
<rect x="363.2" y="459.7" width="7.1" height="3" fill="#a80000"/>
<rect x="384.4" y="459.7" width="6.9" height="3" fill="#a80000"/>
<polyline points="361.5,447.7 361.5,444.7 374.1,444.7 377.1,447.7 380.1,444.7 392.7,444.7 392.7,447.7" fill="none" stroke="#000000" stroke-width="1" stroke-linecap="butt" stroke-linejoin="miter" />
<polyline points="361.5,460.7 361.5,463.7 392.7,463.7 392.7,460.7" fill="none" stroke="#000000" stroke-width="1" stroke-linecap="butt" stroke-linejoin="miter" />
<rect x="374.4" y="432.2" width="3.6" height="4.8" fill="#a80000"/>
<rect x="379.4" y="438.8" width="3.6" height="5.2" fill="#a80000"/>
<rect x="369" y="438.8" width="3.5" height="5.2" fill="#a80000"/>
<rect x="372.5" y="434.5" width="8" height="6" fill="none" stroke="#000000" stroke-width="1"/>
<rect x="396.5" y="437.5" width="8" height="15" fill="none" stroke="#000000" stroke-width="1"/>
<rect x="397.8" y="438.4" width="5.2" height="5.4" fill="#a80000"/>
<rect x="397.8" y="445.5" width="5.2" height="5.4" fill="#a80000"/>
<rect x="396.5" y="454.5" width="8" height="16" fill="none" stroke="#000000" stroke-width="1"/>
<rect x="397.8" y="456.2" width="5.2" height="5.5" fill="#a80000"/>
<rect x="397.8" y="463.6" width="5.2" height="5.5" fill="#a80000"/>
<rect x="406.5" y="454.5" width="6" height="16" fill="none" stroke="#000000" stroke-width="1"/>
<rect x="407" y="456.2" width="4.9" height="5.5" fill="#a80000"/>
<rect x="407" y="463.6" width="4.9" height="5.5" fill="#a80000"/>
<rect x="272.5" y="467.5" width="13" height="5" fill="none" stroke="#000000" stroke-width="1"/>
<rect x="273.5" y="472.2" width="4.5" height="4.3" fill="#a80000"/>
<rect x="281" y="472.2" width="4" height="4.3" fill="#a80000"/>
<rect x="277" y="463.5" width="4" height="4" fill="#a80000"/>
<rect x="270.5" y="478.5" width="8" height="16" fill="none" stroke="#000000" stroke-width="1"/>
<rect x="271.8" y="480.2" width="5.4" height="5.4" fill="#a80000"/>
<rect x="271.8" y="487.4" width="5.4" height="5.4" fill="#a80000"/>
<rect x="270.5" y="497.5" width="8" height="15" fill="none" stroke="#000000" stroke-width="1"/>
<rect x="271.8" y="498.5" width="5.4" height="5.4" fill="#a80000"/>
<rect x="271.8" y="505.6" width="5.4" height="5.4" fill="#a80000"/>
<rect x="280.5" y="478.5" width="7" height="16" fill="none" stroke="#000000" stroke-width="1"/>
<rect x="281.2" y="480.2" width="5.2" height="5.4" fill="#a80000"/>
<rect x="281.2" y="487.4" width="5.2" height="5.4" fill="#a80000"/>
<rect x="280.5" y="497.5" width="7" height="15" fill="none" stroke="#000000" stroke-width="1"/>
<rect x="281.2" y="498.5" width="5.2" height="5.4" fill="#a80000"/>
<rect x="281.2" y="505.6" width="5.2" height="5.4" fill="#a80000"/>
<rect x="297.5" y="467.5" width="15" height="7" fill="none" stroke="#000000" stroke-width="1"/>
<rect x="298.5" y="468.4" width="5.5" height="4.6" fill="#a80000"/>
<rect x="306" y="468.4" width="5.5" height="4.6" fill="#a80000"/>
<rect x="297.5" y="476.5" width="15" height="7" fill="none" stroke="#000000" stroke-width="1"/>
<rect x="298.5" y="477.6" width="5.5" height="4.6" fill="#a80000"/>
<rect x="306" y="477.6" width="5.5" height="4.6" fill="#a80000"/>
<rect x="321.5" y="457.5" width="8" height="15" fill="none" stroke="#000000" stroke-width="1"/>
<rect x="322.7" y="458.7" width="5.6" height="5.4" fill="#a80000"/>
<rect x="322.7" y="465.8" width="5.6" height="5.4" fill="#a80000"/>
<rect x="321.5" y="478.5" width="8" height="16" fill="none" stroke="#000000" stroke-width="1"/>
<rect x="322.7" y="480.2" width="5.6" height="5.4" fill="#a80000"/>
<rect x="322.7" y="487.4" width="5.6" height="5.4" fill="#a80000"/>
<rect x="332.5" y="480.5" width="6" height="12" fill="none" stroke="#000000" stroke-width="1"/>
<rect x="328.8" y="481.4" width="4.6" height="2.4" fill="#a80000"/>
<rect x="328.8" y="489.3" width="4.6" height="2.3" fill="#a80000"/>
<rect x="337" y="485" width="4.3" height="2.7" fill="#a80000"/>
<rect x="342.5" y="478.5" width="7" height="16" fill="none" stroke="#000000" stroke-width="1"/>
<rect x="343.4" y="480.2" width="5.2" height="5.4" fill="#a80000"/>
<rect x="343.4" y="487.4" width="5.2" height="5.4" fill="#a80000"/>
<rect x="352.5" y="478.5" width="7" height="16" fill="none" stroke="#000000" stroke-width="1"/>
<rect x="353" y="480.2" width="5.5" height="5.4" fill="#a80000"/>
<rect x="353" y="487.4" width="5.5" height="5.4" fill="#a80000"/>
<rect x="324.5" y="497.5" width="7" height="15" fill="none" stroke="#000000" stroke-width="1"/>
<rect x="325.7" y="498.5" width="4.9" height="5.4" fill="#a80000"/>
<rect x="325.7" y="505.6" width="4.9" height="5.4" fill="#a80000"/>
<rect x="333.5" y="497.5" width="7" height="15" fill="none" stroke="#000000" stroke-width="1"/>
<rect x="334.3" y="498.5" width="5.5" height="5.4" fill="#a80000"/>
<rect x="334.3" y="505.6" width="5.5" height="5.4" fill="#a80000"/>
<rect x="342.5" y="497.5" width="7" height="15" fill="none" stroke="#000000" stroke-width="1"/>
<rect x="343.4" y="498.5" width="5.2" height="5.4" fill="#a80000"/>
<rect x="343.4" y="505.6" width="5.2" height="5.4" fill="#a80000"/>
<rect x="352.5" y="497.5" width="7" height="15" fill="none" stroke="#000000" stroke-width="1"/>
<rect x="353" y="498.5" width="5.5" height="5.4" fill="#a80000"/>
<rect x="353" y="505.6" width="5.5" height="5.4" fill="#a80000"/>
<rect x="325.5" y="517.5" width="15" height="7" fill="none" stroke="#000000" stroke-width="1"/>
<rect x="326.7" y="518.7" width="5.4" height="5.3" fill="#a80000"/>
<rect x="333.8" y="518.7" width="5.4" height="5.3" fill="#a80000"/>
<path d="M323 521.5H326M324.5 520V523" stroke="#ff0000" stroke-width="1" fill="none"/>
<rect x="344.5" y="517.5" width="13" height="7" fill="none" stroke="#000000" stroke-width="1"/>
<rect x="346.2" y="523" width="3.3" height="5" fill="#a80000"/>
<rect x="353.2" y="523" width="3.3" height="5" fill="#a80000"/>
<rect x="349.6" y="515.5" width="3.4" height="3.9" fill="#a80000"/>
<rect x="361.5" y="466.5" width="15" height="8" fill="none" stroke="#000000" stroke-width="1"/>
<rect x="362.4" y="468" width="5.4" height="5" fill="#a80000"/>
<rect x="369.5" y="468" width="5.4" height="5" fill="#a80000"/>
<rect x="378.5" y="466.5" width="16" height="8" fill="none" stroke="#000000" stroke-width="1"/>
<rect x="379.8" y="468" width="5.5" height="5" fill="#a80000"/>
<rect x="387.3" y="468" width="5.5" height="5" fill="#a80000"/>
<polyline points="364.5,482 364.5,479 395.2,479 395.2,482" fill="none" stroke="#000000" stroke-width="1" stroke-linecap="butt" stroke-linejoin="miter" />
<polyline points="364.5,509 364.5,512.2 395.2,512.2 395.2,509" fill="none" stroke="#000000" stroke-width="1" stroke-linecap="butt" stroke-linejoin="miter" />
<rect x="366.1" y="480.9" width="7.2" height="3" fill="#a80000"/>
<rect x="366.1" y="485.3" width="7.2" height="3" fill="#a80000"/>
<rect x="366.1" y="489.7" width="7.2" height="3" fill="#a80000"/>
<rect x="366.1" y="494.2" width="7.2" height="3" fill="#a80000"/>
<rect x="366.1" y="498.6" width="7.2" height="3" fill="#a80000"/>
<rect x="366.1" y="503" width="7.2" height="3" fill="#a80000"/>
<rect x="366.1" y="507.4" width="7.2" height="3" fill="#a80000"/>
<rect x="386.4" y="480.7" width="7.1" height="7.5" fill="#a80000"/>
<rect x="386.4" y="490.7" width="7.1" height="5.8" fill="#a80000"/>
<rect x="386.4" y="498.6" width="7.1" height="3" fill="#a80000"/>
<rect x="386.4" y="503" width="7.1" height="3" fill="#a80000"/>
<rect x="386.4" y="507.4" width="7.1" height="3" fill="#a80000"/>
<rect x="398.5" y="476.5" width="13" height="19" fill="none" stroke="#000000" stroke-width="1"/>
<rect x="403" y="473.2" width="3.2" height="4.2" fill="#a80000"/>
<rect x="400" y="481.5" width="3.5" height="9.2" fill="#a80000"/>
<rect x="406.8" y="481.5" width="3.2" height="9.2" fill="#a80000"/>
<rect x="404" y="495.6" width="3" height="4.4" fill="#a80000"/>
<rect x="428.5" y="494.5" width="18" height="26" fill="none" stroke="#000000" stroke-width="1"/>
<rect x="420.8" y="497.3" width="7.9" height="4.1" fill="#a80000"/>
<rect x="420.8" y="504.8" width="7.9" height="5.8" fill="#a80000"/>
<rect x="420.8" y="514.4" width="7.9" height="4.4" fill="#a80000"/>
<polygon points="428.5,504.8 435.7,500.6 453,500.6 453,513.9 435.7,513.9 428.5,510.6" fill="#a80000"/>
<path d="M418 516.5H421M419.5 515V518" stroke="#0000ff" stroke-width="1" fill="none"/>
<rect x="521.5" y="494.5" width="19" height="26" fill="none" stroke="#000000" stroke-width="1"/>
<rect x="514.5" y="497.3" width="7.9" height="4.1" fill="#a80000"/>
<rect x="514.5" y="504.8" width="7.9" height="5.8" fill="#a80000"/>
<rect x="514.5" y="514.4" width="7.9" height="4.4" fill="#a80000"/>
<polygon points="522.2,504.8 529.4,500.6 546.7,500.6 546.7,513.9 529.4,513.9 522.2,510.6" fill="#a80000"/>
<path d="M511 516.5H514M512.5 515V518" stroke="#0000ff" stroke-width="1" fill="none"/>
<rect x="455.5" y="484.5" width="6" height="13" fill="none" stroke="#000000" stroke-width="1"/>
<rect x="452.2" y="489.8" width="4.8" height="3.2" fill="#a80000"/>
<rect x="460" y="485.7" width="5" height="3.3" fill="#a80000"/>
<rect x="460" y="492.8" width="5" height="3.2" fill="#a80000"/>
<circle cx="36.7" cy="93.4" r="9.6" fill="#909090" stroke="#0000ff" stroke-width="3.7" shape-rendering="geometricPrecision"/>
<circle cx="258.6" cy="93.4" r="9.6" fill="#909090" stroke="#0000ff" stroke-width="3.7" shape-rendering="geometricPrecision"/>
<circle cx="661.5" cy="93.1" r="9.6" fill="#909090" stroke="#0000ff" stroke-width="3.7" shape-rendering="geometricPrecision"/>
<circle cx="160.8" cy="153.3" r="9.6" fill="#909090" stroke="#0000ff" stroke-width="3.7" shape-rendering="geometricPrecision"/>
<circle cx="239.5" cy="153.3" r="9.6" fill="#909090" stroke="#0000ff" stroke-width="3.7" shape-rendering="geometricPrecision"/>
<circle cx="277.7" cy="153.3" r="9.6" fill="#909090" stroke="#0000ff" stroke-width="3.7" shape-rendering="geometricPrecision"/>
<circle cx="355.5" cy="153.3" r="9.6" fill="#909090" stroke="#0000ff" stroke-width="3.7" shape-rendering="geometricPrecision"/>
<circle cx="36.7" cy="530.5" r="9.6" fill="#909090" stroke="#0000ff" stroke-width="3.7" shape-rendering="geometricPrecision"/>
<circle cx="216.3" cy="530.5" r="9.6" fill="#909090" stroke="#0000ff" stroke-width="3.7" shape-rendering="geometricPrecision"/>
<circle cx="661.5" cy="530.5" r="9.6" fill="#909090" stroke="#0000ff" stroke-width="3.7" shape-rendering="geometricPrecision"/>
<circle cx="176.5" cy="193.7" r="2.6" fill="#a8a8a8" stroke="#c000c0" stroke-width="2.0" shape-rendering="geometricPrecision"/>
<circle cx="185.8" cy="193.7" r="2.6" fill="#a8a8a8" stroke="#c000c0" stroke-width="2.0" shape-rendering="geometricPrecision"/>
<circle cx="195.2" cy="193.7" r="2.6" fill="#a8a8a8" stroke="#0000ff" stroke-width="2.0" shape-rendering="geometricPrecision"/>
<circle cx="204.5" cy="193.7" r="2.6" fill="#a8a8a8" stroke="#c000c0" stroke-width="2.0" shape-rendering="geometricPrecision"/>
<circle cx="213.8" cy="193.7" r="2.6" fill="#a8a8a8" stroke="#ff0000" stroke-width="2.0" shape-rendering="geometricPrecision"/>
<circle cx="223.2" cy="193.7" r="2.6" fill="#a8a8a8" stroke="#c000c0" stroke-width="2.0" shape-rendering="geometricPrecision"/>
<circle cx="293.2" cy="193.7" r="2.6" fill="#a8a8a8" stroke="#c000c0" stroke-width="2.0" shape-rendering="geometricPrecision"/>
<circle cx="302.5" cy="193.7" r="2.6" fill="#a8a8a8" stroke="#c000c0" stroke-width="2.0" shape-rendering="geometricPrecision"/>
<circle cx="311.9" cy="193.7" r="2.6" fill="#a8a8a8" stroke="#0000ff" stroke-width="2.0" shape-rendering="geometricPrecision"/>
<circle cx="321.2" cy="193.7" r="2.6" fill="#a8a8a8" stroke="#c000c0" stroke-width="2.0" shape-rendering="geometricPrecision"/>
<circle cx="330.5" cy="193.7" r="2.6" fill="#a8a8a8" stroke="#ff0000" stroke-width="2.0" shape-rendering="geometricPrecision"/>
<circle cx="339.8" cy="193.7" r="2.6" fill="#a8a8a8" stroke="#c000c0" stroke-width="2.0" shape-rendering="geometricPrecision"/>
<circle cx="428.5" cy="116.6" r="2.6" fill="#a8a8a8" stroke="#0000ff" stroke-width="2.0" shape-rendering="geometricPrecision"/>
<circle cx="428.5" cy="130.5" r="2.6" fill="#a8a8a8" stroke="#c000c0" stroke-width="2.0" shape-rendering="geometricPrecision"/>
<rect x="424.9" y="141" width="7.2" height="7.2" fill="#ff0000"/><rect x="427.7" y="143.8" width="1.6" height="1.6" fill="#d8b0d8"/>
<circle cx="502.7" cy="116.6" r="2.6" fill="#a8a8a8" stroke="#0000ff" stroke-width="2.0" shape-rendering="geometricPrecision"/>
<circle cx="502.7" cy="130.5" r="2.6" fill="#a8a8a8" stroke="#c000c0" stroke-width="2.0" shape-rendering="geometricPrecision"/>
<rect x="499.1" y="141" width="7.2" height="7.2" fill="#ff0000"/><rect x="501.9" y="143.8" width="1.6" height="1.6" fill="#d8b0d8"/>
<circle cx="577.4" cy="116.6" r="2.6" fill="#a8a8a8" stroke="#c000c0" stroke-width="2.0" shape-rendering="geometricPrecision"/>
<circle cx="577.4" cy="130.5" r="2.6" fill="#a8a8a8" stroke="#c000c0" stroke-width="2.0" shape-rendering="geometricPrecision"/>
<circle cx="577.4" cy="144.6" r="2.6" fill="#a8a8a8" stroke="#ff0000" stroke-width="2.0" shape-rendering="geometricPrecision"/>
<rect x="573.8" y="155" width="7.2" height="7.2" fill="#c000c0"/><rect x="576.6" y="157.8" width="1.6" height="1.6" fill="#d8b0d8"/>
<circle cx="651.5" cy="116.6" r="2.6" fill="#a8a8a8" stroke="#c000c0" stroke-width="2.0" shape-rendering="geometricPrecision"/>
<circle cx="651.5" cy="130.5" r="2.6" fill="#a8a8a8" stroke="#c000c0" stroke-width="2.0" shape-rendering="geometricPrecision"/>
<circle cx="651.5" cy="144.6" r="2.6" fill="#a8a8a8" stroke="#ff0000" stroke-width="2.0" shape-rendering="geometricPrecision"/>
<rect x="647.9" y="155" width="7.2" height="7.2" fill="#c000c0"/><rect x="650.7" y="157.8" width="1.6" height="1.6" fill="#d8b0d8"/>
<circle cx="428.5" cy="200.3" r="2.6" fill="#a8a8a8" stroke="#0000ff" stroke-width="2.0" shape-rendering="geometricPrecision"/>
<rect x="424.9" y="210.8" width="7.2" height="7.2" fill="#c000c0"/><rect x="427.7" y="213.6" width="1.6" height="1.6" fill="#d8b0d8"/>
<circle cx="502.7" cy="200.3" r="2.6" fill="#a8a8a8" stroke="#c000c0" stroke-width="2.0" shape-rendering="geometricPrecision"/>
<rect x="499.1" y="210.8" width="7.2" height="7.2" fill="#c000c0"/><rect x="501.9" y="213.6" width="1.6" height="1.6" fill="#d8b0d8"/>
<circle cx="81.6" cy="211.4" r="2.6" fill="#a8a8a8" stroke="#c000c0" stroke-width="2.0" shape-rendering="geometricPrecision"/>
<rect x="78" y="222" width="7.2" height="7.2" fill="#0000ff"/><rect x="80.8" y="224.8" width="1.6" height="1.6" fill="#d8b0d8"/>
<circle cx="130.5" cy="211.4" r="2.6" fill="#a8a8a8" stroke="#c000c0" stroke-width="2.0" shape-rendering="geometricPrecision"/>
<rect x="126.9" y="222" width="7.2" height="7.2" fill="#c000c0"/><rect x="129.7" y="224.8" width="1.6" height="1.6" fill="#d8b0d8"/>
<circle cx="81.4" cy="253.6" r="3.3" fill="#909090" stroke="#ff0000" stroke-width="1.3" shape-rendering="geometricPrecision"/>
<circle cx="81.4" cy="267.4" r="3.3" fill="#909090" stroke="#c000c0" stroke-width="1.3" shape-rendering="geometricPrecision"/>
<circle cx="81.4" cy="281.5" r="3.3" fill="#909090" stroke="#c000c0" stroke-width="1.3" shape-rendering="geometricPrecision"/>
<circle cx="81.4" cy="295.2" r="3.3" fill="#909090" stroke="#c000c0" stroke-width="1.3" shape-rendering="geometricPrecision"/>
<rect x="78.4" y="306.6" width="6" height="6" fill="#909090" stroke="#0000ff" stroke-width="1.3"/>
<circle cx="185.3" cy="316.6" r="3.3" fill="#909090" stroke="#c000c0" stroke-width="1.3" shape-rendering="geometricPrecision"/>
<circle cx="185.3" cy="330.7" r="3.3" fill="#909090" stroke="#c000c0" stroke-width="1.3" shape-rendering="geometricPrecision"/>
<circle cx="185.3" cy="344" r="3.3" fill="#909090" stroke="#c000c0" stroke-width="1.3" shape-rendering="geometricPrecision"/>
<rect x="182.3" y="355.5" width="6" height="6" fill="#909090" stroke="#0000ff" stroke-width="1.3"/>
<circle cx="259.5" cy="266.5" r="4.3" fill="#909090" stroke="#c000c0" stroke-width="1.5" shape-rendering="geometricPrecision"/>
<circle cx="250.3" cy="279.5" r="4" fill="#909090" stroke="#c000c0" stroke-width="1.5" shape-rendering="geometricPrecision"/>
<circle cx="268.6" cy="279.5" r="4" fill="#909090" stroke="#ff0000" stroke-width="1.5" shape-rendering="geometricPrecision"/>
<circle cx="259.5" cy="288.4" r="4" fill="#909090" stroke="#0000ff" stroke-width="1.5" shape-rendering="geometricPrecision"/>
<circle cx="85.6" cy="342.4" r="2.8" fill="#909090" stroke="#c000c0" stroke-width="1.5" shape-rendering="geometricPrecision"/>
<circle cx="118.4" cy="342.4" r="2.8" fill="#909090" stroke="#c000c0" stroke-width="1.5" shape-rendering="geometricPrecision"/>
<circle cx="85.6" cy="374.2" r="2.8" fill="#909090" stroke="#c000c0" stroke-width="1.5" shape-rendering="geometricPrecision"/>
<circle cx="102.7" cy="374.2" r="2.8" fill="#909090" stroke="#c000c0" stroke-width="1.5" shape-rendering="geometricPrecision"/>
<circle cx="118.4" cy="374.2" r="2.8" fill="#909090" stroke="#c000c0" stroke-width="1.5" shape-rendering="geometricPrecision"/>
<circle cx="85.6" cy="419.4" r="2.8" fill="#909090" stroke="#c000c0" stroke-width="1.5" shape-rendering="geometricPrecision"/>
<circle cx="104.3" cy="419.4" r="2.8" fill="#909090" stroke="#c000c0" stroke-width="1.5" shape-rendering="geometricPrecision"/>
<circle cx="55.4" cy="458.4" r="3.1" fill="none" stroke="#0000ff" stroke-width="1.2" shape-rendering="geometricPrecision"/>
<circle cx="74.5" cy="458.4" r="3.1" fill="none" stroke="#c000c0" stroke-width="1.2" shape-rendering="geometricPrecision"/>
<circle cx="92.4" cy="458.4" r="3.1" fill="none" stroke="#c000c0" stroke-width="1.2" shape-rendering="geometricPrecision"/>
<circle cx="120.6" cy="458.4" r="3.1" fill="none" stroke="#ff0000" stroke-width="1.2" shape-rendering="geometricPrecision"/>
<circle cx="55.4" cy="486.2" r="3.1" fill="none" stroke="#c000c0" stroke-width="1.2" shape-rendering="geometricPrecision"/>
<circle cx="74.5" cy="486.2" r="3.1" fill="none" stroke="#0000ff" stroke-width="1.2" shape-rendering="geometricPrecision"/>
<circle cx="92.4" cy="486.2" r="3.1" fill="none" stroke="#c000c0" stroke-width="1.2" shape-rendering="geometricPrecision"/>
<circle cx="120.6" cy="486.2" r="3.1" fill="none" stroke="#c000c0" stroke-width="1.2" shape-rendering="geometricPrecision"/>
<circle cx="176.5" cy="412.5" r="2.2" fill="#909090" stroke="#c000c0" stroke-width="1.4" shape-rendering="geometricPrecision"/>
<circle cx="255.6" cy="412.5" r="2.2" fill="#909090" stroke="#c000c0" stroke-width="1.4" shape-rendering="geometricPrecision"/>
<circle cx="176.5" cy="421.8" r="2.2" fill="#909090" stroke="#0000ff" stroke-width="1.4" shape-rendering="geometricPrecision"/>
<circle cx="255.6" cy="421.8" r="2.2" fill="#909090" stroke="#0000ff" stroke-width="1.4" shape-rendering="geometricPrecision"/>
<circle cx="176.5" cy="431" r="2.2" fill="#909090" stroke="#0000ff" stroke-width="1.4" shape-rendering="geometricPrecision"/>
<circle cx="255.6" cy="431" r="2.2" fill="#909090" stroke="#0000ff" stroke-width="1.4" shape-rendering="geometricPrecision"/>
<circle cx="176.5" cy="440.3" r="2.2" fill="#909090" stroke="#0000ff" stroke-width="1.4" shape-rendering="geometricPrecision"/>
<circle cx="255.6" cy="440.3" r="2.2" fill="#909090" stroke="#0000ff" stroke-width="1.4" shape-rendering="geometricPrecision"/>
<circle cx="176.5" cy="449.6" r="2.2" fill="#909090" stroke="#0000ff" stroke-width="1.4" shape-rendering="geometricPrecision"/>
<circle cx="255.6" cy="449.6" r="2.2" fill="#909090" stroke="#0000ff" stroke-width="1.4" shape-rendering="geometricPrecision"/>
<circle cx="176.5" cy="458.9" r="2.2" fill="#909090" stroke="#c000c0" stroke-width="1.4" shape-rendering="geometricPrecision"/>
<circle cx="255.6" cy="458.9" r="2.2" fill="#909090" stroke="#c000c0" stroke-width="1.4" shape-rendering="geometricPrecision"/>
<circle cx="176.5" cy="468.1" r="2.2" fill="#909090" stroke="#0000ff" stroke-width="1.4" shape-rendering="geometricPrecision"/>
<circle cx="255.6" cy="468.1" r="2.2" fill="#909090" stroke="#0000ff" stroke-width="1.4" shape-rendering="geometricPrecision"/>
<circle cx="176.5" cy="477.4" r="2.2" fill="#909090" stroke="#c000c0" stroke-width="1.4" shape-rendering="geometricPrecision"/>
<circle cx="255.6" cy="477.4" r="2.2" fill="#909090" stroke="#0000ff" stroke-width="1.4" shape-rendering="geometricPrecision"/>
<circle cx="176.5" cy="486.7" r="2.2" fill="#909090" stroke="#0000ff" stroke-width="1.4" shape-rendering="geometricPrecision"/>
<circle cx="255.6" cy="486.7" r="2.2" fill="#909090" stroke="#0000ff" stroke-width="1.4" shape-rendering="geometricPrecision"/>
<circle cx="176.5" cy="495.9" r="2.2" fill="#909090" stroke="#0000ff" stroke-width="1.4" shape-rendering="geometricPrecision"/>
<circle cx="255.6" cy="495.9" r="2.2" fill="#909090" stroke="#0000ff" stroke-width="1.4" shape-rendering="geometricPrecision"/>
<circle cx="176.5" cy="505.2" r="2.2" fill="#909090" stroke="#0000ff" stroke-width="1.4" shape-rendering="geometricPrecision"/>
<circle cx="255.6" cy="505.2" r="2.2" fill="#909090" stroke="#0000ff" stroke-width="1.4" shape-rendering="geometricPrecision"/>
<rect x="173.5" y="511.4" width="6" height="6" fill="#0000ff"/>
<rect x="175.5" y="513.4" width="2" height="2" fill="#b0b0ff"/>
<rect x="252.6" y="511.4" width="6" height="6" fill="#0000ff"/>
<rect x="254.6" y="513.4" width="2" height="2" fill="#b0b0ff"/>
<circle cx="539.5" cy="183.2" r="2.6" fill="#a8a8a8" stroke="#c000c0" stroke-width="2.0" shape-rendering="geometricPrecision"/>
<circle cx="539.5" cy="197.6" r="2.6" fill="#a8a8a8" stroke="#0000ff" stroke-width="2.0" shape-rendering="geometricPrecision"/>
<circle cx="539.5" cy="221.7" r="2.6" fill="#a8a8a8" stroke="#c000c0" stroke-width="2.0" shape-rendering="geometricPrecision"/>
<circle cx="539.5" cy="235.5" r="2.6" fill="#a8a8a8" stroke="#0000ff" stroke-width="2.0" shape-rendering="geometricPrecision"/>
<circle cx="577.3" cy="200.3" r="2.6" fill="#a8a8a8" stroke="#c000c0" stroke-width="2.0" shape-rendering="geometricPrecision"/>
<rect x="573.7" y="210.8" width="7.2" height="7.2" fill="#c000c0"/><rect x="576.5" y="213.6" width="1.6" height="1.6" fill="#d8b0d8"/>
<circle cx="651.6" cy="200.3" r="2.6" fill="#a8a8a8" stroke="#c000c0" stroke-width="2.0" shape-rendering="geometricPrecision"/>
<rect x="648" y="210.8" width="7.2" height="7.2" fill="#c000c0"/><rect x="650.8" y="213.6" width="1.6" height="1.6" fill="#d8b0d8"/>
<circle cx="577.3" cy="242.3" r="2.6" fill="#a8a8a8" stroke="#c000c0" stroke-width="2.0" shape-rendering="geometricPrecision"/>
<rect x="573.7" y="252.8" width="7.2" height="7.2" fill="#c000c0"/><rect x="576.5" y="255.6" width="1.6" height="1.6" fill="#d8b0d8"/>
<circle cx="651.6" cy="242.3" r="2.6" fill="#a8a8a8" stroke="#c000c0" stroke-width="2.0" shape-rendering="geometricPrecision"/>
<rect x="648" y="252.8" width="7.2" height="7.2" fill="#c000c0"/><rect x="650.8" y="255.6" width="1.6" height="1.6" fill="#d8b0d8"/>
<circle cx="577.3" cy="284.3" r="2.6" fill="#a8a8a8" stroke="#c000c0" stroke-width="2.0" shape-rendering="geometricPrecision"/>
<rect x="573.7" y="294.8" width="7.2" height="7.2" fill="#c000c0"/><rect x="576.5" y="297.6" width="1.6" height="1.6" fill="#d8b0d8"/>
<circle cx="651.6" cy="284.3" r="2.6" fill="#a8a8a8" stroke="#c000c0" stroke-width="2.0" shape-rendering="geometricPrecision"/>
<rect x="648" y="294.8" width="7.2" height="7.2" fill="#c000c0"/><rect x="650.8" y="297.6" width="1.6" height="1.6" fill="#d8b0d8"/>
<circle cx="577.3" cy="326.3" r="2.6" fill="#a8a8a8" stroke="#c000c0" stroke-width="2.0" shape-rendering="geometricPrecision"/>
<rect x="573.7" y="336.8" width="7.2" height="7.2" fill="#c000c0"/><rect x="576.5" y="339.6" width="1.6" height="1.6" fill="#d8b0d8"/>
<circle cx="651.6" cy="326.3" r="2.6" fill="#a8a8a8" stroke="#c000c0" stroke-width="2.0" shape-rendering="geometricPrecision"/>
<rect x="648" y="336.8" width="7.2" height="7.2" fill="#c000c0"/><rect x="650.8" y="339.6" width="1.6" height="1.6" fill="#d8b0d8"/>
<circle cx="577.3" cy="368.3" r="2.6" fill="#a8a8a8" stroke="#c000c0" stroke-width="2.0" shape-rendering="geometricPrecision"/>
<rect x="573.7" y="378.8" width="7.2" height="7.2" fill="#c000c0"/><rect x="576.5" y="381.6" width="1.6" height="1.6" fill="#d8b0d8"/>
<circle cx="651.6" cy="368.3" r="2.6" fill="#a8a8a8" stroke="#c000c0" stroke-width="2.0" shape-rendering="geometricPrecision"/>
<rect x="648" y="378.8" width="7.2" height="7.2" fill="#c000c0"/><rect x="650.8" y="381.6" width="1.6" height="1.6" fill="#d8b0d8"/>
<circle cx="577.3" cy="410.3" r="2.6" fill="#a8a8a8" stroke="#c000c0" stroke-width="2.0" shape-rendering="geometricPrecision"/>
<rect x="573.7" y="420.8" width="7.2" height="7.2" fill="#c000c0"/><rect x="576.5" y="423.6" width="1.6" height="1.6" fill="#d8b0d8"/>
<circle cx="651.6" cy="410.3" r="2.6" fill="#a8a8a8" stroke="#c000c0" stroke-width="2.0" shape-rendering="geometricPrecision"/>
<rect x="648" y="420.8" width="7.2" height="7.2" fill="#c000c0"/><rect x="650.8" y="423.6" width="1.6" height="1.6" fill="#d8b0d8"/>
<circle cx="577.3" cy="452.3" r="2.6" fill="#a8a8a8" stroke="#c000c0" stroke-width="2.0" shape-rendering="geometricPrecision"/>
<rect x="573.7" y="462.8" width="7.2" height="7.2" fill="#c000c0"/><rect x="576.5" y="465.6" width="1.6" height="1.6" fill="#d8b0d8"/>
<circle cx="651.6" cy="452.3" r="2.6" fill="#a8a8a8" stroke="#c000c0" stroke-width="2.0" shape-rendering="geometricPrecision"/>
<rect x="648" y="462.8" width="7.2" height="7.2" fill="#c000c0"/><rect x="650.8" y="465.6" width="1.6" height="1.6" fill="#d8b0d8"/>
<circle cx="577.3" cy="494.3" r="2.6" fill="#a8a8a8" stroke="#c000c0" stroke-width="2.0" shape-rendering="geometricPrecision"/>
<rect x="573.7" y="504.8" width="7.2" height="7.2" fill="#c000c0"/><rect x="576.5" y="507.6" width="1.6" height="1.6" fill="#d8b0d8"/>
<circle cx="651.6" cy="494.3" r="2.6" fill="#a8a8a8" stroke="#c000c0" stroke-width="2.0" shape-rendering="geometricPrecision"/>
<rect x="648" y="504.8" width="7.2" height="7.2" fill="#c000c0"/><rect x="650.8" y="507.6" width="1.6" height="1.6" fill="#d8b0d8"/>
<rect x="597.9" y="192.7" width="5.2" height="5.2" fill="#c000c0"/>
<rect x="599.7" y="194.5" width="1.6" height="1.6" fill="#d8b0d8"/>
<circle cx="628.3" cy="195.3" r="2.1" fill="#909090" stroke="#c000c0" stroke-width="1.4" shape-rendering="geometricPrecision"/>
<circle cx="600.5" cy="204.6" r="2.1" fill="#909090" stroke="#c000c0" stroke-width="1.4" shape-rendering="geometricPrecision"/>
<circle cx="628.3" cy="204.6" r="2.1" fill="#909090" stroke="#c000c0" stroke-width="1.4" shape-rendering="geometricPrecision"/>
<circle cx="600.5" cy="214" r="2.1" fill="#909090" stroke="#c000c0" stroke-width="1.4" shape-rendering="geometricPrecision"/>
<circle cx="628.3" cy="214" r="2.1" fill="#909090" stroke="#c000c0" stroke-width="1.4" shape-rendering="geometricPrecision"/>
<circle cx="600.5" cy="223.3" r="2.1" fill="#909090" stroke="#c000c0" stroke-width="1.4" shape-rendering="geometricPrecision"/>
<circle cx="628.3" cy="223.3" r="2.1" fill="#909090" stroke="#c000c0" stroke-width="1.4" shape-rendering="geometricPrecision"/>
<circle cx="600.5" cy="232.6" r="2.1" fill="#909090" stroke="#c000c0" stroke-width="1.4" shape-rendering="geometricPrecision"/>
<circle cx="628.3" cy="232.6" r="2.1" fill="#909090" stroke="#c000c0" stroke-width="1.4" shape-rendering="geometricPrecision"/>
<circle cx="600.5" cy="242" r="2.1" fill="#909090" stroke="#c000c0" stroke-width="1.4" shape-rendering="geometricPrecision"/>
<circle cx="628.3" cy="242" r="2.1" fill="#909090" stroke="#c000c0" stroke-width="1.4" shape-rendering="geometricPrecision"/>
<circle cx="600.5" cy="251.3" r="2.1" fill="#909090" stroke="#c000c0" stroke-width="1.4" shape-rendering="geometricPrecision"/>
<circle cx="628.3" cy="251.3" r="2.1" fill="#909090" stroke="#c000c0" stroke-width="1.4" shape-rendering="geometricPrecision"/>
<circle cx="600.5" cy="260.6" r="2.1" fill="#909090" stroke="#c000c0" stroke-width="1.4" shape-rendering="geometricPrecision"/>
<circle cx="628.3" cy="260.6" r="2.1" fill="#909090" stroke="#c000c0" stroke-width="1.4" shape-rendering="geometricPrecision"/>
<rect x="597.9" y="276.7" width="5.2" height="5.2" fill="#c000c0"/>
<rect x="599.7" y="278.5" width="1.6" height="1.6" fill="#d8b0d8"/>
<circle cx="628.3" cy="279.3" r="2.1" fill="#909090" stroke="#c000c0" stroke-width="1.4" shape-rendering="geometricPrecision"/>
<circle cx="600.5" cy="288.6" r="2.1" fill="#909090" stroke="#c000c0" stroke-width="1.4" shape-rendering="geometricPrecision"/>
<circle cx="628.3" cy="288.6" r="2.1" fill="#909090" stroke="#c000c0" stroke-width="1.4" shape-rendering="geometricPrecision"/>
<circle cx="600.5" cy="298" r="2.1" fill="#909090" stroke="#c000c0" stroke-width="1.4" shape-rendering="geometricPrecision"/>
<circle cx="628.3" cy="298" r="2.1" fill="#909090" stroke="#c000c0" stroke-width="1.4" shape-rendering="geometricPrecision"/>
<circle cx="600.5" cy="307.3" r="2.1" fill="#909090" stroke="#c000c0" stroke-width="1.4" shape-rendering="geometricPrecision"/>
<circle cx="628.3" cy="307.3" r="2.1" fill="#909090" stroke="#c000c0" stroke-width="1.4" shape-rendering="geometricPrecision"/>
<circle cx="600.5" cy="316.6" r="2.1" fill="#909090" stroke="#c000c0" stroke-width="1.4" shape-rendering="geometricPrecision"/>
<circle cx="628.3" cy="316.6" r="2.1" fill="#909090" stroke="#c000c0" stroke-width="1.4" shape-rendering="geometricPrecision"/>
<circle cx="600.5" cy="325.9" r="2.1" fill="#909090" stroke="#c000c0" stroke-width="1.4" shape-rendering="geometricPrecision"/>
<circle cx="628.3" cy="325.9" r="2.1" fill="#909090" stroke="#c000c0" stroke-width="1.4" shape-rendering="geometricPrecision"/>
<circle cx="600.5" cy="335.3" r="2.1" fill="#909090" stroke="#c000c0" stroke-width="1.4" shape-rendering="geometricPrecision"/>
<circle cx="628.3" cy="335.3" r="2.1" fill="#909090" stroke="#c000c0" stroke-width="1.4" shape-rendering="geometricPrecision"/>
<circle cx="600.5" cy="344.6" r="2.1" fill="#909090" stroke="#c000c0" stroke-width="1.4" shape-rendering="geometricPrecision"/>
<circle cx="628.3" cy="344.6" r="2.1" fill="#909090" stroke="#c000c0" stroke-width="1.4" shape-rendering="geometricPrecision"/>
<rect x="597.9" y="360.7" width="5.2" height="5.2" fill="#c000c0"/>
<rect x="599.7" y="362.5" width="1.6" height="1.6" fill="#d8b0d8"/>
<circle cx="628.3" cy="363.3" r="2.1" fill="#909090" stroke="#c000c0" stroke-width="1.4" shape-rendering="geometricPrecision"/>
<circle cx="600.5" cy="372.6" r="2.1" fill="#909090" stroke="#c000c0" stroke-width="1.4" shape-rendering="geometricPrecision"/>
<circle cx="628.3" cy="372.6" r="2.1" fill="#909090" stroke="#c000c0" stroke-width="1.4" shape-rendering="geometricPrecision"/>
<circle cx="600.5" cy="382" r="2.1" fill="#909090" stroke="#c000c0" stroke-width="1.4" shape-rendering="geometricPrecision"/>
<circle cx="628.3" cy="382" r="2.1" fill="#909090" stroke="#c000c0" stroke-width="1.4" shape-rendering="geometricPrecision"/>
<circle cx="600.5" cy="391.3" r="2.1" fill="#909090" stroke="#c000c0" stroke-width="1.4" shape-rendering="geometricPrecision"/>
<circle cx="628.3" cy="391.3" r="2.1" fill="#909090" stroke="#c000c0" stroke-width="1.4" shape-rendering="geometricPrecision"/>
<circle cx="600.5" cy="400.6" r="2.1" fill="#909090" stroke="#c000c0" stroke-width="1.4" shape-rendering="geometricPrecision"/>
<circle cx="628.3" cy="400.6" r="2.1" fill="#909090" stroke="#c000c0" stroke-width="1.4" shape-rendering="geometricPrecision"/>
<circle cx="600.5" cy="409.9" r="2.1" fill="#909090" stroke="#c000c0" stroke-width="1.4" shape-rendering="geometricPrecision"/>
<circle cx="628.3" cy="409.9" r="2.1" fill="#909090" stroke="#c000c0" stroke-width="1.4" shape-rendering="geometricPrecision"/>
<circle cx="600.5" cy="419.3" r="2.1" fill="#909090" stroke="#c000c0" stroke-width="1.4" shape-rendering="geometricPrecision"/>
<circle cx="628.3" cy="419.3" r="2.1" fill="#909090" stroke="#c000c0" stroke-width="1.4" shape-rendering="geometricPrecision"/>
<circle cx="600.5" cy="428.6" r="2.1" fill="#909090" stroke="#c000c0" stroke-width="1.4" shape-rendering="geometricPrecision"/>
<circle cx="628.3" cy="428.6" r="2.1" fill="#909090" stroke="#c000c0" stroke-width="1.4" shape-rendering="geometricPrecision"/>
<rect x="597.9" y="444.7" width="5.2" height="5.2" fill="#c000c0"/>
<rect x="599.7" y="446.5" width="1.6" height="1.6" fill="#d8b0d8"/>
<circle cx="628.3" cy="447.3" r="2.1" fill="#909090" stroke="#c000c0" stroke-width="1.4" shape-rendering="geometricPrecision"/>
<circle cx="600.5" cy="456.6" r="2.1" fill="#909090" stroke="#c000c0" stroke-width="1.4" shape-rendering="geometricPrecision"/>
<circle cx="628.3" cy="456.6" r="2.1" fill="#909090" stroke="#c000c0" stroke-width="1.4" shape-rendering="geometricPrecision"/>
<circle cx="600.5" cy="466" r="2.1" fill="#909090" stroke="#c000c0" stroke-width="1.4" shape-rendering="geometricPrecision"/>
<circle cx="628.3" cy="466" r="2.1" fill="#909090" stroke="#c000c0" stroke-width="1.4" shape-rendering="geometricPrecision"/>
<circle cx="600.5" cy="475.3" r="2.1" fill="#909090" stroke="#c000c0" stroke-width="1.4" shape-rendering="geometricPrecision"/>
<circle cx="628.3" cy="475.3" r="2.1" fill="#909090" stroke="#c000c0" stroke-width="1.4" shape-rendering="geometricPrecision"/>
<circle cx="600.5" cy="484.6" r="2.1" fill="#909090" stroke="#c000c0" stroke-width="1.4" shape-rendering="geometricPrecision"/>
<circle cx="628.3" cy="484.6" r="2.1" fill="#909090" stroke="#c000c0" stroke-width="1.4" shape-rendering="geometricPrecision"/>
<circle cx="600.5" cy="493.9" r="2.1" fill="#909090" stroke="#c000c0" stroke-width="1.4" shape-rendering="geometricPrecision"/>
<circle cx="628.3" cy="493.9" r="2.1" fill="#909090" stroke="#c000c0" stroke-width="1.4" shape-rendering="geometricPrecision"/>
<circle cx="600.5" cy="503.3" r="2.1" fill="#909090" stroke="#c000c0" stroke-width="1.4" shape-rendering="geometricPrecision"/>
<circle cx="628.3" cy="503.3" r="2.1" fill="#909090" stroke="#c000c0" stroke-width="1.4" shape-rendering="geometricPrecision"/>
<circle cx="600.5" cy="512.6" r="2.1" fill="#909090" stroke="#c000c0" stroke-width="1.4" shape-rendering="geometricPrecision"/>
<circle cx="628.3" cy="512.6" r="2.1" fill="#909090" stroke="#c000c0" stroke-width="1.4" shape-rendering="geometricPrecision"/>
<circle cx="456.3" cy="218.4" r="2.2" fill="#909090" stroke="#c000c0" stroke-width="1.4" shape-rendering="geometricPrecision"/>
<circle cx="465.4" cy="218.4" r="2.2" fill="#909090" stroke="#c000c0" stroke-width="1.4" shape-rendering="geometricPrecision"/>
<rect x="471.7" y="215.8" width="5.2" height="5.2" fill="#c000c0"/>
<path d="M473 235.5H476M474.5 234V237" stroke="#c000c0" stroke-width="1" fill="none"/>
<path d="M485 181.5H488M486.5 180V183" stroke="#c000c0" stroke-width="1" fill="none"/>
<circle cx="488.4" cy="365.3" r="2.2" fill="#909090" stroke="#c000c0" stroke-width="1.3" shape-rendering="geometricPrecision"/>
<rect x="486.1" y="372.1" width="4.6" height="4.6" fill="#909090" stroke="#c000c0" stroke-width="1.3"/>
<circle cx="497.7" cy="365.3" r="2.2" fill="#909090" stroke="#c000c0" stroke-width="1.3" shape-rendering="geometricPrecision"/>
<circle cx="497.7" cy="374.4" r="2.2" fill="#909090" stroke="#c000c0" stroke-width="1.3" shape-rendering="geometricPrecision"/>
<circle cx="507" cy="365.3" r="2.2" fill="#909090" stroke="#c000c0" stroke-width="1.3" shape-rendering="geometricPrecision"/>
<circle cx="507" cy="374.4" r="2.2" fill="#909090" stroke="#c000c0" stroke-width="1.3" shape-rendering="geometricPrecision"/>
<circle cx="516.2" cy="365.3" r="2.2" fill="#909090" stroke="#c000c0" stroke-width="1.3" shape-rendering="geometricPrecision"/>
<circle cx="516.2" cy="374.4" r="2.2" fill="#909090" stroke="#c000c0" stroke-width="1.3" shape-rendering="geometricPrecision"/>
<circle cx="525.5" cy="365.3" r="2.2" fill="#909090" stroke="#c000c0" stroke-width="1.3" shape-rendering="geometricPrecision"/>
<circle cx="525.5" cy="374.4" r="2.2" fill="#909090" stroke="#0000ff" stroke-width="1.3" shape-rendering="geometricPrecision"/>
<circle cx="484.2" cy="493.5" r="3" fill="#909090" stroke="#c000c0" stroke-width="1.2" shape-rendering="geometricPrecision"/>
<rect x="481.2" y="504.7" width="6" height="6" fill="#909090" stroke="#c000c0" stroke-width="1.2"/>
<circle cx="332.7" cy="281.5" r="2" fill="#909090" stroke="#ffff00" stroke-width="1.25" shape-rendering="geometricPrecision"/>
<circle cx="342.1" cy="281.5" r="2" fill="#909090" stroke="#ffff00" stroke-width="1.25" shape-rendering="geometricPrecision"/>
<circle cx="351.4" cy="281.5" r="2" fill="#909090" stroke="#ffff00" stroke-width="1.25" shape-rendering="geometricPrecision"/>
<circle cx="360.7" cy="281.5" r="2" fill="#909090" stroke="#ffff00" stroke-width="1.25" shape-rendering="geometricPrecision"/>
<circle cx="370" cy="281.5" r="2" fill="#909090" stroke="#ffff00" stroke-width="1.25" shape-rendering="geometricPrecision"/>
<circle cx="379.4" cy="281.5" r="2" fill="#909090" stroke="#ffff00" stroke-width="1.25" shape-rendering="geometricPrecision"/>
<circle cx="323.4" cy="290.8" r="2" fill="#909090" stroke="#ffff00" stroke-width="1.25" shape-rendering="geometricPrecision"/>
<circle cx="332.7" cy="290.8" r="2" fill="#909090" stroke="#ffff00" stroke-width="1.25" shape-rendering="geometricPrecision"/>
<circle cx="342.1" cy="290.8" r="2" fill="#909090" stroke="#ffff00" stroke-width="1.25" shape-rendering="geometricPrecision"/>
<circle cx="351.4" cy="290.8" r="2" fill="#909090" stroke="#ffff00" stroke-width="1.25" shape-rendering="geometricPrecision"/>
<circle cx="360.7" cy="290.8" r="2" fill="#909090" stroke="#ffff00" stroke-width="1.25" shape-rendering="geometricPrecision"/>
<circle cx="370" cy="290.8" r="2" fill="#909090" stroke="#ffff00" stroke-width="1.25" shape-rendering="geometricPrecision"/>
<circle cx="379.4" cy="290.8" r="2" fill="#909090" stroke="#ffff00" stroke-width="1.25" shape-rendering="geometricPrecision"/>
<circle cx="388.7" cy="290.8" r="2" fill="#909090" stroke="#ffff00" stroke-width="1.25" shape-rendering="geometricPrecision"/>
<circle cx="323.4" cy="300.2" r="2" fill="#909090" stroke="#ffff00" stroke-width="1.25" shape-rendering="geometricPrecision"/>
<circle cx="332.7" cy="300.2" r="2" fill="#909090" stroke="#ffff00" stroke-width="1.25" shape-rendering="geometricPrecision"/>
<circle cx="379.4" cy="300.2" r="2" fill="#909090" stroke="#ffff00" stroke-width="1.25" shape-rendering="geometricPrecision"/>
<circle cx="388.7" cy="300.2" r="2" fill="#909090" stroke="#ffff00" stroke-width="1.25" shape-rendering="geometricPrecision"/>
<circle cx="323.4" cy="309.5" r="2" fill="#909090" stroke="#ffff00" stroke-width="1.25" shape-rendering="geometricPrecision"/>
<circle cx="332.7" cy="309.5" r="2" fill="#909090" stroke="#ffff00" stroke-width="1.25" shape-rendering="geometricPrecision"/>
<circle cx="379.4" cy="309.5" r="2" fill="#909090" stroke="#ffff00" stroke-width="1.25" shape-rendering="geometricPrecision"/>
<circle cx="388.7" cy="309.5" r="2" fill="#909090" stroke="#ffff00" stroke-width="1.25" shape-rendering="geometricPrecision"/>
<circle cx="323.4" cy="318.8" r="2" fill="#909090" stroke="#ffff00" stroke-width="1.25" shape-rendering="geometricPrecision"/>
<circle cx="332.7" cy="318.8" r="2" fill="#909090" stroke="#ffff00" stroke-width="1.25" shape-rendering="geometricPrecision"/>
<circle cx="379.4" cy="318.8" r="2" fill="#909090" stroke="#ffff00" stroke-width="1.25" shape-rendering="geometricPrecision"/>
<circle cx="388.7" cy="318.8" r="2" fill="#909090" stroke="#ffff00" stroke-width="1.25" shape-rendering="geometricPrecision"/>
<circle cx="323.4" cy="328.1" r="2" fill="#909090" stroke="#ffff00" stroke-width="1.25" shape-rendering="geometricPrecision"/>
<circle cx="332.7" cy="328.1" r="2" fill="#909090" stroke="#ffff00" stroke-width="1.25" shape-rendering="geometricPrecision"/>
<circle cx="379.4" cy="328.1" r="2" fill="#909090" stroke="#ffff00" stroke-width="1.25" shape-rendering="geometricPrecision"/>
<circle cx="388.7" cy="328.1" r="2" fill="#909090" stroke="#ffff00" stroke-width="1.25" shape-rendering="geometricPrecision"/>
<circle cx="323.4" cy="337.5" r="2" fill="#909090" stroke="#ffff00" stroke-width="1.25" shape-rendering="geometricPrecision"/>
<circle cx="332.7" cy="337.5" r="2" fill="#909090" stroke="#ffff00" stroke-width="1.25" shape-rendering="geometricPrecision"/>
<circle cx="342.1" cy="337.5" r="2" fill="#909090" stroke="#ffff00" stroke-width="1.25" shape-rendering="geometricPrecision"/>
<rect x="348.8" y="334.9" width="5.2" height="5.2" fill="#ffffff"/>
<circle cx="360.7" cy="337.5" r="2" fill="#909090" stroke="#ffff00" stroke-width="1.25" shape-rendering="geometricPrecision"/>
<circle cx="370" cy="337.5" r="2" fill="#909090" stroke="#ffff00" stroke-width="1.25" shape-rendering="geometricPrecision"/>
<circle cx="379.4" cy="337.5" r="2" fill="#909090" stroke="#ffff00" stroke-width="1.25" shape-rendering="geometricPrecision"/>
<circle cx="388.7" cy="337.5" r="2" fill="#909090" stroke="#ffff00" stroke-width="1.25" shape-rendering="geometricPrecision"/>
<circle cx="332.7" cy="346.8" r="2" fill="#909090" stroke="#ffff00" stroke-width="1.25" shape-rendering="geometricPrecision"/>
<circle cx="342.1" cy="346.8" r="2" fill="#909090" stroke="#ffff00" stroke-width="1.25" shape-rendering="geometricPrecision"/>
<circle cx="351.4" cy="346.8" r="2" fill="#909090" stroke="#ffff00" stroke-width="1.25" shape-rendering="geometricPrecision"/>
<circle cx="360.7" cy="346.8" r="2" fill="#909090" stroke="#ffff00" stroke-width="1.25" shape-rendering="geometricPrecision"/>
<circle cx="370" cy="346.8" r="2" fill="#909090" stroke="#ffff00" stroke-width="1.25" shape-rendering="geometricPrecision"/>
<circle cx="379.4" cy="346.8" r="2" fill="#909090" stroke="#ffff00" stroke-width="1.25" shape-rendering="geometricPrecision"/>
<polyline points="388.6,356.3 314.3,356.3 314.3,272.7 398,272.7 398,345.7 388.6,356.3" fill="none" stroke="#ffff00" stroke-width="1.1" stroke-linecap="butt" stroke-linejoin="miter" />
<path d="M289 337.5H292M290.5 336V339" stroke="#c000c0" stroke-width="1" fill="none"/>
<path d="M294 365.5H297M295.5 364V367" stroke="#c000c0" stroke-width="1" fill="none"/>
<path d="M299 377.5H302M300.5 376V379" stroke="#c000c0" stroke-width="1" fill="none"/>
<path d="M295 388.5H298M296.5 387V390" stroke="#c000c0" stroke-width="1" fill="none"/>
<path d="M261 354.5H264M262.5 353V356" stroke="#c000c0" stroke-width="1" fill="none"/>
<path d="M273 311.5H276M274.5 310V313" stroke="#c000c0" stroke-width="1" fill="none"/>
<path d="M357 323.5H360M358.5 322V325" stroke="#c000c0" stroke-width="1" fill="none"/>
<path d="M350 328.5H353M351.5 327V330" stroke="#c000c0" stroke-width="1" fill="none"/>
<path d="M401 272.5H404M402.5 271V274" stroke="#c000c0" stroke-width="1" fill="none"/>
<path d="M417 263.5H420M418.5 262V265" stroke="#c000c0" stroke-width="1" fill="none"/>
<path d="M441 344.5H444M442.5 343V346" stroke="#c000c0" stroke-width="1" fill="none"/>
<path d="M441 349.5H444M442.5 348V351" stroke="#c000c0" stroke-width="1" fill="none"/>
<path d="M436 353.5H439M437.5 352V355" stroke="#c000c0" stroke-width="1" fill="none"/>
<path d="M506 256.5H509M507.5 255V258" stroke="#c000c0" stroke-width="1" fill="none"/>
<path d="M554 263.5H557M555.5 262V265" stroke="#c000c0" stroke-width="1" fill="none"/>
<path d="M555 284.5H558M556.5 283V286" stroke="#c000c0" stroke-width="1" fill="none"/>
<path d="M500 288.5H503M501.5 287V290" stroke="#c000c0" stroke-width="1" fill="none"/>
<path d="M518 298.5H521M519.5 297V300" stroke="#c000c0" stroke-width="1" fill="none"/>
<path d="M459 314.5H462M460.5 313V316" stroke="#c000c0" stroke-width="1" fill="none"/>
<path d="M511 314.5H514M512.5 313V316" stroke="#c000c0" stroke-width="1" fill="none"/>
<path d="M459 323.5H462M460.5 322V325" stroke="#c000c0" stroke-width="1" fill="none"/>
<path d="M515 323.5H518M516.5 322V325" stroke="#c000c0" stroke-width="1" fill="none"/>
<path d="M518 297.5H521M519.5 296V299" stroke="#c000c0" stroke-width="1" fill="none"/>
<path d="M506 421.5H509M507.5 420V423" stroke="#c000c0" stroke-width="1" fill="none"/>
<path d="M555 423.5H558M556.5 422V425" stroke="#c000c0" stroke-width="1" fill="none"/>
<path d="M555 449.5H558M556.5 448V451" stroke="#c000c0" stroke-width="1" fill="none"/>
<path d="M493 465.5H496M494.5 464V467" stroke="#c000c0" stroke-width="1" fill="none"/>
<path d="M493 456.5H496M494.5 455V458" stroke="#c000c0" stroke-width="1" fill="none"/>
<path d="M542 456.5H545M543.5 455V458" stroke="#c000c0" stroke-width="1" fill="none"/>
<path d="M443 444.5H446M444.5 443V446" stroke="#c000c0" stroke-width="1" fill="none"/>
<path d="M417 437.5H420M418.5 436V439" stroke="#c000c0" stroke-width="1" fill="none"/>
<path d="M373 393.5H376M374.5 392V395" stroke="#c000c0" stroke-width="1" fill="none"/>
<text x="163.6" y="212.2" font-size="14.5" fill="#000000" text-anchor="start" font-weight="normal" textLength="72.6" lengthAdjust="spacingAndGlyphs" stroke="#909090" stroke-width="0.2">Pressure</text>
<text x="291.8" y="214.7" font-size="14.5" fill="#000000" text-anchor="start" font-weight="normal" textLength="65.2" lengthAdjust="spacingAndGlyphs" stroke="#909090" stroke-width="0.2">Vacuum</text>
<text x="262.4" y="166.9" font-size="10" fill="#000000" text-anchor="start" font-weight="normal" textLength="26.6" lengthAdjust="spacingAndGlyphs" transform="rotate(-90 262.4 166.9)"  stroke="#000" stroke-width="0.18">Hose</text>
<text x="139" y="185" font-size="8" fill="#000000" text-anchor="start" font-weight="normal" textLength="19" lengthAdjust="spacingAndGlyphs" font-family="Liberation Serif,serif" stroke="#000" stroke-width="0.18">Z101</text>
<text x="358" y="185" font-size="8" fill="#000000" text-anchor="start" font-weight="normal" textLength="19" lengthAdjust="spacingAndGlyphs" font-family="Liberation Serif,serif" stroke="#000" stroke-width="0.18">Z102</text>
<text x="413.2" y="140" font-size="9" fill="#000000" text-anchor="start" font-weight="normal" textLength="19" lengthAdjust="spacingAndGlyphs" transform="rotate(-90 413.2 140)"  stroke="#000" stroke-width="0.18">P106</text>
<text x="450.7" y="146" font-size="9" fill="#000000" text-anchor="start" font-weight="normal" textLength="34" lengthAdjust="spacingAndGlyphs" transform="rotate(-90 450.7 146)"  stroke="#000" stroke-width="0.18">Y Home</text>
<text x="486.2" y="140" font-size="9" fill="#000000" text-anchor="start" font-weight="normal" textLength="19" lengthAdjust="spacingAndGlyphs" transform="rotate(-90 486.2 140)"  stroke="#000" stroke-width="0.18">P107</text>
<text x="524.7" y="146" font-size="9" fill="#000000" text-anchor="start" font-weight="normal" textLength="33" lengthAdjust="spacingAndGlyphs" transform="rotate(-90 524.7 146)"  stroke="#000" stroke-width="0.18">X Home</text>
<text x="562.2" y="147" font-size="9" fill="#000000" text-anchor="start" font-weight="normal" textLength="19" lengthAdjust="spacingAndGlyphs" transform="rotate(-90 562.2 147)"  stroke="#000" stroke-width="0.18">P105</text>
<text x="599.7" y="154" font-size="9" fill="#000000" text-anchor="start" font-weight="normal" textLength="34" lengthAdjust="spacingAndGlyphs" transform="rotate(-90 599.7 154)"  stroke="#000" stroke-width="0.18">Y Drive</text>
<text x="637.2" y="147" font-size="9" fill="#000000" text-anchor="start" font-weight="normal" textLength="19" lengthAdjust="spacingAndGlyphs" transform="rotate(-90 637.2 147)"  stroke="#000" stroke-width="0.18">P104</text>
<text x="674.2" y="154" font-size="9" fill="#000000" text-anchor="start" font-weight="normal" textLength="34" lengthAdjust="spacingAndGlyphs" transform="rotate(-90 674.2 154)"  stroke="#000" stroke-width="0.18">X Drive</text>
<text x="65.2" y="228" font-size="9" fill="#000000" text-anchor="start" font-weight="normal" textLength="19" lengthAdjust="spacingAndGlyphs" transform="rotate(-90 65.2 228)"  stroke="#000" stroke-width="0.18">P302</text>
<text x="103.2" y="238" font-size="9" fill="#000000" text-anchor="start" font-weight="normal" textLength="39" lengthAdjust="spacingAndGlyphs" transform="rotate(-90 103.2 238)"  stroke="#000" stroke-width="0.18">LED_Pwr</text>
<text x="115.2" y="238" font-size="9" fill="#000000" text-anchor="start" font-weight="normal" textLength="39" lengthAdjust="spacingAndGlyphs" transform="rotate(-90 115.2 238)"  stroke="#000" stroke-width="0.18">LED_Stb</text>
<text x="151.2" y="228" font-size="9" fill="#000000" text-anchor="start" font-weight="normal" textLength="19" lengthAdjust="spacingAndGlyphs" transform="rotate(-90 151.2 228)"  stroke="#000" stroke-width="0.18">P305</text>
<text x="65.5" y="256.9" font-size="9" fill="#000000" text-anchor="end" font-weight="normal"  stroke="#000" stroke-width="0.18">+5V</text>
<text x="65.5" y="270.7" font-size="9" fill="#000000" text-anchor="end" font-weight="normal"  stroke="#000" stroke-width="0.18">+24V</text>
<text x="65.5" y="284.8" font-size="9" fill="#000000" text-anchor="end" font-weight="normal"  stroke="#000" stroke-width="0.18">+12V</text>
<text x="65.5" y="298.5" font-size="9" fill="#000000" text-anchor="end" font-weight="normal"  stroke="#000" stroke-width="0.18">-12V</text>
<text x="65.5" y="312.9" font-size="9" fill="#000000" text-anchor="end" font-weight="normal"  stroke="#000" stroke-width="0.18">GND</text>
<text x="103.7" y="319.6" font-size="9.5" fill="#000000" text-anchor="start" font-weight="normal" textLength="77.1" lengthAdjust="spacingAndGlyphs" transform="rotate(-90 103.7 319.6)"  stroke="#000" stroke-width="0.18">Accessory Port</text>
<text x="115.2" y="290.6" font-size="9" fill="#000000" text-anchor="start" font-weight="normal" textLength="18.3" lengthAdjust="spacingAndGlyphs" transform="rotate(-90 115.2 290.6)"  stroke="#000" stroke-width="0.18">P303</text>
<text x="4" y="317" font-size="11" fill="#ffff00" text-anchor="start" font-weight="normal" textLength="16" lengthAdjust="spacingAndGlyphs" >10"</text>
<text x="413.6" y="229" font-size="10" fill="#000000" text-anchor="start" font-weight="normal" textLength="44" lengthAdjust="spacingAndGlyphs" transform="rotate(-90 413.6 229)"  stroke="#000" stroke-width="0.18">LG Level</text>
<text x="450.7" y="216" font-size="9" fill="#000000" text-anchor="start" font-weight="normal" textLength="18" lengthAdjust="spacingAndGlyphs" transform="rotate(-90 450.7 216)"  stroke="#000" stroke-width="0.18">P109</text>
<text x="487.7" y="214.7" font-size="9" fill="#000000" text-anchor="start" font-weight="normal" textLength="15.7" lengthAdjust="spacingAndGlyphs" transform="rotate(-90 487.7 214.7)"  stroke="#000" stroke-width="0.18">P/V</text>
<text x="523.2" y="216" font-size="9" fill="#000000" text-anchor="start" font-weight="normal" textLength="18" lengthAdjust="spacingAndGlyphs" transform="rotate(-90 523.2 216)"  stroke="#000" stroke-width="0.18">P108</text>
<text x="457.4" y="231.3" font-size="8" fill="#000000" text-anchor="start" font-weight="normal" textLength="16.6" lengthAdjust="spacingAndGlyphs"  stroke="#000" stroke-width="0.18">P110</text>
<text x="531.2" y="175.8" font-size="8" fill="#000000" text-anchor="start" font-weight="normal" textLength="18.3" lengthAdjust="spacingAndGlyphs"  stroke="#000" stroke-width="0.18">C401</text>
<text x="505.5" y="232" font-size="8" fill="#000000" text-anchor="start" font-weight="normal" textLength="17.5" lengthAdjust="spacingAndGlyphs"  stroke="#000" stroke-width="0.18">C402</text>
<text x="396" y="255" font-size="8.5" fill="#000000" text-anchor="start" font-weight="normal" textLength="18.4" lengthAdjust="spacingAndGlyphs"  stroke="#000" stroke-width="0.18">X101</text>
<text x="252" y="260.7" font-size="6.5" fill="#000000" text-anchor="start" font-weight="normal" textLength="15" lengthAdjust="spacingAndGlyphs"  stroke="#000" stroke-width="0.18">U301</text>
<text x="293" y="320.5" font-size="9.5" fill="#ffff00" text-anchor="start" font-weight="normal" textLength="18.7" lengthAdjust="spacingAndGlyphs" >U101</text>
<text x="171.7" y="346.5" font-size="9" fill="#000000" text-anchor="start" font-weight="normal" textLength="18.2" lengthAdjust="spacingAndGlyphs" transform="rotate(-90 171.7 346.5)"  stroke="#000" stroke-width="0.18">P301</text>
<text x="208.9" y="358" font-size="9.5" fill="#000000" text-anchor="start" font-weight="normal" textLength="40" lengthAdjust="spacingAndGlyphs" transform="rotate(-90 208.9 358)"  stroke="#000" stroke-width="0.18">Power In</text>
<text x="86" y="398" font-size="9" fill="#000000" text-anchor="start" font-weight="normal" textLength="18.7" lengthAdjust="spacingAndGlyphs"  stroke="#000" stroke-width="0.18">C331</text>
<text x="76.5" y="406" font-size="9" fill="#000000" text-anchor="middle" font-weight="normal"  stroke="#000" stroke-width="0.18">+</text>
<text x="46.3" y="450.8" font-size="9" fill="#000000" text-anchor="start" font-weight="normal" textLength="18.7" lengthAdjust="spacingAndGlyphs"  stroke="#000" stroke-width="0.18">K301</text>
<text x="46.3" y="502.2" font-size="9" fill="#000000" text-anchor="start" font-weight="normal" textLength="51.9" lengthAdjust="spacingAndGlyphs"  stroke="#000" stroke-width="0.18">DPDT Relay</text>
<text x="166.6" y="529.8" font-size="9" fill="#000000" text-anchor="start" font-weight="normal" textLength="19.1" lengthAdjust="spacingAndGlyphs"  stroke="#000" stroke-width="0.18">P202</text>
<text x="246.2" y="529.8" font-size="9" fill="#000000" text-anchor="start" font-weight="normal" textLength="18.8" lengthAdjust="spacingAndGlyphs"  stroke="#000" stroke-width="0.18">P201</text>
<text x="453" y="372.8" font-size="8" fill="#000000" text-anchor="start" font-weight="bold" textLength="15.3" lengthAdjust="spacingAndGlyphs"  stroke="#000" stroke-width="0.18">P111</text>
<text x="479.3" y="368" font-size="6.5" fill="#000000" text-anchor="middle" font-weight="normal"  stroke="#000" stroke-width="0.18">2</text>
<text x="479.3" y="377" font-size="6.5" fill="#000000" text-anchor="middle" font-weight="normal"  stroke="#000" stroke-width="0.18">1</text>
<text x="536" y="368" font-size="6.5" fill="#000000" text-anchor="middle" font-weight="normal"  stroke="#000" stroke-width="0.18">10</text>
<text x="536" y="377" font-size="6.5" fill="#000000" text-anchor="middle" font-weight="normal"  stroke="#000" stroke-width="0.18">9</text>
<text x="468.8" y="398" font-size="12" fill="#000000" text-anchor="start" font-weight="normal" textLength="78" lengthAdjust="spacingAndGlyphs" stroke="#909090" stroke-width="0.15">Comm Port</text>
<text x="471.7" y="515.5" font-size="9" fill="#000000" text-anchor="start" font-weight="normal" textLength="17.5" lengthAdjust="spacingAndGlyphs" transform="rotate(-90 471.7 515.5)"  stroke="#000" stroke-width="0.18">P117</text>
<text x="506.6" y="526.6" font-size="10" fill="#000000" text-anchor="start" font-weight="normal" textLength="38.4" lengthAdjust="spacingAndGlyphs" transform="rotate(-90 506.6 526.6)"  stroke="#000" stroke-width="0.18">Air Pump</text>
<text x="612.8" y="538" font-size="9" fill="#000000" text-anchor="start" font-weight="normal" textLength="18.3" lengthAdjust="spacingAndGlyphs" transform="rotate(-90 612.8 538)"  stroke="#000" stroke-width="0.18">+24</text>
<text x="625.2" y="538" font-size="9" fill="#000000" text-anchor="start" font-weight="normal" textLength="18.3" lengthAdjust="spacingAndGlyphs" transform="rotate(-90 625.2 538)"  stroke="#000" stroke-width="0.18">+12</text>
<text x="562.6" y="211.5" font-size="9" fill="#000000" text-anchor="start" font-weight="normal" textLength="9" lengthAdjust="spacingAndGlyphs" transform="rotate(-90 562.6 211.5)"  stroke="#000" stroke-width="0.18">V2</text>
<text x="674.4" y="211.5" font-size="9" fill="#000000" text-anchor="start" font-weight="normal" textLength="9" lengthAdjust="spacingAndGlyphs" transform="rotate(-90 674.4 211.5)"  stroke="#000" stroke-width="0.18">V1</text>
<text x="562.6" y="253.5" font-size="9" fill="#000000" text-anchor="start" font-weight="normal" textLength="9" lengthAdjust="spacingAndGlyphs" transform="rotate(-90 562.6 253.5)"  stroke="#000" stroke-width="0.18">V4</text>
<text x="674.4" y="253.5" font-size="9" fill="#000000" text-anchor="start" font-weight="normal" textLength="9" lengthAdjust="spacingAndGlyphs" transform="rotate(-90 674.4 253.5)"  stroke="#000" stroke-width="0.18">V3</text>
<text x="562.6" y="295.5" font-size="9" fill="#000000" text-anchor="start" font-weight="normal" textLength="9" lengthAdjust="spacingAndGlyphs" transform="rotate(-90 562.6 295.5)"  stroke="#000" stroke-width="0.18">V6</text>
<text x="674.4" y="295.5" font-size="9" fill="#000000" text-anchor="start" font-weight="normal" textLength="9" lengthAdjust="spacingAndGlyphs" transform="rotate(-90 674.4 295.5)"  stroke="#000" stroke-width="0.18">V5</text>
<text x="562.6" y="337.5" font-size="9" fill="#000000" text-anchor="start" font-weight="normal" textLength="9" lengthAdjust="spacingAndGlyphs" transform="rotate(-90 562.6 337.5)"  stroke="#000" stroke-width="0.18">V8</text>
<text x="674.4" y="337.5" font-size="9" fill="#000000" text-anchor="start" font-weight="normal" textLength="9" lengthAdjust="spacingAndGlyphs" transform="rotate(-90 674.4 337.5)"  stroke="#000" stroke-width="0.18">V7</text>
<text x="562.6" y="381.5" font-size="9" fill="#000000" text-anchor="start" font-weight="normal" textLength="13" lengthAdjust="spacingAndGlyphs" transform="rotate(-90 562.6 381.5)"  stroke="#000" stroke-width="0.18">V10</text>
<text x="674.4" y="381.5" font-size="9" fill="#000000" text-anchor="start" font-weight="normal" textLength="13" lengthAdjust="spacingAndGlyphs" transform="rotate(-90 674.4 381.5)"  stroke="#000" stroke-width="0.18">V9</text>
<text x="562.6" y="423.5" font-size="9" fill="#000000" text-anchor="start" font-weight="normal" textLength="13" lengthAdjust="spacingAndGlyphs" transform="rotate(-90 562.6 423.5)"  stroke="#000" stroke-width="0.18">V12</text>
<text x="674.4" y="423.5" font-size="9" fill="#000000" text-anchor="start" font-weight="normal" textLength="13" lengthAdjust="spacingAndGlyphs" transform="rotate(-90 674.4 423.5)"  stroke="#000" stroke-width="0.18">V11</text>
<text x="562.6" y="465.5" font-size="9" fill="#000000" text-anchor="start" font-weight="normal" textLength="13" lengthAdjust="spacingAndGlyphs" transform="rotate(-90 562.6 465.5)"  stroke="#000" stroke-width="0.18">V14</text>
<text x="674.4" y="465.5" font-size="9" fill="#000000" text-anchor="start" font-weight="normal" textLength="13" lengthAdjust="spacingAndGlyphs" transform="rotate(-90 674.4 465.5)"  stroke="#000" stroke-width="0.18">V13</text>
<text x="562.6" y="507.5" font-size="9" fill="#000000" text-anchor="start" font-weight="normal" textLength="13" lengthAdjust="spacingAndGlyphs" transform="rotate(-90 562.6 507.5)"  stroke="#000" stroke-width="0.18">V16</text>
<text x="674.4" y="507.5" font-size="9" fill="#000000" text-anchor="start" font-weight="normal" textLength="13" lengthAdjust="spacingAndGlyphs" transform="rotate(-90 674.4 507.5)"  stroke="#000" stroke-width="0.18">V15</text>
<text x="618.8" y="244.3" font-size="11" fill="#000000" text-anchor="start" font-weight="normal" textLength="31" lengthAdjust="spacingAndGlyphs" transform="rotate(-90 618.8 244.3)"  stroke="#000" stroke-width="0.18">SW401</text>
<text x="597.1" y="217.3" font-size="8.5" fill="#000000" text-anchor="start" font-weight="normal" textLength="19" lengthAdjust="spacingAndGlyphs" transform="rotate(-90 597.1 217.3)"  stroke="#000" stroke-width="0.18">P402</text>
<text x="638.6" y="217.3" font-size="8.5" fill="#000000" text-anchor="start" font-weight="normal" textLength="19" lengthAdjust="spacingAndGlyphs" transform="rotate(-90 638.6 217.3)"  stroke="#000" stroke-width="0.18">P401</text>
<text x="597.1" y="259.3" font-size="8.5" fill="#000000" text-anchor="start" font-weight="normal" textLength="19" lengthAdjust="spacingAndGlyphs" transform="rotate(-90 597.1 259.3)"  stroke="#000" stroke-width="0.18">P404</text>
<text x="638.6" y="259.3" font-size="8.5" fill="#000000" text-anchor="start" font-weight="normal" textLength="19" lengthAdjust="spacingAndGlyphs" transform="rotate(-90 638.6 259.3)"  stroke="#000" stroke-width="0.18">P403</text>
<text x="618.8" y="328.3" font-size="11" fill="#000000" text-anchor="start" font-weight="normal" textLength="31" lengthAdjust="spacingAndGlyphs" transform="rotate(-90 618.8 328.3)"  stroke="#000" stroke-width="0.18">SW402</text>
<text x="597.1" y="301.3" font-size="8.5" fill="#000000" text-anchor="start" font-weight="normal" textLength="19" lengthAdjust="spacingAndGlyphs" transform="rotate(-90 597.1 301.3)"  stroke="#000" stroke-width="0.18">P406</text>
<text x="638.6" y="301.3" font-size="8.5" fill="#000000" text-anchor="start" font-weight="normal" textLength="19" lengthAdjust="spacingAndGlyphs" transform="rotate(-90 638.6 301.3)"  stroke="#000" stroke-width="0.18">P405</text>
<text x="597.1" y="343.3" font-size="8.5" fill="#000000" text-anchor="start" font-weight="normal" textLength="19" lengthAdjust="spacingAndGlyphs" transform="rotate(-90 597.1 343.3)"  stroke="#000" stroke-width="0.18">P408</text>
<text x="638.6" y="343.3" font-size="8.5" fill="#000000" text-anchor="start" font-weight="normal" textLength="19" lengthAdjust="spacingAndGlyphs" transform="rotate(-90 638.6 343.3)"  stroke="#000" stroke-width="0.18">P407</text>
<text x="618.8" y="412.3" font-size="11" fill="#000000" text-anchor="start" font-weight="normal" textLength="31" lengthAdjust="spacingAndGlyphs" transform="rotate(-90 618.8 412.3)"  stroke="#000" stroke-width="0.18">SW403</text>
<text x="597.1" y="385.3" font-size="8.5" fill="#000000" text-anchor="start" font-weight="normal" textLength="19" lengthAdjust="spacingAndGlyphs" transform="rotate(-90 597.1 385.3)"  stroke="#000" stroke-width="0.18">P410</text>
<text x="638.6" y="385.3" font-size="8.5" fill="#000000" text-anchor="start" font-weight="normal" textLength="19" lengthAdjust="spacingAndGlyphs" transform="rotate(-90 638.6 385.3)"  stroke="#000" stroke-width="0.18">P409</text>
<text x="597.1" y="427.3" font-size="8.5" fill="#000000" text-anchor="start" font-weight="normal" textLength="19" lengthAdjust="spacingAndGlyphs" transform="rotate(-90 597.1 427.3)"  stroke="#000" stroke-width="0.18">P412</text>
<text x="638.6" y="427.3" font-size="8.5" fill="#000000" text-anchor="start" font-weight="normal" textLength="19" lengthAdjust="spacingAndGlyphs" transform="rotate(-90 638.6 427.3)"  stroke="#000" stroke-width="0.18">P411</text>
<text x="618.8" y="496.3" font-size="11" fill="#000000" text-anchor="start" font-weight="normal" textLength="31" lengthAdjust="spacingAndGlyphs" transform="rotate(-90 618.8 496.3)"  stroke="#000" stroke-width="0.18">SW404</text>
<text x="597.1" y="469.3" font-size="8.5" fill="#000000" text-anchor="start" font-weight="normal" textLength="19" lengthAdjust="spacingAndGlyphs" transform="rotate(-90 597.1 469.3)"  stroke="#000" stroke-width="0.18">P414</text>
<text x="638.6" y="469.3" font-size="8.5" fill="#000000" text-anchor="start" font-weight="normal" textLength="19" lengthAdjust="spacingAndGlyphs" transform="rotate(-90 638.6 469.3)"  stroke="#000" stroke-width="0.18">P413</text>
<text x="597.1" y="511.3" font-size="8.5" fill="#000000" text-anchor="start" font-weight="normal" textLength="19" lengthAdjust="spacingAndGlyphs" transform="rotate(-90 597.1 511.3)"  stroke="#000" stroke-width="0.18">P416</text>
<text x="638.6" y="511.3" font-size="8.5" fill="#000000" text-anchor="start" font-weight="normal" textLength="19" lengthAdjust="spacingAndGlyphs" transform="rotate(-90 638.6 511.3)"  stroke="#000" stroke-width="0.18">P415</text>
<text x="469.3" y="248.5" font-size="5.5" fill="#000000" text-anchor="start" font-weight="bold" textLength="11.1" lengthAdjust="spacingAndGlyphs"  stroke="#000" stroke-width="0.18">Q402</text>
<text x="492" y="249" font-size="5.5" fill="#000000" text-anchor="start" font-weight="bold" textLength="12" lengthAdjust="spacingAndGlyphs"  stroke="#000" stroke-width="0.18">D403</text>
<text x="518.6" y="248.5" font-size="5.5" fill="#000000" text-anchor="start" font-weight="bold" textLength="11.4" lengthAdjust="spacingAndGlyphs"  stroke="#000" stroke-width="0.18">Q404</text>
<text x="541.8" y="270.7" font-size="5.5" fill="#000000" text-anchor="start" font-weight="bold" textLength="11.2" lengthAdjust="spacingAndGlyphs"  stroke="#000" stroke-width="0.18">D404</text>
<text x="469.3" y="274.3" font-size="5.5" fill="#000000" text-anchor="start" font-weight="bold" textLength="11.1" lengthAdjust="spacingAndGlyphs"  stroke="#000" stroke-width="0.18">Q405</text>
<text x="492" y="276" font-size="5.5" fill="#000000" text-anchor="start" font-weight="bold" textLength="12" lengthAdjust="spacingAndGlyphs"  stroke="#000" stroke-width="0.18">D405</text>
<text x="518.6" y="274.3" font-size="5.5" fill="#000000" text-anchor="start" font-weight="bold" textLength="11.4" lengthAdjust="spacingAndGlyphs"  stroke="#000" stroke-width="0.18">Q406</text>
<text x="541.8" y="297" font-size="5.5" fill="#000000" text-anchor="start" font-weight="bold" textLength="11.2" lengthAdjust="spacingAndGlyphs"  stroke="#000" stroke-width="0.18">D406</text>
<text x="435.7" y="253" font-size="5.5" fill="#000000" text-anchor="start" font-weight="bold" textLength="9.3" lengthAdjust="spacingAndGlyphs"  stroke="#000" stroke-width="0.18">U406</text>
<text x="502" y="309" font-size="5.5" fill="#000000" text-anchor="start" font-weight="bold" textLength="10" lengthAdjust="spacingAndGlyphs"  stroke="#000" stroke-width="0.18">U408</text>
<text x="469.3" y="413.5" font-size="5.5" fill="#000000" text-anchor="start" font-weight="bold" textLength="11.1" lengthAdjust="spacingAndGlyphs"  stroke="#000" stroke-width="0.18">Q407</text>
<text x="492" y="414" font-size="5.5" fill="#000000" text-anchor="start" font-weight="bold" textLength="12" lengthAdjust="spacingAndGlyphs"  stroke="#000" stroke-width="0.18">D407</text>
<text x="518.6" y="413.5" font-size="5.5" fill="#000000" text-anchor="start" font-weight="bold" textLength="11.4" lengthAdjust="spacingAndGlyphs"  stroke="#000" stroke-width="0.18">Q408</text>
<text x="541.8" y="413" font-size="5.5" fill="#000000" text-anchor="start" font-weight="bold" textLength="11.2" lengthAdjust="spacingAndGlyphs"  stroke="#000" stroke-width="0.18">D408</text>
<text x="469.3" y="439.3" font-size="5.5" fill="#000000" text-anchor="start" font-weight="bold" textLength="11.1" lengthAdjust="spacingAndGlyphs"  stroke="#000" stroke-width="0.18">Q409</text>
<text x="492" y="441" font-size="5.5" fill="#000000" text-anchor="start" font-weight="bold" textLength="12" lengthAdjust="spacingAndGlyphs"  stroke="#000" stroke-width="0.18">D409</text>
<text x="518.6" y="439.3" font-size="5.5" fill="#000000" text-anchor="start" font-weight="bold" textLength="11.4" lengthAdjust="spacingAndGlyphs"  stroke="#000" stroke-width="0.18">Q410</text>
<text x="541.8" y="439" font-size="5.5" fill="#000000" text-anchor="start" font-weight="bold" textLength="11.2" lengthAdjust="spacingAndGlyphs"  stroke="#000" stroke-width="0.18">D410</text>
<text x="435.7" y="418" font-size="5.5" fill="#000000" text-anchor="start" font-weight="bold" textLength="9.3" lengthAdjust="spacingAndGlyphs"  stroke="#000" stroke-width="0.18">U409</text>
<text x="355" y="228.5" font-size="5.5" fill="#000000" text-anchor="start" font-weight="bold" textLength="11" lengthAdjust="spacingAndGlyphs"  stroke="#000" stroke-width="0.18">R111</text>
<text x="374" y="228.5" font-size="5.5" fill="#000000" text-anchor="start" font-weight="bold" textLength="11" lengthAdjust="spacingAndGlyphs"  stroke="#000" stroke-width="0.18">C108</text>
<text x="409" y="323.6" font-size="5.5" fill="#000000" text-anchor="start" font-weight="bold" textLength="10" lengthAdjust="spacingAndGlyphs"  stroke="#000" stroke-width="0.18">C107</text>
<text x="409" y="347" font-size="5.5" fill="#000000" text-anchor="start" font-weight="bold" textLength="10" lengthAdjust="spacingAndGlyphs"  stroke="#000" stroke-width="0.18">R107</text>
<text x="465" y="330" font-size="5.5" fill="#000000" text-anchor="start" font-weight="bold" textLength="16" lengthAdjust="spacingAndGlyphs"  stroke="#000" stroke-width="0.18">C307 C306</text>
<text x="465" y="353" font-size="5.5" fill="#000000" text-anchor="start" font-weight="bold" textLength="16" lengthAdjust="spacingAndGlyphs"  stroke="#000" stroke-width="0.18">C309 C308</text>
<text x="213.8" y="307" font-size="5.5" fill="#000000" text-anchor="start" font-weight="bold" textLength="7.2" lengthAdjust="spacingAndGlyphs"  stroke="#000" stroke-width="0.18">C301</text>
<text x="288.5" y="300" font-size="5.5" fill="#000000" text-anchor="start" font-weight="bold" textLength="9.5" lengthAdjust="spacingAndGlyphs"  stroke="#000" stroke-width="0.18">C303</text>
<text x="275.2" y="319" font-size="5.5" fill="#000000" text-anchor="start" font-weight="bold" textLength="9.8" lengthAdjust="spacingAndGlyphs"  stroke="#000" stroke-width="0.18">C302</text>
<text x="247" y="331" font-size="5.5" fill="#000000" text-anchor="start" font-weight="bold" textLength="8" lengthAdjust="spacingAndGlyphs"  stroke="#000" stroke-width="0.18">L303</text>
<text x="225.5" y="369" font-size="5.5" fill="#000000" text-anchor="start" font-weight="bold" textLength="9.5" lengthAdjust="spacingAndGlyphs"  stroke="#000" stroke-width="0.18">C305</text>
<text x="246" y="363.5" font-size="5.5" fill="#000000" text-anchor="start" font-weight="bold" textLength="10" lengthAdjust="spacingAndGlyphs"  stroke="#000" stroke-width="0.18">U303</text>
<text x="266" y="363" font-size="5.5" fill="#000000" text-anchor="start" font-weight="bold" textLength="8" lengthAdjust="spacingAndGlyphs"  stroke="#000" stroke-width="0.18">C304</text>
<text x="269.4" y="387" font-size="5.5" fill="#000000" text-anchor="start" font-weight="bold" textLength="19.6" lengthAdjust="spacingAndGlyphs"  stroke="#000" stroke-width="0.18">R214 C204</text>
<text x="250.8" y="398.6" font-size="5.5" fill="#000000" text-anchor="start" font-weight="bold" textLength="9.2" lengthAdjust="spacingAndGlyphs"  stroke="#000" stroke-width="0.18">R210</text>
<text x="300.7" y="384" font-size="5.5" fill="#000000" text-anchor="start" font-weight="bold" textLength="9.3" lengthAdjust="spacingAndGlyphs"  stroke="#000" stroke-width="0.18">C202</text>
<text x="313" y="370" font-size="5.5" fill="#000000" text-anchor="start" font-weight="bold" textLength="10" lengthAdjust="spacingAndGlyphs"  stroke="#000" stroke-width="0.18">R107</text>
<text x="362" y="370" font-size="5.5" fill="#000000" text-anchor="start" font-weight="bold" textLength="10" lengthAdjust="spacingAndGlyphs"  stroke="#000" stroke-width="0.18">C106</text>
<text x="332.7" y="382" font-size="5.5" fill="#000000" text-anchor="start" font-weight="bold" textLength="20.3" lengthAdjust="spacingAndGlyphs"  stroke="#000" stroke-width="0.18">R105 R106</text>
<text x="381.5" y="372" font-size="5.5" fill="#000000" text-anchor="start" font-weight="bold" textLength="10.5" lengthAdjust="spacingAndGlyphs"  stroke="#000" stroke-width="0.18">C207</text>
<text x="381.5" y="387" font-size="5.5" fill="#000000" text-anchor="start" font-weight="bold" textLength="10.5" lengthAdjust="spacingAndGlyphs"  stroke="#000" stroke-width="0.18">U107</text>
<text x="333.4" y="391" font-size="5.5" fill="#000000" text-anchor="start" font-weight="bold" textLength="9.6" lengthAdjust="spacingAndGlyphs"  stroke="#000" stroke-width="0.18">R203</text>
<text x="333.4" y="400.5" font-size="5.5" fill="#000000" text-anchor="start" font-weight="bold" textLength="9.6" lengthAdjust="spacingAndGlyphs"  stroke="#000" stroke-width="0.18">C205</text>
<text x="333.4" y="419" font-size="5.5" fill="#000000" text-anchor="start" font-weight="bold" textLength="9.6" lengthAdjust="spacingAndGlyphs"  stroke="#000" stroke-width="0.18">R204</text>
<rect x="333" y="406.2" width="10" height="3.3" fill="#000000"/>
<text x="270.7" y="417" font-size="5.5" fill="#000000" text-anchor="start" font-weight="bold" textLength="8.3" lengthAdjust="spacingAndGlyphs"  stroke="#000" stroke-width="0.18">C201</text>
<text x="270.7" y="440.5" font-size="5.5" fill="#000000" text-anchor="start" font-weight="bold" textLength="9.3" lengthAdjust="spacingAndGlyphs"  stroke="#000" stroke-width="0.18">R207</text>
<text x="261.4" y="452" font-size="5.5" fill="#000000" text-anchor="start" font-weight="bold" textLength="9.6" lengthAdjust="spacingAndGlyphs"  stroke="#000" stroke-width="0.18">R206</text>
<text x="261.4" y="461.5" font-size="5.5" fill="#000000" text-anchor="start" font-weight="bold" textLength="9.6" lengthAdjust="spacingAndGlyphs"  stroke="#000" stroke-width="0.18">R205</text>
<text x="261.4" y="472.5" font-size="5.5" fill="#000000" text-anchor="start" font-weight="bold" textLength="9.6" lengthAdjust="spacingAndGlyphs"  stroke="#000" stroke-width="0.18">Q201</text>
<text x="300.6" y="512" font-size="5.5" fill="#000000" text-anchor="start" font-weight="bold" textLength="9.4" lengthAdjust="spacingAndGlyphs"  stroke="#000" stroke-width="0.18">U201</text>
<text x="314.7" y="512" font-size="5.5" fill="#000000" text-anchor="start" font-weight="bold" textLength="8.3" lengthAdjust="spacingAndGlyphs"  stroke="#000" stroke-width="0.18">R211</text>
<text x="328.8" y="531" font-size="5.5" fill="#000000" text-anchor="start" font-weight="bold" textLength="9.2" lengthAdjust="spacingAndGlyphs"  stroke="#000" stroke-width="0.18">C209</text>
<text x="346.2" y="533" font-size="5.5" fill="#000000" text-anchor="start" font-weight="bold" textLength="9.8" lengthAdjust="spacingAndGlyphs"  stroke="#000" stroke-width="0.18">Q203</text>
<text x="375.3" y="517" font-size="5.5" fill="#000000" text-anchor="start" font-weight="bold" textLength="8.7" lengthAdjust="spacingAndGlyphs"  stroke="#000" stroke-width="0.18">U203</text>
<text x="433" y="527" font-size="5.5" fill="#000000" text-anchor="start" font-weight="bold" textLength="10" lengthAdjust="spacingAndGlyphs"  stroke="#000" stroke-width="0.18">Q411</text>
<text x="526.9" y="527" font-size="5.5" fill="#000000" text-anchor="start" font-weight="bold" textLength="9.1" lengthAdjust="spacingAndGlyphs"  stroke="#000" stroke-width="0.18">Q412</text>
<text x="414.6" y="482" font-size="5.5" fill="#000000" text-anchor="start" font-weight="bold" textLength="9.4" lengthAdjust="spacingAndGlyphs"  stroke="#000" stroke-width="0.18">Q2L1</text>
<text x="414.6" y="496" font-size="5.5" fill="#000000" text-anchor="start" font-weight="bold" textLength="9.4" lengthAdjust="spacingAndGlyphs"  stroke="#000" stroke-width="0.18">Q2L2</text>
<text x="415" y="465" font-size="5.5" fill="#000000" text-anchor="start" font-weight="bold" textLength="8" lengthAdjust="spacingAndGlyphs"  stroke="#000" stroke-width="0.18">C212</text>
<text x="96" y="389" font-size="5.5" fill="#000000" text-anchor="start" font-weight="bold" textLength="12" lengthAdjust="spacingAndGlyphs"  stroke="#000" stroke-width="0.18">FWB301</text>
<text x="488.7" y="403" font-size="5.5" fill="#000000" text-anchor="start" font-weight="bold" textLength="8.9" lengthAdjust="spacingAndGlyphs"  stroke="#000" stroke-width="0.18">C4L1</text>
<text x="363" y="479.5" font-size="5.5" fill="#000000" text-anchor="start" font-weight="bold" textLength="13" lengthAdjust="spacingAndGlyphs"  stroke="#000" stroke-width="0.18">C210</text>
<text x="380" y="479.5" font-size="5.5" fill="#000000" text-anchor="start" font-weight="bold" textLength="13" lengthAdjust="spacingAndGlyphs"  stroke="#000" stroke-width="0.18">C211</text>
<text x="343" y="479" font-size="5.5" fill="#000000" text-anchor="start" font-weight="bold" textLength="16" lengthAdjust="spacingAndGlyphs"  stroke="#000" stroke-width="0.18">D201 C208</text>
<text x="326" y="518" font-size="5.5" fill="#000000" text-anchor="start" font-weight="bold" textLength="32" lengthAdjust="spacingAndGlyphs"  stroke="#000" stroke-width="0.18">R2 R212 R213 R9</text>
<text x="292" y="430" font-size="5.5" fill="#000000" text-anchor="start" font-weight="bold" textLength="11" lengthAdjust="spacingAndGlyphs"  stroke="#000" stroke-width="0.18">R201</text>
<text x="270" y="517" font-size="5.5" fill="#000000" text-anchor="start" font-weight="bold" textLength="20" lengthAdjust="spacingAndGlyphs"  stroke="#000" stroke-width="0.18">R8 R209</text>
</svg>
<div class="sb" style="left:4px;top:549px;width:689px">
<div class="c" style="left:1px;width:160px"></div><div class="t" style="left:44px">7.687</div><div class="t" style="left:119px">1.515</div>
<div class="c" style="left:163px;width:79px"></div><div class="abs" style="left:170px;top:10px;width:3px;height:3px;background:#000;border-radius:0.5px"></div><div class="abs" style="left:184px;top:10px;width:3px;height:3px;background:#000;border-radius:0.5px"></div><div class="abs" style="left:198px;top:10px;width:3px;height:3px;background:#000;border-radius:0.5px"></div><div class="abs" style="left:212px;top:10px;width:3px;height:3px;background:#000;border-radius:0.5px"></div>
<div class="c" style="left:244px;width:344px"></div><div class="t" style="left:248px">Grid: 0.025"  Layer:</div>
<div class="abs" style="left:394px;top:6px;width:25px;height:11px;background:#a80000"></div><div class="t" style="left:423px">Top Copper</div>
<div class="c" style="left:590px;width:99px"></div><div class="t" style="left:594px">10:57am</div>
<svg class="abs" style="left:676px;top:6px" width="13" height="13"><line x1="12" y1="0" x2="0" y2="12" stroke="#aca899" stroke-width="1.2"/><line x1="12" y1="1" x2="1" y2="12" stroke="#fff" stroke-width="1"/><line x1="12" y1="4" x2="4" y2="12" stroke="#aca899" stroke-width="1.2"/><line x1="12" y1="5" x2="5" y2="12" stroke="#fff" stroke-width="1"/><line x1="12" y1="8" x2="8" y2="12" stroke="#aca899" stroke-width="1.2"/><line x1="12" y1="9" x2="9" y2="12" stroke="#fff" stroke-width="1"/></svg>
</div>
</div>
<div class="win" id="w2">
<div class="tb"></div>
<svg class="abs" style="left:0;top:0" width="26" height="28"><rect x="11.5" y="9.5" width="10" height="14" fill="#fff" stroke="#303048" stroke-width="1"/><g stroke="#6a6ae8" stroke-width="1"><line x1="13" y1="13.5" x2="21" y2="13.5"/><line x1="13" y1="15.5" x2="21" y2="15.5"/><line x1="13" y1="17.5" x2="21" y2="17.5"/><line x1="13" y1="19.5" x2="21" y2="19.5"/><line x1="13" y1="21.5" x2="21" y2="21.5"/></g><polygon points="10.2,8.4 20.9,8.4 16,18.3 6,18.3" fill="#ffff00" stroke="#303000" stroke-width="0.8"/><rect x="11.3" y="11.2" width="5.5" height="1.4" fill="#6a6a00" transform="skewX(-20) translate(4.3 0)"/></svg>
<div class="tt" style="left:26px;top:9px">C:\Circad\ALCAT\AP1-d\ap1-d.pcb.LOG</div>
<div class="cb mn" style="left:355px;top:6px"><div class="abs" style="left:4px;top:11px;width:7px;height:3px;background:#fff"></div></div>
<div class="cb mx" style="left:378px;top:6px"><div class="abs" style="left:3px;top:3px;width:12px;height:11px;border:1px solid #fff;border-top-width:3px"></div></div>
<div class="cb x" style="left:401px;top:6px"><svg class="abs" style="left:0;top:0" width="18" height="18"><path d="M4.5 4.5L13.5 13.5M13.5 4.5L4.5 13.5" stroke="#fff" stroke-width="2.2" fill="none"/></svg></div>
<div class="menu" style="left:4px;top:30px;width:420px;height:19px">
<span class="" style="left:6px"><u>F</u>ile</span>
<span class="" style="left:34px"><u>E</u>dit</span>
<span class="" style="left:63.6px"><u>U</u>n-Do</span>
<span class="d" style="left:105px"><u>S</u>etup</span>
<span class="d" style="left:145.5px"><u>Z</u>oom</span>
<span class="" style="left:183px">Help <u>?</u></span>
</div>
<div class="tabs" style="left:4px;top:49px;width:420px;height:26px">
<div class="tab sel" style="left:2px;top:1px;width:104px">ap1-d.pcb.LOG</div>
</div>
<div class="abs" style="left:4px;top:74px;width:403px;height:455px;background:#fff;border-top:1px solid #000;border-left:1px solid #404040;overflow:hidden;font-family:'Liberation Mono',monospace;font-size:13.33px;line-height:16px;color:#222;white-space:pre">
<div class="abs" style="left:160.5px;top:2px;color:#000">13    THD   7.000   2.250   +1</div>
<div class="abs" style="left:160.5px;top:18px;color:#000">14    THD   7.000   2.350   +2</div>
<div class="abs" style="left:160.5px;top:34px;color:#000">15    THD   7.000   2.450   +1</div>
<div class="abs" style="left:160.5px;top:50px;color:#000">16    THD   7.000   2.550   +2</div>
<div class="abs" style="left:1px;top:82px">U101</div><div class="abs" style="left:65px;top:82px">PLCC44T</div>
<div class="abs" style="left:160px;top:81px;width:216px;height:16px;background:#000"></div>
<div class="abs" style="left:160.5px;top:82px;color:#fff">1     THD   4.025   3.725   </div>
<div class="abs" style="left:160.5px;top:98px;color:#000">2     THD   4.125   3.625   B0</div>
<div class="abs" style="left:160.5px;top:114px;color:#000">3     THD   4.125   3.725   B1</div>
<div class="abs" style="left:160.5px;top:130px;color:#000">4     THD   4.225   3.625   B2</div>
<div class="abs" style="left:160.5px;top:146px;color:#000">5     THD   4.225   3.725   B3</div>
<div class="abs" style="left:160.5px;top:162px;color:#000">6     THD   4.325   3.625   B4</div>
<div class="abs" style="left:160.5px;top:178px;color:#000">7     THD   4.425   3.725   B5</div>
<div class="abs" style="left:160.5px;top:194px;color:#000">8     THD   4.325   3.725   B6</div>
<div class="abs" style="left:160.5px;top:210px;color:#000">9     THD   4.425   3.825   B7</div>
<div class="abs" style="left:160.5px;top:226px;color:#000">10    THD   4.325   3.825   Re</div>
<div class="abs" style="left:160.5px;top:242px;color:#000">11    THD   4.425   3.925   D0</div>
<div class="abs" style="left:160.5px;top:258px;color:#000">12    THD   4.325   3.925   </div>
<div class="abs" style="left:160.5px;top:274px;color:#000">13    THD   4.425   4.025   D1</div>
<div class="abs" style="left:160.5px;top:290px;color:#000">14    THD   4.325   4.025   D2</div>
<div class="abs" style="left:160.5px;top:306px;color:#000">15    THD   4.425   4.125   D3</div>
<div class="abs" style="left:160.5px;top:322px;color:#000">16    THD   4.325   4.125   D4</div>
<div class="abs" style="left:160.5px;top:338px;color:#000">17    THD   4.425   4.225   D5</div>
<div class="abs" style="left:160.5px;top:354px;color:#000">18    THD   4.325   4.325   D6</div>
<div class="abs" style="left:160.5px;top:370px;color:#000">19    THD   4.325   4.225   D7</div>
<div class="abs" style="left:160.5px;top:386px;color:#000">20    THD   4.225   4.325   $1</div>
<div class="abs" style="left:160.5px;top:402px;color:#000">21    THD   4.225   4.225   $1</div>
<div class="abs" style="left:160.5px;top:418px;color:#000">23    THD   4.125   4.225   </div>
<div class="abs" style="left:160.5px;top:434px;color:#000">24    THD   4.025   4.325   C0</div>
<div class="abs" style="left:160.5px;top:450px;color:#000">25    THD   4.025   4.225   C1</div>
</div>
<div class="abs" style="left:407px;top:75px;width:17px;height:454px;background:#f3f1ec"><div class="abs" style="left:0;top:0;width:17px;height:17px;background:linear-gradient(135deg,#d9e4fd,#b9cdfb 60%,#c2d3fc);border:1px solid #fff;box-shadow:0 0 0 1px #b5c6ee inset;border-radius:2px"><svg width="17" height="17" class="abs" style="left:0;top:0"><polyline points="4,9 8.5,4.5 13,9" fill="none" stroke="#4d6185" stroke-width="2.2"/></svg></div><div class="abs" style="left:0;top:326px;width:17px;height:15px;background:linear-gradient(135deg,#d9e4fd,#b9cdfb 60%,#c2d3fc);border:1px solid #fff;box-shadow:0 0 0 1px #b5c6ee inset;border-radius:2px"></div><div class="abs" style="left:0;top:437px;width:17px;height:17px;background:linear-gradient(135deg,#d9e4fd,#b9cdfb 60%,#c2d3fc);border:1px solid #fff;box-shadow:0 0 0 1px #b5c6ee inset;border-radius:2px"><svg width="17" height="17" class="abs" style="left:0;top:0"><polyline points="4,6 8.5,10.5 13,6" fill="none" stroke="#4d6185" stroke-width="2.2"/></svg></div></div>
<div class="abs" style="left:4px;top:529px;width:403px;height:17px;background:#f3f1ec"><div class="abs" style="left:0;top:0;width:17px;height:17px;background:linear-gradient(135deg,#d9e4fd,#b9cdfb 60%,#c2d3fc);border:1px solid #fff;box-shadow:0 0 0 1px #b5c6ee inset;border-radius:2px"><svg width="17" height="17" class="abs" style="left:0;top:0"><polyline points="10,3.5 5.5,8 10,12.5" fill="none" stroke="#4d6185" stroke-width="2.2"/></svg></div><div class="abs" style="left:17px;top:0;width:222px;height:17px;background:linear-gradient(135deg,#d9e4fd,#b9cdfb 60%,#c2d3fc);border:1px solid #fff;box-shadow:0 0 0 1px #b5c6ee inset;border-radius:2px"><div class="abs" style="left:107px;top:4px;width:8px;height:7px;background:repeating-linear-gradient(90deg,#eef4fe 0 1px,#8cb0f8 1px 2px)"></div></div><div class="abs" style="left:386px;top:0;width:17px;height:17px;background:linear-gradient(135deg,#d9e4fd,#b9cdfb 60%,#c2d3fc);border:1px solid #fff;box-shadow:0 0 0 1px #b5c6ee inset;border-radius:2px"><svg width="17" height="17" class="abs" style="left:0;top:0"><polyline points="6,3.5 10.5,8 6,12.5" fill="none" stroke="#4d6185" stroke-width="2.2"/></svg></div></div>
<div class="abs" style="left:407px;top:529px;width:17px;height:17px;background:#ece9d8"></div>
<div class="abs" style="left:4px;top:546px;width:420px;height:1px;background:#404040"></div>
<div class="sb" style="left:4px;top:547px;width:420px">
<div class="c" style="left:1px;width:120px"></div><div class="t" style="left:38px">791</div><div class="t" style="left:100px">83</div>
<div class="c" style="left:123px;width:79px"></div><div class="abs" style="left:129px;top:10px;width:3px;height:3px;background:#000;border-radius:0.5px"></div><div class="abs" style="left:143px;top:10px;width:3px;height:3px;background:#000;border-radius:0.5px"></div><div class="abs" style="left:157px;top:10px;width:3px;height:3px;background:#000;border-radius:0.5px"></div><div class="abs" style="left:171px;top:10px;width:3px;height:3px;background:#000;border-radius:0.5px"></div>
<div class="c" style="left:204px;width:116px"></div>
<div class="c" style="left:322px;width:98px"></div><div class="t" style="left:325px">10:57am</div>
<svg class="abs" style="left:407px;top:6px" width="13" height="13"><line x1="12" y1="0" x2="0" y2="12" stroke="#aca899" stroke-width="1.2"/><line x1="12" y1="1" x2="1" y2="12" stroke="#fff" stroke-width="1"/><line x1="12" y1="4" x2="4" y2="12" stroke="#aca899" stroke-width="1.2"/><line x1="12" y1="5" x2="5" y2="12" stroke="#fff" stroke-width="1"/><line x1="12" y1="8" x2="8" y2="12" stroke="#aca899" stroke-width="1.2"/><line x1="12" y1="9" x2="9" y2="12" stroke="#fff" stroke-width="1"/></svg>
</div>
</div>
</body></html>
